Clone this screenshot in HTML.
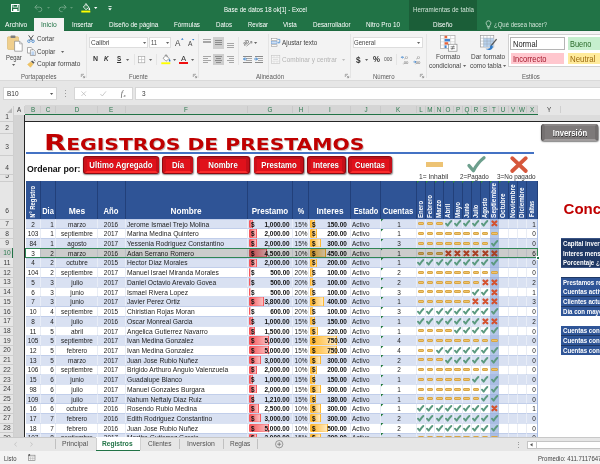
<!DOCTYPE html>
<html lang="es"><head><meta charset="utf-8"><title>Base de datos 18 ok[1] - Excel</title>
<style>
html,body{margin:0;padding:0;}
body{width:600px;height:464px;overflow:hidden;position:relative;background:#fff;font-family:"Liberation Sans",sans-serif;}
#app{position:absolute;left:0;top:0;width:600px;height:464px;overflow:hidden;will-change:transform;}
#app div{position:absolute;box-sizing:border-box;}
.t{white-space:nowrap;}
svg{position:absolute;overflow:visible;}
</style></head><body><div id="app">
<div style="left:0.00px;top:0.00px;width:600.00px;height:31.00px;background:#217346;"></div>
<div style="left:409.30px;top:0.00px;width:67.50px;height:31.00px;background:#1b5e38;"></div>
<div style="left:0.00px;top:30.00px;width:600.00px;height:1.00px;background:#1e6a40;"></div>
<div style="left:34.00px;top:18.00px;width:30.00px;height:13.00px;background:#f3f3f3;"></div>
<div class="t" style="top:5.94px;font-size:6.6px;line-height:7.92px;color:#ffffff;left:224.00px;transform-origin:0 50%;transform:scaleX(0.927);">Base de datos 18 ok[1] - Excel</div>
<div class="t" style="top:6.12px;font-size:6.3px;line-height:7.56px;color:#cfe3d6;left:412.80px;transform-origin:0 50%;transform:scaleX(0.984);">Herramientas de tabla</div>
<div class="t" style="top:21.02px;font-size:6.8px;line-height:8.16px;color:#ffffff;left:4.70px;transform-origin:0 50%;transform:scaleX(0.983);">Archivo</div>
<div class="t" style="top:21.02px;font-size:6.8px;line-height:8.16px;color:#217346;left:41.00px;transform-origin:0 50%;transform:scaleX(0.989);">Inicio</div>
<div class="t" style="top:21.02px;font-size:6.8px;line-height:8.16px;color:#ffffff;left:72.00px;transform-origin:0 50%;transform:scaleX(0.911);">Insertar</div>
<div class="t" style="top:21.02px;font-size:6.8px;line-height:8.16px;color:#ffffff;left:108.70px;transform-origin:0 50%;transform:scaleX(0.931);">Diseño de página</div>
<div class="t" style="top:21.02px;font-size:6.8px;line-height:8.16px;color:#ffffff;left:174.00px;transform-origin:0 50%;transform:scaleX(0.917);">Fórmulas</div>
<div class="t" style="top:21.02px;font-size:6.8px;line-height:8.16px;color:#ffffff;left:215.90px;transform-origin:0 50%;transform:scaleX(0.906);">Datos</div>
<div class="t" style="top:21.02px;font-size:6.8px;line-height:8.16px;color:#ffffff;left:248.00px;transform-origin:0 50%;transform:scaleX(0.868);">Revisar</div>
<div class="t" style="top:21.02px;font-size:6.8px;line-height:8.16px;color:#ffffff;left:283.20px;transform-origin:0 50%;transform:scaleX(0.920);">Vista</div>
<div class="t" style="top:21.02px;font-size:6.8px;line-height:8.16px;color:#ffffff;left:312.50px;transform-origin:0 50%;transform:scaleX(0.919);">Desarrollador</div>
<div class="t" style="top:21.02px;font-size:6.8px;line-height:8.16px;color:#ffffff;left:365.90px;transform-origin:0 50%;transform:scaleX(0.940);">Nitro Pro 10</div>
<div class="t" style="top:21.02px;font-size:6.8px;line-height:8.16px;color:#ffffff;left:433.30px;transform-origin:0 50%;transform:scaleX(0.921);">Diseño</div>
<div class="t" style="top:20.92px;font-size:6.8px;line-height:8.16px;color:#cfe3d6;left:494.00px;transform-origin:0 50%;transform:scaleX(0.882);">¿Qué desea hacer?</div>
<svg style="left:485px;top:19.5px" width="7" height="10" viewBox="0 0 7 10"><path d="M3.5 .8a2.4 2.4 0 0 0-1.3 4.4v1.3h2.6V5.2A2.4 2.4 0 0 0 3.5.8z" fill="none" stroke="#d5e8dc" stroke-width=".7"/><path d="M2.4 7.6h2.2M2.7 8.7h1.6" stroke="#d5e8dc" stroke-width=".6"/></svg>
<svg style="left:10.5px;top:4px" width="9" height="8" viewBox="0 0 9 8"><rect x=".5" y=".5" width="7.6" height="7" fill="none" stroke="#fff" stroke-width="1"/><rect x="2" y=".5" width="4.6" height="2.6" fill="none" stroke="#fff" stroke-width=".8"/><rect x="2.2" y="5" width="4.2" height="2.5" fill="#fff"/></svg>
<svg style="left:34px;top:4px" width="10" height="8" viewBox="0 0 10 8"><path d="M1 3.2h4.6a2.2 2.2 0 0 1 0 4.4H4.5" fill="none" stroke="#6fa586" stroke-width="1"/><path d="M3.2 .8L.8 3.2l2.4 2.4" fill="none" stroke="#6fa586" stroke-width="1"/></svg>
<svg style="left:46.5px;top:7px" width="3" height="2" viewBox="0 0 3 2"><path d="M0 0h3L1.5 1.8z" fill="#5e9a77"/></svg>
<svg style="left:57px;top:4px" width="10" height="8" viewBox="0 0 10 8"><path d="M9 3.2H4.4a2.2 2.2 0 0 0 0 4.4h1.1" fill="none" stroke="#6fa586" stroke-width="1"/><path d="M6.8 .8l2.4 2.4-2.4 2.4" fill="none" stroke="#6fa586" stroke-width="1"/></svg>
<svg style="left:70px;top:7px" width="3" height="2" viewBox="0 0 3 2"><path d="M0 0h3L1.5 1.8z" fill="#5e9a77"/></svg>
<svg style="left:80.5px;top:3px" width="10" height="10" viewBox="0 0 10 10"><path d="M2.200 3.900l3-2.600 2.800 3-3 2.400z" fill="#3a8558" stroke="#fff" stroke-width=".8"/><path d="M4 1.5c0-1.2 1.8-1.2 1.8 0v1.3" fill="none" stroke="#fff" stroke-width=".6"/><path d="M8.3 4.6c.6.9.9 1.4.9 1.8a.8.8 0 0 1-1.6 0c0-.4.3-.9.7-1.8z" fill="#fff"/><rect x=".3" y="7.6" width="9" height="1.9" fill="#ffff00"/></svg>
<svg style="left:94px;top:7px" width="3.4" height="2" viewBox="0 0 3.4 2"><path d="M0 0h3.4L1.7 1.9z" fill="#fff"/></svg>
<svg style="left:108px;top:5.5px" width="4" height="5" viewBox="0 0 4 5"><path d="M.4 .5h3.2" stroke="#fff" stroke-width=".8"/><path d="M.2 2.3h3.6L2 4.4z" fill="#fff"/></svg>
<div style="left:0.00px;top:31.00px;width:600.00px;height:50.00px;background:#f3f3f3;"></div>
<div style="left:0.00px;top:80.30px;width:600.00px;height:1.00px;background:#dadada;"></div>
<div style="left:0.00px;top:81.30px;width:600.00px;height:24.00px;background:#e6e6e6;"></div>
<div style="left:86.30px;top:34.00px;width:0.80px;height:44.00px;background:#e4e4e4;"></div>
<div style="left:198.30px;top:34.00px;width:0.80px;height:44.00px;background:#e4e4e4;"></div>
<div style="left:267.50px;top:34.00px;width:0.80px;height:44.00px;background:#e4e4e4;"></div>
<div style="left:350.00px;top:34.00px;width:0.80px;height:44.00px;background:#e4e4e4;"></div>
<div style="left:425.50px;top:34.00px;width:0.80px;height:44.00px;background:#e4e4e4;"></div>
<div style="left:133.70px;top:54.00px;width:0.70px;height:11.00px;background:#e4e4e4;"></div>
<div style="left:156.30px;top:54.00px;width:0.70px;height:11.00px;background:#e4e4e4;"></div>
<div style="left:238.30px;top:37.00px;width:0.70px;height:28.00px;background:#e4e4e4;"></div>
<div style="left:396.30px;top:54.00px;width:0.70px;height:11.00px;background:#e4e4e4;"></div>
<div class="t" style="top:72.70px;font-size:6.5px;line-height:7.80px;color:#5a5a5a;left:20.50px;transform-origin:0 50%;transform:scaleX(0.927);">Portapapeles</div>
<div class="t" style="top:72.70px;font-size:6.5px;line-height:7.80px;color:#5a5a5a;left:128.70px;transform-origin:0 50%;transform:scaleX(0.929);">Fuente</div>
<div class="t" style="top:72.70px;font-size:6.5px;line-height:7.80px;color:#5a5a5a;left:256.00px;transform-origin:0 50%;transform:scaleX(0.934);">Alineación</div>
<div class="t" style="top:72.70px;font-size:6.5px;line-height:7.80px;color:#5a5a5a;left:372.50px;transform-origin:0 50%;transform:scaleX(0.930);">Número</div>
<div class="t" style="top:72.70px;font-size:6.5px;line-height:7.80px;color:#5a5a5a;left:521.70px;transform-origin:0 50%;transform:scaleX(0.930);">Estilos</div>
<svg style="left:80.5px;top:74px" width="4" height="4" viewBox="0 0 4 4"><path d="M.3 3V.3H3" fill="none" stroke="#777" stroke-width=".6"/><path d="M1.4 1.4L3.7 3.7M3.7 1.9v1.8H1.9" fill="none" stroke="#777" stroke-width=".6"/></svg>
<svg style="left:192.5px;top:74px" width="4" height="4" viewBox="0 0 4 4"><path d="M.3 3V.3H3" fill="none" stroke="#777" stroke-width=".6"/><path d="M1.4 1.4L3.7 3.7M3.7 1.9v1.8H1.9" fill="none" stroke="#777" stroke-width=".6"/></svg>
<svg style="left:344.5px;top:74px" width="4" height="4" viewBox="0 0 4 4"><path d="M.3 3V.3H3" fill="none" stroke="#777" stroke-width=".6"/><path d="M1.4 1.4L3.7 3.7M3.7 1.9v1.8H1.9" fill="none" stroke="#777" stroke-width=".6"/></svg>
<svg style="left:420px;top:74px" width="4" height="4" viewBox="0 0 4 4"><path d="M.3 3V.3H3" fill="none" stroke="#777" stroke-width=".6"/><path d="M1.4 1.4L3.7 3.7M3.7 1.9v1.8H1.9" fill="none" stroke="#777" stroke-width=".6"/></svg>
<svg style="left:7px;top:35px" width="16" height="17" viewBox="0 0 16 17"><rect x=".5" y="1.8" width="11" height="12.6" rx=".8" fill="#f0cf8d" stroke="#d9b56a" stroke-width=".6"/><rect x="3.6" y=".5" width="4.8" height="2.6" rx=".6" fill="#7d7d7d"/><path d="M7.6 6.2h5l2.6 2.6v7.4H7.6z" fill="#fff" stroke="#8a8a8a" stroke-width=".7"/><path d="M12.6 6.2v2.6h2.6" fill="none" stroke="#8a8a8a" stroke-width=".6"/></svg>
<div class="t" style="top:53.90px;font-size:7px;line-height:8.40px;color:#444444;left:6.00px;transform-origin:0 50%;transform:scaleX(0.840);">Pegar</div>
<svg style="left:11.70px;top:64.40px" width="3.2" height="1.9" viewBox="0 0 3.2 1.9"><path d="M0 0h3.2L1.6 1.9z" fill="#666"/></svg>
<svg style="left:27px;top:34.5px" width="8" height="8" viewBox="0 0 8 8"><path d="M1.6 .3l3.700 5.100M6.300 .3l-3.700 5.100" stroke="#444" stroke-width=".9" fill="none"/><circle cx="1.9" cy="6.2" r="1.3" fill="none" stroke="#2b79c8" stroke-width=".7"/><circle cx="6" cy="6.2" r="1.3" fill="none" stroke="#2b79c8" stroke-width=".7"/></svg>
<div class="t" style="top:34.90px;font-size:7px;line-height:8.40px;color:#444444;left:36.70px;transform-origin:0 50%;transform:scaleX(0.890);">Cortar</div>
<svg style="left:26.5px;top:46.5px" width="9" height="9" viewBox="0 0 9 9"><path d="M.5 .5h3.6l1.4 1.4v4.2h-5z" fill="#fff" stroke="#777" stroke-width=".6"/><path d="M3.4 2.8h3.3l1.6 1.6v4.1h-4.9z" fill="#fff" stroke="#777" stroke-width=".6"/><path d="M4.4 5h2.8M4.4 6.2h2.8M4.4 7.4h2.8" stroke="#4a8ad4" stroke-width=".5"/></svg>
<div class="t" style="top:47.60px;font-size:7px;line-height:8.40px;color:#444444;left:36.70px;transform-origin:0 50%;transform:scaleX(0.887);">Copiar</div>
<svg style="left:60.70px;top:50.60px" width="3.2" height="1.9" viewBox="0 0 3.2 1.9"><path d="M0 0h3.2L1.6 1.9z" fill="#666"/></svg>
<svg style="left:26.5px;top:58.5px" width="9" height="9" viewBox="0 0 9 9"><path d="M5.2 1.4l2.4 2.2-1.2 1.2L4 2.6z" fill="#555"/><path d="M6.9 .6l1.4 1.3" stroke="#555" stroke-width=".9"/><path d="M.6 5.4L3.8 2.9l2.3 2.2-2.6 3.2z" fill="#f2c463" stroke="#dba935" stroke-width=".4"/></svg>
<div class="t" style="top:59.80px;font-size:7px;line-height:8.40px;color:#444444;left:36.70px;transform-origin:0 50%;transform:scaleX(0.935);">Copiar formato</div>
<div style="left:89.20px;top:37.00px;width:59.00px;height:11.30px;background:#fff;border:.7px solid #dddddd;"></div>
<div style="left:149.30px;top:37.00px;width:22.20px;height:11.30px;background:#fff;border:.7px solid #dddddd;"></div>
<div class="t" style="top:39.10px;font-size:7px;line-height:8.40px;color:#444444;left:91.00px;transform-origin:0 50%;transform:scaleX(0.933);">Calibri</div>
<div class="t" style="top:39.10px;font-size:7px;line-height:8.40px;color:#444444;left:151.20px;transform-origin:0 50%;transform:scaleX(0.826);">11</div>
<svg style="left:142.90px;top:41.80px" width="3.2" height="1.9" viewBox="0 0 3.2 1.9"><path d="M0 0h3.2L1.6 1.9z" fill="#666"/></svg>
<svg style="left:165.90px;top:41.80px" width="3.2" height="1.9" viewBox="0 0 3.2 1.9"><path d="M0 0h3.2L1.6 1.9z" fill="#666"/></svg>
<div class="t" style="top:38.44px;font-size:8.6px;line-height:10.32px;color:#444444;left:175.30px;transform-origin:0 50%;transform:scaleX(0.941);">A</div>
<svg style="left:180.6px;top:38.2px" width="2.6" height="1.8" viewBox="0 0 2.6 1.8"><path d="M0 1.8h2.6L1.3 0z" fill="#2b79c8"/></svg>
<div class="t" style="top:39.88px;font-size:7.2px;line-height:8.64px;color:#444444;left:187.60px;transform-origin:0 50%;transform:scaleX(0.916);">A</div>
<svg style="left:191.8px;top:38.6px" width="2.4" height="1.6" viewBox="0 0 2.4 1.6"><path d="M0 0h2.4L1.2 1.6z" fill="#2b79c8"/></svg>
<div class="t" style="top:55.46px;font-size:7.4px;line-height:8.88px;color:#333;font-weight:bold;left:92.60px;transform-origin:0 50%;transform:scaleX(0.936);">N</div>
<div class="t" style="top:55.46px;font-size:7.4px;line-height:8.88px;color:#333;font-weight:bold;left:104.00px;transform-origin:0 50%;transform:scaleX(0.861);font-style:italic;">K</div>
<div class="t" style="top:55.16px;font-size:7.4px;line-height:8.88px;color:#333;font-weight:bold;left:116.60px;transform-origin:0 50%;transform:scaleX(0.851);text-decoration:underline;">S</div>
<svg style="left:126.20px;top:58.70px" width="3.2" height="1.9" viewBox="0 0 3.2 1.9"><path d="M0 0h3.2L1.6 1.9z" fill="#666"/></svg>
<svg style="left:138px;top:55.5px" width="7.2" height="7.2" viewBox="0 0 7.2 7.2"><rect x=".4" y=".4" width="6.4" height="6.4" fill="#fff" stroke="#9a9a9a" stroke-width=".6"/><path d="M3.6 .4v6.4M.4 3.6h6.4" stroke="#b5b5b5" stroke-width=".6"/></svg>
<svg style="left:149.20px;top:58.70px" width="3.2" height="1.9" viewBox="0 0 3.2 1.9"><path d="M0 0h3.2L1.6 1.9z" fill="#666"/></svg>
<svg style="left:160.6px;top:54px" width="10" height="10.5" viewBox="0 0 10 10.5"><path d="M2 4.2l3.2-2.8 3 3.2L5 7.2z" fill="#fff" stroke="#666" stroke-width=".6"/><path d="M4 1.8c0-1.4 2-1.4 2 0v1.4" fill="none" stroke="#666" stroke-width=".6"/><path d="M8.6 4.8c.6.9.9 1.5.9 1.9a.8.8 0 0 1-1.7 0c0-.4.3-1 .8-1.9z" fill="#2b79c8"/><rect x=".3" y="8.3" width="9" height="1.9" fill="#ffff00"/></svg>
<svg style="left:172.60px;top:58.70px" width="3.2" height="1.9" viewBox="0 0 3.2 1.9"><path d="M0 0h3.2L1.6 1.9z" fill="#666"/></svg>
<div class="t" style="top:54.24px;font-size:7.6px;line-height:9.12px;color:#333;left:180.60px;transform-origin:0 50%;transform:scaleX(1.026);">A</div>
<div style="left:179.00px;top:62.00px;width:8.80px;height:1.90px;background:#f01010;"></div>
<svg style="left:190.60px;top:58.70px" width="3.2" height="1.9" viewBox="0 0 3.2 1.9"><path d="M0 0h3.2L1.6 1.9z" fill="#666"/></svg>
<div style="left:213.00px;top:37.00px;width:11.20px;height:11.50px;background:#cecece;"></div>
<div style="left:213.00px;top:53.60px;width:11.20px;height:11.80px;background:#cecece;"></div>
<div style="left:203.20px;top:38.60px;width:7.60px;height:0.80px;background:#a6a6a6;"></div>
<div style="left:203.20px;top:40.50px;width:7.60px;height:0.80px;background:#a6a6a6;"></div>
<div style="left:203.20px;top:42.40px;width:7.60px;height:0.80px;background:#a6a6a6;"></div>
<div style="left:214.80px;top:40.40px;width:7.60px;height:0.80px;background:#8c8c8c;"></div>
<div style="left:214.80px;top:42.30px;width:7.60px;height:0.80px;background:#8c8c8c;"></div>
<div style="left:214.80px;top:44.20px;width:7.60px;height:0.80px;background:#8c8c8c;"></div>
<div style="left:226.60px;top:43.00px;width:7.60px;height:0.80px;background:#a6a6a6;"></div>
<div style="left:226.60px;top:44.90px;width:7.60px;height:0.80px;background:#a6a6a6;"></div>
<div style="left:226.60px;top:46.80px;width:7.60px;height:0.80px;background:#a6a6a6;"></div>
<div style="left:203.20px;top:56.40px;width:7.60px;height:0.80px;background:#a6a6a6;"></div>
<div style="left:203.20px;top:58.20px;width:5.00px;height:0.80px;background:#a6a6a6;"></div>
<div style="left:203.20px;top:60.00px;width:7.60px;height:0.80px;background:#a6a6a6;"></div>
<div style="left:203.20px;top:61.80px;width:5.00px;height:0.80px;background:#a6a6a6;"></div>
<div style="left:214.80px;top:56.40px;width:7.60px;height:0.80px;background:#8c8c8c;"></div>
<div style="left:216.10px;top:58.20px;width:5.00px;height:0.80px;background:#8c8c8c;"></div>
<div style="left:214.80px;top:60.00px;width:7.60px;height:0.80px;background:#8c8c8c;"></div>
<div style="left:216.10px;top:61.80px;width:5.00px;height:0.80px;background:#8c8c8c;"></div>
<div style="left:226.60px;top:56.40px;width:7.60px;height:0.80px;background:#a6a6a6;"></div>
<div style="left:229.20px;top:58.20px;width:5.00px;height:0.80px;background:#a6a6a6;"></div>
<div style="left:226.60px;top:60.00px;width:7.60px;height:0.80px;background:#a6a6a6;"></div>
<div style="left:229.20px;top:61.80px;width:5.00px;height:0.80px;background:#a6a6a6;"></div>
<svg style="left:243px;top:37.5px" width="10" height="9" viewBox="0 0 10 9"><text x="0" y="6.4" font-size="6" font-family="Liberation Sans, sans-serif" fill="#555" transform="rotate(-38 3 5)">ab</text><path d="M3.5 8.2L9 3.6M9 3.6l-2 .2M9 3.6l-.3 2" stroke="#666" stroke-width=".6" fill="none"/></svg>
<svg style="left:253.90px;top:41.80px" width="3.2" height="1.9" viewBox="0 0 3.2 1.9"><path d="M0 0h3.2L1.6 1.9z" fill="#666"/></svg>
<div style="left:246.40px;top:55.60px;width:5.20px;height:0.70px;background:#a6a6a6;"></div>
<div style="left:246.40px;top:57.80px;width:5.20px;height:0.70px;background:#a6a6a6;"></div>
<div style="left:246.40px;top:60.00px;width:5.20px;height:0.70px;background:#a6a6a6;"></div>
<div style="left:246.40px;top:62.20px;width:5.20px;height:0.70px;background:#a6a6a6;"></div>
<div style="left:243.20px;top:55.60px;width:8.40px;height:0.70px;background:#8a8a8a;"></div>
<div style="left:243.20px;top:62.20px;width:8.40px;height:0.70px;background:#8a8a8a;"></div>
<svg style="left:243px;top:57.2px" width="4" height="4" viewBox="0 0 4 4"><path d="M3.8 2H.6M2 .5L.5 2 2 3.5" fill="none" stroke="#2b79c8" stroke-width=".9"/></svg>
<div style="left:257.70px;top:55.60px;width:5.20px;height:0.70px;background:#a6a6a6;"></div>
<div style="left:257.70px;top:57.80px;width:5.20px;height:0.70px;background:#a6a6a6;"></div>
<div style="left:257.70px;top:60.00px;width:5.20px;height:0.70px;background:#a6a6a6;"></div>
<div style="left:257.70px;top:62.20px;width:5.20px;height:0.70px;background:#a6a6a6;"></div>
<div style="left:254.50px;top:55.60px;width:8.40px;height:0.70px;background:#8a8a8a;"></div>
<div style="left:254.50px;top:62.20px;width:8.40px;height:0.70px;background:#8a8a8a;"></div>
<svg style="left:254.3px;top:57.2px" width="4" height="4" viewBox="0 0 4 4"><path d="M.2 2h3.2M2 .5L3.5 2 2 3.5" fill="none" stroke="#2b79c8" stroke-width=".9"/></svg>
<svg style="left:271px;top:38px" width="9.5" height="9" viewBox="0 0 9.5 9"><rect x=".4" y=".4" width="5.6" height="2" fill="#fff" stroke="#888" stroke-width=".5"/><rect x=".4" y="3.6" width="5.6" height="2.2" fill="#cfe0f4" stroke="#6b9bd6" stroke-width=".5"/><rect x=".4" y="6.8" width="5.6" height="1.8" fill="#fff" stroke="#888" stroke-width=".5"/><path d="M6.6 1.4h2.2v3.2H7.2M8 3.6l-1 1 1 1" fill="none" stroke="#2b79c8" stroke-width=".6"/></svg>
<div class="t" style="top:39.20px;font-size:7px;line-height:8.40px;color:#444444;left:281.70px;transform-origin:0 50%;transform:scaleX(0.907);">Ajustar texto</div>
<svg style="left:271px;top:55px" width="9.5" height="9" viewBox="0 0 9.5 9"><rect x=".4" y=".4" width="8.4" height="8" fill="#f6f6f6" stroke="#c4c4c4" stroke-width=".6"/><path d="M.4 2.6h8.4M.4 6.2h8.4M3 .4v2.2M6 .4v2.2M3 6.2v2.2M6 6.2v2.2" stroke="#d0d0d0" stroke-width=".5"/><path d="M2 4.4h5" stroke="#c8c8c8" stroke-width=".6"/></svg>
<div class="t" style="top:56.10px;font-size:7px;line-height:8.40px;color:#b4b4b4;left:281.70px;transform-origin:0 50%;transform:scaleX(0.924);">Combinar y centrar</div>
<svg style="left:341.80px;top:58.90px" width="3.2" height="1.9" viewBox="0 0 3.2 1.9"><path d="M0 0h3.2L1.6 1.9z" fill="#bdbdbd"/></svg>
<div style="left:352.50px;top:37.00px;width:70.20px;height:11.30px;background:#fff;border:.7px solid #dddddd;"></div>
<div class="t" style="top:39.20px;font-size:7px;line-height:8.40px;color:#444444;left:354.40px;transform-origin:0 50%;transform:scaleX(0.863);">General</div>
<svg style="left:416.90px;top:41.80px" width="3.2" height="1.9" viewBox="0 0 3.2 1.9"><path d="M0 0h3.2L1.6 1.9z" fill="#666"/></svg>
<div class="t" style="top:54.76px;font-size:8.4px;line-height:10.08px;color:#333;font-weight:bold;left:356.20px;transform-origin:0 50%;transform:scaleX(0.985);">$</div>
<svg style="left:365.40px;top:58.90px" width="3.2" height="1.9" viewBox="0 0 3.2 1.9"><path d="M0 0h3.2L1.6 1.9z" fill="#666"/></svg>
<div class="t" style="top:55.48px;font-size:8.2px;line-height:9.84px;color:#333;font-weight:bold;left:373.40px;transform-origin:0 50%;transform:scaleX(0.960);">%</div>
<div class="t" style="top:56.24px;font-size:5.6px;line-height:6.72px;color:#555;left:384.30px;transform-origin:0 50%;transform:scaleX(0.899);">000</div>
<svg style="left:401px;top:54.6px" width="9.5" height="9.5" viewBox="0 0 9.5 9.5"><text x="3" y="3.9" font-size="4.2" font-family="Liberation Sans, sans-serif" fill="#666">,0</text><text x="1.6" y="8.9" font-size="4.2" font-family="Liberation Sans, sans-serif" fill="#666">,00</text><path d="M3 2.3H.5M1.5 1.2L.4 2.3l1.1 1.1" fill="none" stroke="#2b79c8" stroke-width=".7"/></svg>
<svg style="left:413.3px;top:54.6px" width="9.5" height="9.5" viewBox="0 0 9.5 9.5"><text x="3" y="3.9" font-size="4.2" font-family="Liberation Sans, sans-serif" fill="#666">,0</text><text x="1.6" y="8.9" font-size="4.2" font-family="Liberation Sans, sans-serif" fill="#666">,00</text><path d="M.4 6.9h2.4M1.8 5.8l1.1 1.1-1.1 1.1" fill="none" stroke="#2b79c8" stroke-width=".7"/></svg>
<svg style="left:440px;top:34.6px" width="17.5" height="16.6" viewBox="0 0 17.5 16.6"><rect x=".4" y=".4" width="14.6" height="13" fill="#fff" stroke="#9a9a9a" stroke-width=".6"/><path d="M.4 3.6h14.6M.4 6.8h14.6M.4 10h14.6M4.2 .4v13M10.6 .4v13" stroke="#c2c2c2" stroke-width=".5"/><rect x="4.6" y=".8" width="2.6" height="2.4" fill="#e8643c"/><rect x="4.6" y="4" width="5.4" height="2.4" fill="#3f83d2"/><rect x="4.6" y="7.2" width="3.6" height="2.4" fill="#e8643c"/><rect x="4.6" y="10.4" width="2" height="2.6" fill="#3f83d2"/><rect x="8.4" y="9.2" width="8.6" height="7" fill="#fff" stroke="#777" stroke-width=".6"/><path d="M10.6 11.8h4.2M10.6 13.6h4.2M13.6 10.6l-1.8 4.2" stroke="#444" stroke-width=".6"/></svg>
<div class="t" style="top:53.40px;font-size:7px;line-height:8.40px;color:#444444;left:435.80px;transform-origin:0 50%;transform:scaleX(0.929);">Formato</div>
<div class="t" style="top:61.80px;font-size:7px;line-height:8.40px;color:#444444;left:429.20px;transform-origin:0 50%;transform:scaleX(0.914);">condicional</div>
<svg style="left:463.00px;top:64.90px" width="3.2" height="1.9" viewBox="0 0 3.2 1.9"><path d="M0 0h3.2L1.6 1.9z" fill="#666"/></svg>
<svg style="left:480px;top:34.6px" width="17.5" height="16.6" viewBox="0 0 17.5 16.6"><rect x=".4" y=".4" width="13.4" height="11.6" fill="#fff" stroke="#8d8d8d" stroke-width=".6"/><rect x="3.6" y="3.2" width="10.2" height="8.8" fill="#b8d2ee"/><path d="M.4 3.2h13.4M.4 6.1h13.4M.4 9h13.4M3.6 .4v11.6M7 .4v11.6M10.4 .4v11.6" stroke="#9aa7b5" stroke-width=".5"/><path d="M16.6 4.2l-5.6 6.6" stroke="#555" stroke-width="1.3"/><path d="M11.4 10.2c-1.2.2-1.6 1.4-1.4 2.6-.6 1-2.6 1.2-4.4 1 1 .9 2.6 1.3 4.2 1.1 2.2-.3 3.4-2 3-3.6z" fill="#2e79c7"/></svg>
<div class="t" style="top:53.40px;font-size:7px;line-height:8.40px;color:#444444;left:470.80px;transform-origin:0 50%;transform:scaleX(0.925);">Dar formato</div>
<div class="t" style="top:61.80px;font-size:7px;line-height:8.40px;color:#444444;left:469.70px;transform-origin:0 50%;transform:scaleX(0.920);">como tabla</div>
<svg style="left:502.80px;top:64.90px" width="3.2" height="1.9" viewBox="0 0 3.2 1.9"><path d="M0 0h3.2L1.6 1.9z" fill="#666"/></svg>
<div style="left:508.30px;top:34.20px;width:95.00px;height:33.30px;background:#fff;border:.7px solid #d0d0d0;"></div>
<div style="left:510.00px;top:36.80px;width:55.00px;height:13.00px;background:#fff;border:1.3px solid #b5b5b5;"></div>
<div class="t" style="top:38.76px;font-size:8.4px;line-height:10.08px;color:#222;left:513.00px;transform-origin:0 50%;transform:scaleX(0.898);">Normal</div>
<div style="left:567.60px;top:37.20px;width:40.00px;height:12.40px;background:#c6efce;"></div>
<div class="t" style="top:38.76px;font-size:8.4px;line-height:10.08px;color:#2a6a2a;left:570.00px;transform-origin:0 50%;transform:scaleX(0.885);">Bueno</div>
<div style="left:510.60px;top:52.60px;width:53.60px;height:11.40px;background:#ffc7ce;"></div>
<div class="t" style="top:53.86px;font-size:8.4px;line-height:10.08px;color:#a3152a;left:512.80px;transform-origin:0 50%;transform:scaleX(0.897);">Incorrecto</div>
<div style="left:567.60px;top:52.60px;width:40.00px;height:11.40px;background:#ffeb9c;"></div>
<div class="t" style="top:53.86px;font-size:8.4px;line-height:10.08px;color:#9c6a10;left:569.80px;transform-origin:0 50%;transform:scaleX(0.942);">Neutral</div>
<div style="left:2.70px;top:86.80px;width:54.60px;height:13.00px;background:#fff;border:.6px solid #d6d6d6;"></div>
<div class="t" style="top:89.88px;font-size:7.2px;line-height:8.64px;color:#333;left:6.70px;transform-origin:0 50%;transform:scaleX(0.898);">B10</div>
<svg style="left:50.40px;top:92.70px" width="3.2" height="1.9" viewBox="0 0 3.2 1.9"><path d="M0 0h3.2L1.6 1.9z" fill="#555"/></svg>
<div style="left:65.00px;top:90.40px;width:0.80px;height:0.90px;background:#9c9c9c;"></div>
<div style="left:65.00px;top:93.00px;width:0.80px;height:0.90px;background:#9c9c9c;"></div>
<div style="left:65.00px;top:95.60px;width:0.80px;height:0.90px;background:#9c9c9c;"></div>
<div style="left:74.00px;top:86.80px;width:58.60px;height:13.00px;background:#fff;border:.6px solid #d6d6d6;"></div>
<svg style="left:81.4px;top:91px" width="5.4" height="5.4" viewBox="0 0 5.4 5.4"><path d="M.4 .4l4.6 4.6M5 .4L.4 5" stroke="#b5b5b5" stroke-width=".7"/></svg>
<svg style="left:100.4px;top:91px" width="6.4" height="5.4" viewBox="0 0 6.4 5.4"><path d="M.4 3l1.9 2L6 .4" fill="none" stroke="#b5b5b5" stroke-width=".7"/></svg>
<div class="t" style="top:89.20px;font-size:8px;line-height:9.60px;color:#555;left:120.80px;transform-origin:0 50%;font-style:italic;font-family:'Liberation Serif',serif;">f</div>
<div class="t" style="top:92.60px;font-size:5px;line-height:6.00px;color:#555;left:123.40px;transform-origin:0 50%;font-style:italic;font-family:'Liberation Serif',serif;">x</div>
<div style="left:135.40px;top:86.80px;width:470.00px;height:13.00px;background:#fff;border:.6px solid #d6d6d6;"></div>
<div class="t" style="top:89.76px;font-size:7.4px;line-height:8.88px;color:#333;left:142.20px;transform-origin:0 50%;transform:scaleX(0.875);">3</div>
<div style="left:0.00px;top:104.80px;width:600.00px;height:9.90px;background:#e6e6e6;"></div>
<div style="left:25.00px;top:105.20px;width:512.50px;height:8.40px;background:#d5d5d5;"></div>
<div style="left:25.00px;top:113.50px;width:512.50px;height:1.15px;background:#217346;"></div>
<div style="left:24.20px;top:106.00px;width:0.70px;height:7.40px;background:#cfcfcf;"></div>
<div class="t" style="top:106.00px;font-size:7px;line-height:8.40px;color:#3b3b3b;left:-131.05px;width:300px;text-align:center;transform-origin:50% 50%;transform:scaleX(0.900);">A</div>
<div style="left:39.60px;top:106.00px;width:0.70px;height:7.40px;background:#c9c9c9;"></div>
<div class="t" style="top:106.00px;font-size:7px;line-height:8.40px;color:#2c7a4e;left:-117.50px;width:300px;text-align:center;transform-origin:50% 50%;transform:scaleX(0.900);">B</div>
<div style="left:55.30px;top:106.00px;width:0.70px;height:7.40px;background:#c9c9c9;"></div>
<div class="t" style="top:106.00px;font-size:7px;line-height:8.40px;color:#2c7a4e;left:-102.15px;width:300px;text-align:center;transform-origin:50% 50%;transform:scaleX(0.900);">C</div>
<div style="left:97.10px;top:106.00px;width:0.70px;height:7.40px;background:#c9c9c9;"></div>
<div class="t" style="top:106.00px;font-size:7px;line-height:8.40px;color:#2c7a4e;left:-73.40px;width:300px;text-align:center;transform-origin:50% 50%;transform:scaleX(0.900);">D</div>
<div style="left:125.00px;top:106.00px;width:0.70px;height:7.40px;background:#c9c9c9;"></div>
<div class="t" style="top:106.00px;font-size:7px;line-height:8.40px;color:#2c7a4e;left:-38.55px;width:300px;text-align:center;transform-origin:50% 50%;transform:scaleX(0.900);">E</div>
<div style="left:247.10px;top:106.00px;width:0.70px;height:7.40px;background:#c9c9c9;"></div>
<div class="t" style="top:106.00px;font-size:7px;line-height:8.40px;color:#2c7a4e;left:36.45px;width:300px;text-align:center;transform-origin:50% 50%;transform:scaleX(0.900);">F</div>
<div style="left:292.10px;top:106.00px;width:0.70px;height:7.40px;background:#c9c9c9;"></div>
<div class="t" style="top:106.00px;font-size:7px;line-height:8.40px;color:#2c7a4e;left:120.00px;width:300px;text-align:center;transform-origin:50% 50%;transform:scaleX(0.900);">G</div>
<div style="left:308.30px;top:106.00px;width:0.70px;height:7.40px;background:#c9c9c9;"></div>
<div class="t" style="top:106.00px;font-size:7px;line-height:8.40px;color:#2c7a4e;left:150.60px;width:300px;text-align:center;transform-origin:50% 50%;transform:scaleX(0.900);">H</div>
<div style="left:350.10px;top:106.00px;width:0.70px;height:7.40px;background:#c9c9c9;"></div>
<div class="t" style="top:106.00px;font-size:7px;line-height:8.40px;color:#2c7a4e;left:179.60px;width:300px;text-align:center;transform-origin:50% 50%;transform:scaleX(0.900);">I</div>
<div style="left:380.10px;top:106.00px;width:0.70px;height:7.40px;background:#c9c9c9;"></div>
<div class="t" style="top:106.00px;font-size:7px;line-height:8.40px;color:#2c7a4e;left:215.50px;width:300px;text-align:center;transform-origin:50% 50%;transform:scaleX(0.900);">J</div>
<div style="left:415.90px;top:106.00px;width:0.70px;height:7.40px;background:#c9c9c9;"></div>
<div class="t" style="top:106.00px;font-size:7px;line-height:8.40px;color:#2c7a4e;left:248.40px;width:300px;text-align:center;transform-origin:50% 50%;transform:scaleX(0.900);">K</div>
<div style="left:425.07px;top:106.00px;width:0.70px;height:7.40px;background:#c9c9c9;"></div>
<div class="t" style="top:106.00px;font-size:7px;line-height:8.40px;color:#2c7a4e;left:270.88px;width:300px;text-align:center;transform-origin:50% 50%;transform:scaleX(0.900);">L</div>
<div style="left:434.23px;top:106.00px;width:0.70px;height:7.40px;background:#c9c9c9;"></div>
<div class="t" style="top:106.00px;font-size:7px;line-height:8.40px;color:#2c7a4e;left:280.05px;width:300px;text-align:center;transform-origin:50% 50%;transform:scaleX(0.900);">M</div>
<div style="left:443.40px;top:106.00px;width:0.70px;height:7.40px;background:#c9c9c9;"></div>
<div class="t" style="top:106.00px;font-size:7px;line-height:8.40px;color:#2c7a4e;left:289.22px;width:300px;text-align:center;transform-origin:50% 50%;transform:scaleX(0.900);">N</div>
<div style="left:452.57px;top:106.00px;width:0.70px;height:7.40px;background:#c9c9c9;"></div>
<div class="t" style="top:106.00px;font-size:7px;line-height:8.40px;color:#2c7a4e;left:298.38px;width:300px;text-align:center;transform-origin:50% 50%;transform:scaleX(0.900);">O</div>
<div style="left:461.74px;top:106.00px;width:0.70px;height:7.40px;background:#c9c9c9;"></div>
<div class="t" style="top:106.00px;font-size:7px;line-height:8.40px;color:#2c7a4e;left:307.55px;width:300px;text-align:center;transform-origin:50% 50%;transform:scaleX(0.900);">P</div>
<div style="left:470.90px;top:106.00px;width:0.70px;height:7.40px;background:#c9c9c9;"></div>
<div class="t" style="top:106.00px;font-size:7px;line-height:8.40px;color:#2c7a4e;left:316.72px;width:300px;text-align:center;transform-origin:50% 50%;transform:scaleX(0.900);">Q</div>
<div style="left:480.07px;top:106.00px;width:0.70px;height:7.40px;background:#c9c9c9;"></div>
<div class="t" style="top:106.00px;font-size:7px;line-height:8.40px;color:#2c7a4e;left:325.89px;width:300px;text-align:center;transform-origin:50% 50%;transform:scaleX(0.900);">R</div>
<div style="left:489.24px;top:106.00px;width:0.70px;height:7.40px;background:#c9c9c9;"></div>
<div class="t" style="top:106.00px;font-size:7px;line-height:8.40px;color:#2c7a4e;left:335.05px;width:300px;text-align:center;transform-origin:50% 50%;transform:scaleX(0.900);">S</div>
<div style="left:498.40px;top:106.00px;width:0.70px;height:7.40px;background:#c9c9c9;"></div>
<div class="t" style="top:106.00px;font-size:7px;line-height:8.40px;color:#2c7a4e;left:344.22px;width:300px;text-align:center;transform-origin:50% 50%;transform:scaleX(0.900);">T</div>
<div style="left:507.57px;top:106.00px;width:0.70px;height:7.40px;background:#c9c9c9;"></div>
<div class="t" style="top:106.00px;font-size:7px;line-height:8.40px;color:#2c7a4e;left:353.39px;width:300px;text-align:center;transform-origin:50% 50%;transform:scaleX(0.900);">U</div>
<div style="left:516.74px;top:106.00px;width:0.70px;height:7.40px;background:#c9c9c9;"></div>
<div class="t" style="top:106.00px;font-size:7px;line-height:8.40px;color:#2c7a4e;left:362.55px;width:300px;text-align:center;transform-origin:50% 50%;transform:scaleX(0.900);">V</div>
<div style="left:525.90px;top:106.00px;width:0.70px;height:7.40px;background:#c9c9c9;"></div>
<div class="t" style="top:106.00px;font-size:7px;line-height:8.40px;color:#2c7a4e;left:371.72px;width:300px;text-align:center;transform-origin:50% 50%;transform:scaleX(0.900);">W</div>
<div style="left:537.10px;top:106.00px;width:0.70px;height:7.40px;background:#c9c9c9;"></div>
<div class="t" style="top:106.00px;font-size:7px;line-height:8.40px;color:#2c7a4e;left:381.90px;width:300px;text-align:center;transform-origin:50% 50%;transform:scaleX(0.900);">X</div>
<div style="left:560.30px;top:106.00px;width:0.70px;height:7.40px;background:#cfcfcf;"></div>
<div class="t" style="top:106.00px;font-size:7px;line-height:8.40px;color:#3b3b3b;left:399.10px;width:300px;text-align:center;transform-origin:50% 50%;transform:scaleX(0.900);">Y</div>
<div style="left:639.60px;top:106.00px;width:0.70px;height:7.40px;background:#cfcfcf;"></div>
<div style="left:13.00px;top:106.00px;width:0.70px;height:7.60px;background:#cfcfcf;"></div>
<svg style="left:7px;top:107.8px" width="5" height="5" viewBox="0 0 5.4 5.4"><path d="M5.4 0v5.4H0z" fill="#b9b9b9"/></svg>
<div style="left:0.00px;top:114.30px;width:13.30px;height:323.00px;background:#e6e6e6;"></div>
<div style="left:13.00px;top:114.30px;width:0.70px;height:323.00px;background:#cfcfcf;"></div>
<div style="left:0.00px;top:120.90px;width:13.30px;height:0.70px;background:#cdcdcd;"></div>
<div class="t" style="top:112.96px;font-size:7.4px;line-height:8.88px;color:#3c3c3c;left:-143.10px;width:300px;text-align:center;transform-origin:50% 50%;transform:scaleX(0.900);">1</div>
<div style="left:0.00px;top:132.60px;width:13.30px;height:0.70px;background:#cdcdcd;"></div>
<div class="t" style="top:124.16px;font-size:7.4px;line-height:8.88px;color:#3c3c3c;left:-143.10px;width:300px;text-align:center;transform-origin:50% 50%;transform:scaleX(0.900);">2</div>
<div style="left:0.00px;top:154.60px;width:13.30px;height:0.70px;background:#cdcdcd;"></div>
<div class="t" style="top:142.96px;font-size:7.4px;line-height:8.88px;color:#3c3c3c;left:-143.10px;width:300px;text-align:center;transform-origin:50% 50%;transform:scaleX(0.900);">3</div>
<div style="left:0.00px;top:174.10px;width:13.30px;height:0.70px;background:#cdcdcd;"></div>
<div class="t" style="top:164.16px;font-size:7.4px;line-height:8.88px;color:#3c3c3c;left:-143.10px;width:300px;text-align:center;transform-origin:50% 50%;transform:scaleX(0.900);">4</div>
<div style="left:0.00px;top:180.60px;width:13.30px;height:0.70px;background:#cdcdcd;"></div>
<div class="t" style="top:171.76px;font-size:7.4px;line-height:8.88px;color:#3c3c3c;left:-143.10px;width:300px;text-align:center;transform-origin:50% 50%;transform:scaleX(0.900);">5</div>
<div style="left:0.00px;top:218.60px;width:13.30px;height:0.70px;background:#cdcdcd;"></div>
<div class="t" style="top:207.36px;font-size:7.4px;line-height:8.88px;color:#3c3c3c;left:-143.10px;width:300px;text-align:center;transform-origin:50% 50%;transform:scaleX(0.900);">6</div>
<div style="left:0.00px;top:228.32px;width:13.30px;height:0.70px;background:#cdcdcd;"></div>
<div class="t" style="top:220.02px;font-size:7.4px;line-height:8.88px;color:#3c3c3c;left:-143.10px;width:300px;text-align:center;transform-origin:50% 50%;transform:scaleX(0.900);">7</div>
<div style="left:0.00px;top:238.04px;width:13.30px;height:0.70px;background:#cdcdcd;"></div>
<div class="t" style="top:229.74px;font-size:7.4px;line-height:8.88px;color:#3c3c3c;left:-143.10px;width:300px;text-align:center;transform-origin:50% 50%;transform:scaleX(0.900);">8</div>
<div style="left:0.00px;top:247.76px;width:13.30px;height:0.70px;background:#cdcdcd;"></div>
<div class="t" style="top:239.46px;font-size:7.4px;line-height:8.88px;color:#3c3c3c;left:-143.10px;width:300px;text-align:center;transform-origin:50% 50%;transform:scaleX(0.900);">9</div>
<div style="left:0.00px;top:257.48px;width:13.30px;height:0.70px;background:#cdcdcd;"></div>
<div style="left:0.00px;top:248.46px;width:13.00px;height:9.12px;background:#d5d5d5;"></div>
<div style="left:12.40px;top:248.16px;width:1.10px;height:9.72px;background:#217346;"></div>
<div class="t" style="top:249.18px;font-size:7.4px;line-height:8.88px;color:#2c7a4e;left:-143.10px;width:300px;text-align:center;transform-origin:50% 50%;transform:scaleX(0.900);">10</div>
<div style="left:0.00px;top:267.20px;width:13.30px;height:0.70px;background:#cdcdcd;"></div>
<div class="t" style="top:258.90px;font-size:7.4px;line-height:8.88px;color:#3c3c3c;left:-143.10px;width:300px;text-align:center;transform-origin:50% 50%;transform:scaleX(0.900);">11</div>
<div style="left:0.00px;top:276.92px;width:13.30px;height:0.70px;background:#cdcdcd;"></div>
<div class="t" style="top:268.62px;font-size:7.4px;line-height:8.88px;color:#3c3c3c;left:-143.10px;width:300px;text-align:center;transform-origin:50% 50%;transform:scaleX(0.900);">12</div>
<div style="left:0.00px;top:286.64px;width:13.30px;height:0.70px;background:#cdcdcd;"></div>
<div class="t" style="top:278.34px;font-size:7.4px;line-height:8.88px;color:#3c3c3c;left:-143.10px;width:300px;text-align:center;transform-origin:50% 50%;transform:scaleX(0.900);">13</div>
<div style="left:0.00px;top:296.36px;width:13.30px;height:0.70px;background:#cdcdcd;"></div>
<div class="t" style="top:288.06px;font-size:7.4px;line-height:8.88px;color:#3c3c3c;left:-143.10px;width:300px;text-align:center;transform-origin:50% 50%;transform:scaleX(0.900);">14</div>
<div style="left:0.00px;top:306.08px;width:13.30px;height:0.70px;background:#cdcdcd;"></div>
<div class="t" style="top:297.78px;font-size:7.4px;line-height:8.88px;color:#3c3c3c;left:-143.10px;width:300px;text-align:center;transform-origin:50% 50%;transform:scaleX(0.900);">15</div>
<div style="left:0.00px;top:315.80px;width:13.30px;height:0.70px;background:#cdcdcd;"></div>
<div class="t" style="top:307.50px;font-size:7.4px;line-height:8.88px;color:#3c3c3c;left:-143.10px;width:300px;text-align:center;transform-origin:50% 50%;transform:scaleX(0.900);">16</div>
<div style="left:0.00px;top:325.52px;width:13.30px;height:0.70px;background:#cdcdcd;"></div>
<div class="t" style="top:317.22px;font-size:7.4px;line-height:8.88px;color:#3c3c3c;left:-143.10px;width:300px;text-align:center;transform-origin:50% 50%;transform:scaleX(0.900);">17</div>
<div style="left:0.00px;top:335.24px;width:13.30px;height:0.70px;background:#cdcdcd;"></div>
<div class="t" style="top:326.94px;font-size:7.4px;line-height:8.88px;color:#3c3c3c;left:-143.10px;width:300px;text-align:center;transform-origin:50% 50%;transform:scaleX(0.900);">18</div>
<div style="left:0.00px;top:344.96px;width:13.30px;height:0.70px;background:#cdcdcd;"></div>
<div class="t" style="top:336.66px;font-size:7.4px;line-height:8.88px;color:#3c3c3c;left:-143.10px;width:300px;text-align:center;transform-origin:50% 50%;transform:scaleX(0.900);">19</div>
<div style="left:0.00px;top:354.68px;width:13.30px;height:0.70px;background:#cdcdcd;"></div>
<div class="t" style="top:346.38px;font-size:7.4px;line-height:8.88px;color:#3c3c3c;left:-143.10px;width:300px;text-align:center;transform-origin:50% 50%;transform:scaleX(0.900);">20</div>
<div style="left:0.00px;top:364.40px;width:13.30px;height:0.70px;background:#cdcdcd;"></div>
<div class="t" style="top:356.10px;font-size:7.4px;line-height:8.88px;color:#3c3c3c;left:-143.10px;width:300px;text-align:center;transform-origin:50% 50%;transform:scaleX(0.900);">21</div>
<div style="left:0.00px;top:374.12px;width:13.30px;height:0.70px;background:#cdcdcd;"></div>
<div class="t" style="top:365.82px;font-size:7.4px;line-height:8.88px;color:#3c3c3c;left:-143.10px;width:300px;text-align:center;transform-origin:50% 50%;transform:scaleX(0.900);">22</div>
<div style="left:0.00px;top:383.84px;width:13.30px;height:0.70px;background:#cdcdcd;"></div>
<div class="t" style="top:375.54px;font-size:7.4px;line-height:8.88px;color:#3c3c3c;left:-143.10px;width:300px;text-align:center;transform-origin:50% 50%;transform:scaleX(0.900);">23</div>
<div style="left:0.00px;top:393.56px;width:13.30px;height:0.70px;background:#cdcdcd;"></div>
<div class="t" style="top:385.26px;font-size:7.4px;line-height:8.88px;color:#3c3c3c;left:-143.10px;width:300px;text-align:center;transform-origin:50% 50%;transform:scaleX(0.900);">24</div>
<div style="left:0.00px;top:403.28px;width:13.30px;height:0.70px;background:#cdcdcd;"></div>
<div class="t" style="top:394.98px;font-size:7.4px;line-height:8.88px;color:#3c3c3c;left:-143.10px;width:300px;text-align:center;transform-origin:50% 50%;transform:scaleX(0.900);">25</div>
<div style="left:0.00px;top:413.00px;width:13.30px;height:0.70px;background:#cdcdcd;"></div>
<div class="t" style="top:404.70px;font-size:7.4px;line-height:8.88px;color:#3c3c3c;left:-143.10px;width:300px;text-align:center;transform-origin:50% 50%;transform:scaleX(0.900);">26</div>
<div style="left:0.00px;top:422.72px;width:13.30px;height:0.70px;background:#cdcdcd;"></div>
<div class="t" style="top:414.42px;font-size:7.4px;line-height:8.88px;color:#3c3c3c;left:-143.10px;width:300px;text-align:center;transform-origin:50% 50%;transform:scaleX(0.900);">27</div>
<div style="left:0.00px;top:432.44px;width:13.30px;height:0.70px;background:#cdcdcd;"></div>
<div class="t" style="top:424.14px;font-size:7.4px;line-height:8.88px;color:#3c3c3c;left:-143.10px;width:300px;text-align:center;transform-origin:50% 50%;transform:scaleX(0.900);">28</div>
<div style="left:0.00px;top:442.16px;width:13.30px;height:0.70px;background:#cdcdcd;"></div>
<div class="t" style="top:433.86px;font-size:7.4px;line-height:8.88px;color:#3c3c3c;left:-143.10px;width:300px;text-align:center;transform-origin:50% 50%;transform:scaleX(0.900);">29</div>
<div style="left:0.00px;top:172.60px;width:13.00px;height:1.70px;background:#e6e6e6;"></div>
<div style="left:0.00px;top:174.10px;width:13.30px;height:0.70px;background:#cdcdcd;"></div>
<div style="left:13.70px;top:114.70px;width:587.00px;height:6.60px;background:#dcdcdc;"></div>
<div style="left:13.70px;top:114.70px;width:10.60px;height:323.00px;background:#d3d3d3;"></div>
<div style="left:24.20px;top:121.10px;width:576.00px;height:1.30px;background:#262626;"></div>
<div style="left:24.20px;top:114.50px;width:1.30px;height:323.00px;background:#262626;"></div>
<div class="t" style="left:43.6px;top:128.6px;line-height:28px;font-family:'DejaVu Sans',sans-serif;font-weight:bold;color:#c00000;transform-origin:0 50%;transform:scaleX(1.337);text-shadow:.7px .7px .6px rgba(110,110,110,.45);"><span style="font-size:21.6px">R</span><span style="font-size:15.2px">EGISTROS</span><span style="font-size:15.2px"> </span><span style="font-size:15.2px">DE</span><span style="font-size:15.2px"> </span><span style="font-size:15.2px">PRESTAMOS</span></div>
<div style="left:25.60px;top:151.90px;width:508.40px;height:2.50px;background:#4472c4;"></div>
<div class="t" style="top:163.16px;font-size:9.4px;line-height:11.28px;color:#111;font-weight:bold;left:27.40px;transform-origin:0 50%;transform:scaleX(0.933);">Ordenar por:</div>
<div style="left:83.2px;top:156px;width:76.0px;height:17.8px;border-radius:3px;background:#8e0810;box-shadow:.4px 1px 1.4px rgba(0,0,0,.45);"><div style="left:.7px;top:.7px;right:.7px;bottom:.7px;border-radius:2.3px;background:#e0111b;border-style:solid;border-width:2.6px 3.8px 2.9px 3.8px;border-color:#b5131b #c40f19 #fb2b2b #cc111a;"></div></div>
<div class="t" style="top:160.68px;font-size:8.2px;line-height:9.84px;color:#fff;font-weight:bold;left:-28.80px;width:300px;text-align:center;transform-origin:50% 50%;transform:scaleX(0.964);text-shadow:.3px .4px .5px rgba(80,0,0,.6);">Ultimo Agregado</div>
<div style="left:162.4px;top:156px;width:30.8px;height:17.8px;border-radius:3px;background:#8e0810;box-shadow:.4px 1px 1.4px rgba(0,0,0,.45);"><div style="left:.7px;top:.7px;right:.7px;bottom:.7px;border-radius:2.3px;background:#e0111b;border-style:solid;border-width:2.6px 3.8px 2.9px 3.8px;border-color:#b5131b #c40f19 #fb2b2b #cc111a;"></div></div>
<div class="t" style="top:160.68px;font-size:8.2px;line-height:9.84px;color:#fff;font-weight:bold;left:27.80px;width:300px;text-align:center;transform-origin:50% 50%;transform:scaleX(0.956);text-shadow:.3px .4px .5px rgba(80,0,0,.6);">Día</div>
<div style="left:196.8px;top:156px;width:52.8px;height:17.8px;border-radius:3px;background:#8e0810;box-shadow:.4px 1px 1.4px rgba(0,0,0,.45);"><div style="left:.7px;top:.7px;right:.7px;bottom:.7px;border-radius:2.3px;background:#e0111b;border-style:solid;border-width:2.6px 3.8px 2.9px 3.8px;border-color:#b5131b #c40f19 #fb2b2b #cc111a;"></div></div>
<div class="t" style="top:160.68px;font-size:8.2px;line-height:9.84px;color:#fff;font-weight:bold;left:73.20px;width:300px;text-align:center;transform-origin:50% 50%;transform:scaleX(0.952);text-shadow:.3px .4px .5px rgba(80,0,0,.6);">Nombre</div>
<div style="left:253.6px;top:156px;width:50.2px;height:17.8px;border-radius:3px;background:#8e0810;box-shadow:.4px 1px 1.4px rgba(0,0,0,.45);"><div style="left:.7px;top:.7px;right:.7px;bottom:.7px;border-radius:2.3px;background:#e0111b;border-style:solid;border-width:2.6px 3.8px 2.9px 3.8px;border-color:#b5131b #c40f19 #fb2b2b #cc111a;"></div></div>
<div class="t" style="top:160.68px;font-size:8.2px;line-height:9.84px;color:#fff;font-weight:bold;left:128.70px;width:300px;text-align:center;transform-origin:50% 50%;transform:scaleX(0.950);text-shadow:.3px .4px .5px rgba(80,0,0,.6);">Prestamo</div>
<div style="left:307px;top:156px;width:38.8px;height:17.8px;border-radius:3px;background:#8e0810;box-shadow:.4px 1px 1.4px rgba(0,0,0,.45);"><div style="left:.7px;top:.7px;right:.7px;bottom:.7px;border-radius:2.3px;background:#e0111b;border-style:solid;border-width:2.6px 3.8px 2.9px 3.8px;border-color:#b5131b #c40f19 #fb2b2b #cc111a;"></div></div>
<div class="t" style="top:160.68px;font-size:8.2px;line-height:9.84px;color:#fff;font-weight:bold;left:176.40px;width:300px;text-align:center;transform-origin:50% 50%;transform:scaleX(0.967);text-shadow:.3px .4px .5px rgba(80,0,0,.6);">Interes</div>
<div style="left:348.4px;top:156px;width:43.8px;height:17.8px;border-radius:3px;background:#8e0810;box-shadow:.4px 1px 1.4px rgba(0,0,0,.45);"><div style="left:.7px;top:.7px;right:.7px;bottom:.7px;border-radius:2.3px;background:#e0111b;border-style:solid;border-width:2.6px 3.8px 2.9px 3.8px;border-color:#b5131b #c40f19 #fb2b2b #cc111a;"></div></div>
<div class="t" style="top:160.68px;font-size:8.2px;line-height:9.84px;color:#fff;font-weight:bold;left:220.30px;width:300px;text-align:center;transform-origin:50% 50%;transform:scaleX(0.921);text-shadow:.3px .4px .5px rgba(80,0,0,.6);">Cuentas</div>
<div style="left:425.80px;top:161.80px;width:17.20px;height:5.60px;background:#edc374;"></div>
<svg style="left:467px;top:155.6px" width="19" height="17" viewBox="0 0 19 17"><path d="M2 9.6l4.400 5.200C9 9.800 12.600 5.200 17 1.800" fill="none" stroke="#6d9f8d" stroke-width="3.300" stroke-linecap="round" stroke-linejoin="round"/></svg>
<svg style="left:510px;top:155.6px" width="18" height="17" viewBox="0 0 18 17"><path d="M2.200 2.200L15.800 15M15.800 2.200L2.200 15" fill="none" stroke="#d6573b" stroke-width="3.800" stroke-linecap="round"/></svg>
<div class="t" style="top:172.84px;font-size:6.6px;line-height:7.92px;color:#333;left:418.80px;transform-origin:0 50%;transform:scaleX(1.014);">1= Inhabil</div>
<div class="t" style="top:172.84px;font-size:6.6px;line-height:7.92px;color:#333;left:460.20px;transform-origin:0 50%;transform:scaleX(0.951);">2=Pagado</div>
<div class="t" style="top:172.84px;font-size:6.6px;line-height:7.92px;color:#333;left:497.20px;transform-origin:0 50%;transform:scaleX(0.969);">3=No pagado</div>
<div style="left:541.2px;top:123.6px;width:57.0px;height:17.6px;border-radius:3px;background:#4a4747;box-shadow:.4px 1px 1.4px rgba(0,0,0,.5);"><div style="left:.7px;top:.7px;right:.7px;bottom:.7px;border-radius:2.3px;background:#7d7979;border-style:solid;border-width:2.4px 3.2px 2.4px 3.2px;border-color:#8b8787 #716d6d #a19d9d #757171;"></div></div>
<div class="t" style="top:127.86px;font-size:8.4px;line-height:10.08px;color:#fff;font-weight:bold;left:419.80px;width:300px;text-align:center;transform-origin:50% 50%;transform:scaleX(0.926);text-shadow:.4px .5px .6px rgba(0,0,0,.6);">Inversión</div>
<div style="left:25.70px;top:181.00px;width:511.80px;height:38.00px;background:#2f5496;"></div>
<div style="left:489.64px;top:181.00px;width:9.17px;height:38.00px;background:#375ca3;"></div>
<div style="left:39.60px;top:181.00px;width:0.80px;height:38.00px;background:#22407a;"></div>
<div style="left:55.30px;top:181.00px;width:0.80px;height:38.00px;background:#22407a;"></div>
<div style="left:97.10px;top:181.00px;width:0.80px;height:38.00px;background:#22407a;"></div>
<div style="left:125.00px;top:181.00px;width:0.80px;height:38.00px;background:#22407a;"></div>
<div style="left:247.10px;top:181.00px;width:0.80px;height:38.00px;background:#22407a;"></div>
<div style="left:292.10px;top:181.00px;width:0.80px;height:38.00px;background:#22407a;"></div>
<div style="left:308.30px;top:181.00px;width:0.80px;height:38.00px;background:#22407a;"></div>
<div style="left:350.10px;top:181.00px;width:0.80px;height:38.00px;background:#22407a;"></div>
<div style="left:380.10px;top:181.00px;width:0.80px;height:38.00px;background:#22407a;"></div>
<div style="left:415.90px;top:181.00px;width:0.80px;height:38.00px;background:#22407a;"></div>
<div style="left:425.07px;top:181.00px;width:0.80px;height:38.00px;background:#22407a;"></div>
<div style="left:434.23px;top:181.00px;width:0.80px;height:38.00px;background:#22407a;"></div>
<div style="left:443.40px;top:181.00px;width:0.80px;height:38.00px;background:#22407a;"></div>
<div style="left:452.57px;top:181.00px;width:0.80px;height:38.00px;background:#22407a;"></div>
<div style="left:461.74px;top:181.00px;width:0.80px;height:38.00px;background:#22407a;"></div>
<div style="left:470.90px;top:181.00px;width:0.80px;height:38.00px;background:#22407a;"></div>
<div style="left:480.07px;top:181.00px;width:0.80px;height:38.00px;background:#22407a;"></div>
<div style="left:489.24px;top:181.00px;width:0.80px;height:38.00px;background:#22407a;"></div>
<div style="left:498.40px;top:181.00px;width:0.80px;height:38.00px;background:#22407a;"></div>
<div style="left:507.57px;top:181.00px;width:0.80px;height:38.00px;background:#22407a;"></div>
<div style="left:516.74px;top:181.00px;width:0.80px;height:38.00px;background:#22407a;"></div>
<div style="left:525.90px;top:181.00px;width:0.80px;height:38.00px;background:#22407a;"></div>
<div style="left:537.10px;top:181.00px;width:0.80px;height:38.00px;background:#22407a;"></div>
<div class="t" style="top:206.62px;font-size:8.3px;line-height:9.96px;color:#fff;font-weight:bold;left:-102.15px;width:300px;text-align:center;transform-origin:50% 50%;transform:scaleX(0.898);">Dia</div>
<div class="t" style="top:206.62px;font-size:8.3px;line-height:9.96px;color:#fff;font-weight:bold;left:-73.40px;width:300px;text-align:center;transform-origin:50% 50%;transform:scaleX(1.022);">Mes</div>
<div class="t" style="top:206.62px;font-size:8.3px;line-height:9.96px;color:#fff;font-weight:bold;left:-38.55px;width:300px;text-align:center;transform-origin:50% 50%;transform:scaleX(0.930);">Año</div>
<div class="t" style="top:206.62px;font-size:8.3px;line-height:9.96px;color:#fff;font-weight:bold;left:36.45px;width:300px;text-align:center;transform-origin:50% 50%;transform:scaleX(0.989);">Nombre</div>
<div class="t" style="top:206.62px;font-size:8.3px;line-height:9.96px;color:#fff;font-weight:bold;left:120.00px;width:300px;text-align:center;transform-origin:50% 50%;transform:scaleX(0.965);">Prestamo</div>
<div class="t" style="top:206.62px;font-size:8.3px;line-height:9.96px;color:#fff;font-weight:bold;left:150.60px;width:300px;text-align:center;transform-origin:50% 50%;transform:scaleX(0.881);">%</div>
<div class="t" style="top:206.62px;font-size:8.3px;line-height:9.96px;color:#fff;font-weight:bold;left:179.60px;width:300px;text-align:center;transform-origin:50% 50%;transform:scaleX(0.992);">Interes</div>
<div class="t" style="top:206.62px;font-size:8.3px;line-height:9.96px;color:#fff;font-weight:bold;left:215.50px;width:300px;text-align:center;transform-origin:50% 50%;transform:scaleX(0.893);">Estado</div>
<div class="t" style="top:206.62px;font-size:8.3px;line-height:9.96px;color:#fff;font-weight:bold;left:248.40px;width:300px;text-align:center;transform-origin:50% 50%;transform:scaleX(0.931);">Cuentas</div>
<div class="t" style="left:32.50px;top:213.76px;font-size:6.4px;line-height:7.68px;color:#fff;font-weight:bold;transform-origin:0 50%;transform:rotate(-90deg) scaleX(0.916);">N° Registro</div>
<div class="t" style="left:420.88px;top:213.90px;font-size:6.5px;line-height:7.80px;color:#fff;font-weight:bold;transform-origin:0 50%;transform:rotate(-90deg) scaleX(0.923);">Enero</div>
<div class="t" style="left:430.05px;top:213.90px;font-size:6.5px;line-height:7.80px;color:#fff;font-weight:bold;transform-origin:0 50%;transform:rotate(-90deg) scaleX(0.950);">Febrero</div>
<div class="t" style="left:439.22px;top:213.90px;font-size:6.5px;line-height:7.80px;color:#fff;font-weight:bold;transform-origin:0 50%;transform:rotate(-90deg) scaleX(0.958);">Marzo</div>
<div class="t" style="left:448.38px;top:213.90px;font-size:6.5px;line-height:7.80px;color:#fff;font-weight:bold;transform-origin:0 50%;transform:rotate(-90deg) scaleX(0.946);">Abril</div>
<div class="t" style="left:457.55px;top:213.90px;font-size:6.5px;line-height:7.80px;color:#fff;font-weight:bold;transform-origin:0 50%;transform:rotate(-90deg) scaleX(0.951);">Mayo</div>
<div class="t" style="left:466.72px;top:213.90px;font-size:6.5px;line-height:7.80px;color:#fff;font-weight:bold;transform-origin:0 50%;transform:rotate(-90deg) scaleX(0.842);">Junio</div>
<div class="t" style="left:475.89px;top:213.90px;font-size:6.5px;line-height:7.80px;color:#fff;font-weight:bold;transform-origin:0 50%;transform:rotate(-90deg) scaleX(0.857);">Julio</div>
<div class="t" style="left:485.05px;top:213.90px;font-size:6.5px;line-height:7.80px;color:#fff;font-weight:bold;transform-origin:0 50%;transform:rotate(-90deg) scaleX(0.893);">Agosto</div>
<div class="t" style="left:494.22px;top:213.90px;font-size:6.5px;line-height:7.80px;color:#fff;font-weight:bold;transform-origin:0 50%;transform:rotate(-90deg) scaleX(0.989);">Septiembre</div>
<div class="t" style="left:503.39px;top:213.90px;font-size:6.5px;line-height:7.80px;color:#fff;font-weight:bold;transform-origin:0 50%;transform:rotate(-90deg) scaleX(0.983);">Octubre</div>
<div class="t" style="left:512.55px;top:213.90px;font-size:6.5px;line-height:7.80px;color:#fff;font-weight:bold;transform-origin:0 50%;transform:rotate(-90deg) scaleX(0.997);">Noviembre</div>
<div class="t" style="left:521.72px;top:213.90px;font-size:6.5px;line-height:7.80px;color:#fff;font-weight:bold;transform-origin:0 50%;transform:rotate(-90deg) scaleX(0.970);">Diciembre</div>
<div class="t" style="left:531.90px;top:213.40px;font-size:6.5px;line-height:7.80px;color:#fff;font-weight:bold;transform-origin:0 50%;transform:rotate(-90deg) scaleX(0.852);">Faltas</div>
<svg style="left:416.60px;top:181.2px" width="2.2" height="2.2" viewBox="0 0 2 2"><path d="M0 0h2L0 2z" fill="#2e8b3d"/></svg>
<svg style="left:425.77px;top:181.2px" width="2.2" height="2.2" viewBox="0 0 2 2"><path d="M0 0h2L0 2z" fill="#2e8b3d"/></svg>
<svg style="left:434.93px;top:181.2px" width="2.2" height="2.2" viewBox="0 0 2 2"><path d="M0 0h2L0 2z" fill="#2e8b3d"/></svg>
<svg style="left:444.10px;top:181.2px" width="2.2" height="2.2" viewBox="0 0 2 2"><path d="M0 0h2L0 2z" fill="#2e8b3d"/></svg>
<svg style="left:453.27px;top:181.2px" width="2.2" height="2.2" viewBox="0 0 2 2"><path d="M0 0h2L0 2z" fill="#2e8b3d"/></svg>
<svg style="left:462.44px;top:181.2px" width="2.2" height="2.2" viewBox="0 0 2 2"><path d="M0 0h2L0 2z" fill="#2e8b3d"/></svg>
<svg style="left:471.60px;top:181.2px" width="2.2" height="2.2" viewBox="0 0 2 2"><path d="M0 0h2L0 2z" fill="#2e8b3d"/></svg>
<svg style="left:480.77px;top:181.2px" width="2.2" height="2.2" viewBox="0 0 2 2"><path d="M0 0h2L0 2z" fill="#2e8b3d"/></svg>
<svg style="left:489.94px;top:181.2px" width="2.2" height="2.2" viewBox="0 0 2 2"><path d="M0 0h2L0 2z" fill="#2e8b3d"/></svg>
<svg style="left:499.10px;top:181.2px" width="2.2" height="2.2" viewBox="0 0 2 2"><path d="M0 0h2L0 2z" fill="#2e8b3d"/></svg>
<svg style="left:508.27px;top:181.2px" width="2.2" height="2.2" viewBox="0 0 2 2"><path d="M0 0h2L0 2z" fill="#2e8b3d"/></svg>
<div style="left:0;top:0;width:600px;height:437px;overflow:hidden;">
<div style="left:25.70px;top:219.00px;width:511.80px;height:9.77px;background:#d9e1f2;"></div>
<div style="left:489.64px;top:219.00px;width:9.17px;height:9.77px;background:#a9bde3;"></div>
<div style="left:25.70px;top:218.70px;width:511.80px;height:0.60px;background:rgba(142,169,219,.32);"></div>
<div style="left:39.70px;top:219.00px;width:0.60px;height:9.72px;background:rgba(255,255,255,.4);"></div>
<div style="left:55.40px;top:219.00px;width:0.60px;height:9.72px;background:rgba(255,255,255,.4);"></div>
<div style="left:97.20px;top:219.00px;width:0.60px;height:9.72px;background:rgba(255,255,255,.4);"></div>
<div style="left:125.10px;top:219.00px;width:0.60px;height:9.72px;background:rgba(255,255,255,.4);"></div>
<div style="left:247.20px;top:219.00px;width:0.60px;height:9.72px;background:rgba(255,255,255,.4);"></div>
<div style="left:292.20px;top:219.00px;width:0.60px;height:9.72px;background:rgba(255,255,255,.4);"></div>
<div style="left:308.40px;top:219.00px;width:0.60px;height:9.72px;background:rgba(255,255,255,.4);"></div>
<div style="left:350.20px;top:219.00px;width:0.60px;height:9.72px;background:rgba(255,255,255,.4);"></div>
<div style="left:380.20px;top:219.00px;width:0.60px;height:9.72px;background:rgba(255,255,255,.4);"></div>
<div style="left:416.00px;top:219.00px;width:0.60px;height:9.72px;background:rgba(255,255,255,.4);"></div>
<div style="left:425.17px;top:219.00px;width:0.60px;height:9.72px;background:rgba(255,255,255,.4);"></div>
<div style="left:434.33px;top:219.00px;width:0.60px;height:9.72px;background:rgba(255,255,255,.4);"></div>
<div style="left:443.50px;top:219.00px;width:0.60px;height:9.72px;background:rgba(255,255,255,.4);"></div>
<div style="left:452.67px;top:219.00px;width:0.60px;height:9.72px;background:rgba(255,255,255,.4);"></div>
<div style="left:461.83px;top:219.00px;width:0.60px;height:9.72px;background:rgba(255,255,255,.4);"></div>
<div style="left:471.00px;top:219.00px;width:0.60px;height:9.72px;background:rgba(255,255,255,.4);"></div>
<div style="left:480.17px;top:219.00px;width:0.60px;height:9.72px;background:rgba(255,255,255,.4);"></div>
<div style="left:507.67px;top:219.00px;width:0.60px;height:9.72px;background:rgba(255,255,255,.4);"></div>
<div style="left:516.84px;top:219.00px;width:0.60px;height:9.72px;background:rgba(255,255,255,.4);"></div>
<div style="left:526.00px;top:219.00px;width:0.60px;height:9.72px;background:rgba(255,255,255,.4);"></div>
<div style="left:537.20px;top:219.00px;width:0.60px;height:9.72px;background:rgba(255,255,255,.4);"></div>
<div style="left:248.6px;top:219.70px;width:4.10px;height:8.32px;background:linear-gradient(90deg,#f7585c,#fbc0c2);border:.5px solid rgba(247,88,92,.35);border-left-color:#f7585c;"></div>
<div style="left:309.8px;top:219.70px;width:5.51px;height:8.32px;background:linear-gradient(90deg,#ffb62a,#ffebc4);border:.5px solid rgba(255,182,42,.3);border-left-color:#ffb62a;"></div>
<div class="t" style="top:220.58px;font-size:6.8px;line-height:8.16px;color:#1c1c1c;left:-117.30px;width:300px;text-align:center;transform-origin:50% 50%;transform:scaleX(0.945);">2</div>
<div class="t" style="top:220.58px;font-size:6.8px;line-height:8.16px;color:#1c1c1c;right:545.80px;transform-origin:100% 50%;transform:scaleX(0.945);">1</div>
<div class="t" style="top:220.58px;font-size:6.8px;line-height:8.16px;color:#1c1c1c;left:-73.10px;width:300px;text-align:center;transform-origin:50% 50%;transform:scaleX(0.945);">marzo</div>
<div class="t" style="top:220.58px;font-size:6.8px;line-height:8.16px;color:#1c1c1c;left:-38.55px;width:300px;text-align:center;transform-origin:50% 50%;transform:scaleX(0.945);">2016</div>
<div class="t" style="top:220.58px;font-size:6.8px;line-height:8.16px;color:#1c1c1c;left:126.80px;transform-origin:0 50%;transform:scaleX(0.985);">Jerome Ismael Trejo Molina</div>
<div class="t" style="top:220.58px;font-size:6.8px;line-height:8.16px;color:#111;font-weight:bold;left:250.60px;transform-origin:0 50%;transform:scaleX(0.945);">$</div>
<div class="t" style="top:220.58px;font-size:6.8px;line-height:8.16px;color:#111;font-weight:bold;right:310.40px;transform-origin:100% 50%;transform:scaleX(0.945);">1,000.00</div>
<div class="t" style="top:220.58px;font-size:6.8px;line-height:8.16px;color:#1c1c1c;left:150.60px;width:300px;text-align:center;transform-origin:50% 50%;transform:scaleX(0.945);">15%</div>
<div class="t" style="top:220.58px;font-size:6.8px;line-height:8.16px;color:#111;font-weight:bold;left:311.80px;transform-origin:0 50%;transform:scaleX(0.945);">$</div>
<div class="t" style="top:220.58px;font-size:6.8px;line-height:8.16px;color:#111;font-weight:bold;right:253.00px;transform-origin:100% 50%;transform:scaleX(0.945);">150.00</div>
<div class="t" style="top:220.58px;font-size:6.8px;line-height:8.16px;color:#1c1c1c;left:352.20px;transform-origin:0 50%;transform:scaleX(0.945);">Activo</div>
<div class="t" style="top:220.58px;font-size:6.8px;line-height:8.16px;color:#1c1c1c;left:248.60px;width:300px;text-align:center;transform-origin:50% 50%;transform:scaleX(0.945);">1</div>
<svg style="left:380.9px;top:219.20px" width="2.4" height="2.4" viewBox="0 0 2 2"><path d="M0 0h2L0 2z" fill="#1f7a3a"/></svg>
<div style="left:417.58px;top:222px;width:6.6px;height:3px;border-radius:1px;background:#efc46c;border:.6px solid #d8a646;"></div>
<div style="left:426.75px;top:222px;width:6.6px;height:3px;border-radius:1px;background:#efc46c;border:.6px solid #d8a646;"></div>
<div style="left:435.92px;top:222px;width:6.6px;height:3px;border-radius:1px;background:#efc46c;border:.6px solid #d8a646;"></div>
<svg style="left:444.78px;top:220.46px" width="7.2" height="6.8" viewBox="0 0 7.2 6.8"><path d="M1 3.700l1.700 1.900C3.700 3.700 5 2.100 6.300 1" fill="none" stroke="#5b9a7f" stroke-width="2" stroke-linecap="round" stroke-linejoin="round"/></svg>
<svg style="left:453.95px;top:220.46px" width="7.2" height="6.8" viewBox="0 0 7.2 6.8"><path d="M1 3.700l1.700 1.900C3.700 3.700 5 2.100 6.300 1" fill="none" stroke="#5b9a7f" stroke-width="2" stroke-linecap="round" stroke-linejoin="round"/></svg>
<svg style="left:463.12px;top:220.46px" width="7.2" height="6.8" viewBox="0 0 7.2 6.8"><path d="M1 3.700l1.700 1.900C3.700 3.700 5 2.100 6.300 1" fill="none" stroke="#5b9a7f" stroke-width="2" stroke-linecap="round" stroke-linejoin="round"/></svg>
<svg style="left:472.29px;top:220.46px" width="7.2" height="6.8" viewBox="0 0 7.2 6.8"><path d="M1 3.700l1.700 1.900C3.700 3.700 5 2.100 6.300 1" fill="none" stroke="#5b9a7f" stroke-width="2" stroke-linecap="round" stroke-linejoin="round"/></svg>
<svg style="left:481.45px;top:220.46px" width="7.2" height="6.8" viewBox="0 0 7.2 6.8"><path d="M1 3.700l1.700 1.900C3.700 3.700 5 2.100 6.300 1" fill="none" stroke="#5b9a7f" stroke-width="2" stroke-linecap="round" stroke-linejoin="round"/></svg>
<svg style="left:490.82px;top:220.46px" width="6.8" height="6.8" viewBox="0 0 6.8 6.8"><path d="M1.500 1.500l3.800 3.800M5.300 1.500L1.500 5.300" fill="none" stroke="#d4512f" stroke-width="2.300" stroke-linecap="round"/></svg>
<div class="t" style="top:220.58px;font-size:6.8px;line-height:8.16px;color:#1c1c1c;right:63.80px;transform-origin:100% 50%;transform:scaleX(0.945);">1</div>
<div style="left:489.64px;top:228.72px;width:9.17px;height:9.77px;background:#b6c8e8;"></div>
<div style="left:25.70px;top:228.42px;width:511.80px;height:0.60px;background:rgba(142,169,219,.32);"></div>
<div style="left:39.70px;top:228.72px;width:0.60px;height:9.72px;background:rgba(200,210,230,.4);"></div>
<div style="left:55.40px;top:228.72px;width:0.60px;height:9.72px;background:rgba(200,210,230,.4);"></div>
<div style="left:97.20px;top:228.72px;width:0.60px;height:9.72px;background:rgba(200,210,230,.4);"></div>
<div style="left:125.10px;top:228.72px;width:0.60px;height:9.72px;background:rgba(200,210,230,.4);"></div>
<div style="left:247.20px;top:228.72px;width:0.60px;height:9.72px;background:rgba(200,210,230,.4);"></div>
<div style="left:292.20px;top:228.72px;width:0.60px;height:9.72px;background:rgba(200,210,230,.4);"></div>
<div style="left:308.40px;top:228.72px;width:0.60px;height:9.72px;background:rgba(200,210,230,.4);"></div>
<div style="left:350.20px;top:228.72px;width:0.60px;height:9.72px;background:rgba(200,210,230,.4);"></div>
<div style="left:380.20px;top:228.72px;width:0.60px;height:9.72px;background:rgba(200,210,230,.4);"></div>
<div style="left:416.00px;top:228.72px;width:0.60px;height:9.72px;background:rgba(200,210,230,.4);"></div>
<div style="left:425.17px;top:228.72px;width:0.60px;height:9.72px;background:rgba(200,210,230,.4);"></div>
<div style="left:434.33px;top:228.72px;width:0.60px;height:9.72px;background:rgba(200,210,230,.4);"></div>
<div style="left:443.50px;top:228.72px;width:0.60px;height:9.72px;background:rgba(200,210,230,.4);"></div>
<div style="left:452.67px;top:228.72px;width:0.60px;height:9.72px;background:rgba(200,210,230,.4);"></div>
<div style="left:461.83px;top:228.72px;width:0.60px;height:9.72px;background:rgba(200,210,230,.4);"></div>
<div style="left:471.00px;top:228.72px;width:0.60px;height:9.72px;background:rgba(200,210,230,.4);"></div>
<div style="left:480.17px;top:228.72px;width:0.60px;height:9.72px;background:rgba(200,210,230,.4);"></div>
<div style="left:507.67px;top:228.72px;width:0.60px;height:9.72px;background:rgba(200,210,230,.4);"></div>
<div style="left:516.84px;top:228.72px;width:0.60px;height:9.72px;background:rgba(200,210,230,.4);"></div>
<div style="left:526.00px;top:228.72px;width:0.60px;height:9.72px;background:rgba(200,210,230,.4);"></div>
<div style="left:537.20px;top:228.72px;width:0.60px;height:9.72px;background:rgba(200,210,230,.4);"></div>
<div style="left:248.6px;top:229.42px;width:8.20px;height:8.32px;background:linear-gradient(90deg,#f7585c,#fbc0c2);border:.5px solid rgba(247,88,92,.35);border-left-color:#f7585c;"></div>
<div style="left:309.8px;top:229.42px;width:7.34px;height:8.32px;background:linear-gradient(90deg,#ffb62a,#ffebc4);border:.5px solid rgba(255,182,42,.3);border-left-color:#ffb62a;"></div>
<div class="t" style="top:230.30px;font-size:6.8px;line-height:8.16px;color:#1c1c1c;left:-117.30px;width:300px;text-align:center;transform-origin:50% 50%;transform:scaleX(0.945);">103</div>
<div class="t" style="top:230.30px;font-size:6.8px;line-height:8.16px;color:#1c1c1c;right:545.80px;transform-origin:100% 50%;transform:scaleX(0.945);">1</div>
<div class="t" style="top:230.30px;font-size:6.8px;line-height:8.16px;color:#1c1c1c;left:-73.10px;width:300px;text-align:center;transform-origin:50% 50%;transform:scaleX(0.945);">septiembre</div>
<div class="t" style="top:230.30px;font-size:6.8px;line-height:8.16px;color:#1c1c1c;left:-38.55px;width:300px;text-align:center;transform-origin:50% 50%;transform:scaleX(0.945);">2017</div>
<div class="t" style="top:230.30px;font-size:6.8px;line-height:8.16px;color:#1c1c1c;left:126.80px;transform-origin:0 50%;transform:scaleX(0.985);">Marina Medina Quintero</div>
<div class="t" style="top:230.30px;font-size:6.8px;line-height:8.16px;color:#111;font-weight:bold;left:250.60px;transform-origin:0 50%;transform:scaleX(0.945);">$</div>
<div class="t" style="top:230.30px;font-size:6.8px;line-height:8.16px;color:#111;font-weight:bold;right:310.40px;transform-origin:100% 50%;transform:scaleX(0.945);">2,000.00</div>
<div class="t" style="top:230.30px;font-size:6.8px;line-height:8.16px;color:#1c1c1c;left:150.60px;width:300px;text-align:center;transform-origin:50% 50%;transform:scaleX(0.945);">10%</div>
<div class="t" style="top:230.30px;font-size:6.8px;line-height:8.16px;color:#111;font-weight:bold;left:311.80px;transform-origin:0 50%;transform:scaleX(0.945);">$</div>
<div class="t" style="top:230.30px;font-size:6.8px;line-height:8.16px;color:#111;font-weight:bold;right:253.00px;transform-origin:100% 50%;transform:scaleX(0.945);">200.00</div>
<div class="t" style="top:230.30px;font-size:6.8px;line-height:8.16px;color:#1c1c1c;left:352.20px;transform-origin:0 50%;transform:scaleX(0.945);">Activo</div>
<div class="t" style="top:230.30px;font-size:6.8px;line-height:8.16px;color:#1c1c1c;left:248.60px;width:300px;text-align:center;transform-origin:50% 50%;transform:scaleX(0.945);">1</div>
<svg style="left:380.9px;top:228.92px" width="2.4" height="2.4" viewBox="0 0 2 2"><path d="M0 0h2L0 2z" fill="#1f7a3a"/></svg>
<div style="left:417.58px;top:232px;width:6.6px;height:3px;border-radius:1px;background:#efc46c;border:.6px solid #d8a646;"></div>
<div style="left:426.75px;top:232px;width:6.6px;height:3px;border-radius:1px;background:#efc46c;border:.6px solid #d8a646;"></div>
<div style="left:435.92px;top:232px;width:6.6px;height:3px;border-radius:1px;background:#efc46c;border:.6px solid #d8a646;"></div>
<div style="left:445.08px;top:232px;width:6.6px;height:3px;border-radius:1px;background:#efc46c;border:.6px solid #d8a646;"></div>
<div style="left:454.25px;top:232px;width:6.6px;height:3px;border-radius:1px;background:#efc46c;border:.6px solid #d8a646;"></div>
<div style="left:463.42px;top:232px;width:6.6px;height:3px;border-radius:1px;background:#efc46c;border:.6px solid #d8a646;"></div>
<div style="left:472.59px;top:232px;width:6.6px;height:3px;border-radius:1px;background:#efc46c;border:.6px solid #d8a646;"></div>
<div style="left:481.75px;top:232px;width:6.6px;height:3px;border-radius:1px;background:#efc46c;border:.6px solid #d8a646;"></div>
<div style="left:490.92px;top:232px;width:6.6px;height:3px;border-radius:1px;background:#efc46c;border:.6px solid #d8a646;"></div>
<div class="t" style="top:230.30px;font-size:6.8px;line-height:8.16px;color:#1c1c1c;right:63.80px;transform-origin:100% 50%;transform:scaleX(0.945);">0</div>
<div style="left:25.70px;top:238.44px;width:511.80px;height:9.77px;background:#d9e1f2;"></div>
<div style="left:489.64px;top:238.44px;width:9.17px;height:9.77px;background:#a9bde3;"></div>
<div style="left:25.70px;top:238.14px;width:511.80px;height:0.60px;background:rgba(142,169,219,.32);"></div>
<div style="left:39.70px;top:238.44px;width:0.60px;height:9.72px;background:rgba(255,255,255,.4);"></div>
<div style="left:55.40px;top:238.44px;width:0.60px;height:9.72px;background:rgba(255,255,255,.4);"></div>
<div style="left:97.20px;top:238.44px;width:0.60px;height:9.72px;background:rgba(255,255,255,.4);"></div>
<div style="left:125.10px;top:238.44px;width:0.60px;height:9.72px;background:rgba(255,255,255,.4);"></div>
<div style="left:247.20px;top:238.44px;width:0.60px;height:9.72px;background:rgba(255,255,255,.4);"></div>
<div style="left:292.20px;top:238.44px;width:0.60px;height:9.72px;background:rgba(255,255,255,.4);"></div>
<div style="left:308.40px;top:238.44px;width:0.60px;height:9.72px;background:rgba(255,255,255,.4);"></div>
<div style="left:350.20px;top:238.44px;width:0.60px;height:9.72px;background:rgba(255,255,255,.4);"></div>
<div style="left:380.20px;top:238.44px;width:0.60px;height:9.72px;background:rgba(255,255,255,.4);"></div>
<div style="left:416.00px;top:238.44px;width:0.60px;height:9.72px;background:rgba(255,255,255,.4);"></div>
<div style="left:425.17px;top:238.44px;width:0.60px;height:9.72px;background:rgba(255,255,255,.4);"></div>
<div style="left:434.33px;top:238.44px;width:0.60px;height:9.72px;background:rgba(255,255,255,.4);"></div>
<div style="left:443.50px;top:238.44px;width:0.60px;height:9.72px;background:rgba(255,255,255,.4);"></div>
<div style="left:452.67px;top:238.44px;width:0.60px;height:9.72px;background:rgba(255,255,255,.4);"></div>
<div style="left:461.83px;top:238.44px;width:0.60px;height:9.72px;background:rgba(255,255,255,.4);"></div>
<div style="left:471.00px;top:238.44px;width:0.60px;height:9.72px;background:rgba(255,255,255,.4);"></div>
<div style="left:480.17px;top:238.44px;width:0.60px;height:9.72px;background:rgba(255,255,255,.4);"></div>
<div style="left:507.67px;top:238.44px;width:0.60px;height:9.72px;background:rgba(255,255,255,.4);"></div>
<div style="left:516.84px;top:238.44px;width:0.60px;height:9.72px;background:rgba(255,255,255,.4);"></div>
<div style="left:526.00px;top:238.44px;width:0.60px;height:9.72px;background:rgba(255,255,255,.4);"></div>
<div style="left:537.20px;top:238.44px;width:0.60px;height:9.72px;background:rgba(255,255,255,.4);"></div>
<div style="left:248.6px;top:239.14px;width:8.20px;height:8.32px;background:linear-gradient(90deg,#f7585c,#fbc0c2);border:.5px solid rgba(247,88,92,.35);border-left-color:#f7585c;"></div>
<div style="left:309.8px;top:239.14px;width:11.01px;height:8.32px;background:linear-gradient(90deg,#ffb62a,#ffebc4);border:.5px solid rgba(255,182,42,.3);border-left-color:#ffb62a;"></div>
<div class="t" style="top:240.02px;font-size:6.8px;line-height:8.16px;color:#1c1c1c;left:-117.30px;width:300px;text-align:center;transform-origin:50% 50%;transform:scaleX(0.945);">84</div>
<div class="t" style="top:240.02px;font-size:6.8px;line-height:8.16px;color:#1c1c1c;right:545.80px;transform-origin:100% 50%;transform:scaleX(0.945);">1</div>
<div class="t" style="top:240.02px;font-size:6.8px;line-height:8.16px;color:#1c1c1c;left:-73.10px;width:300px;text-align:center;transform-origin:50% 50%;transform:scaleX(0.945);">agosto</div>
<div class="t" style="top:240.02px;font-size:6.8px;line-height:8.16px;color:#1c1c1c;left:-38.55px;width:300px;text-align:center;transform-origin:50% 50%;transform:scaleX(0.945);">2017</div>
<div class="t" style="top:240.02px;font-size:6.8px;line-height:8.16px;color:#1c1c1c;left:126.80px;transform-origin:0 50%;transform:scaleX(0.985);">Yessenia Rodriguez Constantino</div>
<div class="t" style="top:240.02px;font-size:6.8px;line-height:8.16px;color:#111;font-weight:bold;left:250.60px;transform-origin:0 50%;transform:scaleX(0.945);">$</div>
<div class="t" style="top:240.02px;font-size:6.8px;line-height:8.16px;color:#111;font-weight:bold;right:310.40px;transform-origin:100% 50%;transform:scaleX(0.945);">2,000.00</div>
<div class="t" style="top:240.02px;font-size:6.8px;line-height:8.16px;color:#1c1c1c;left:150.60px;width:300px;text-align:center;transform-origin:50% 50%;transform:scaleX(0.945);">15%</div>
<div class="t" style="top:240.02px;font-size:6.8px;line-height:8.16px;color:#111;font-weight:bold;left:311.80px;transform-origin:0 50%;transform:scaleX(0.945);">$</div>
<div class="t" style="top:240.02px;font-size:6.8px;line-height:8.16px;color:#111;font-weight:bold;right:253.00px;transform-origin:100% 50%;transform:scaleX(0.945);">300.00</div>
<div class="t" style="top:240.02px;font-size:6.8px;line-height:8.16px;color:#1c1c1c;left:352.20px;transform-origin:0 50%;transform:scaleX(0.945);">Activo</div>
<div class="t" style="top:240.02px;font-size:6.8px;line-height:8.16px;color:#1c1c1c;left:248.60px;width:300px;text-align:center;transform-origin:50% 50%;transform:scaleX(0.945);">3</div>
<svg style="left:380.9px;top:238.64px" width="2.4" height="2.4" viewBox="0 0 2 2"><path d="M0 0h2L0 2z" fill="#1f7a3a"/></svg>
<div style="left:417.58px;top:242px;width:6.6px;height:3px;border-radius:1px;background:#efc46c;border:.6px solid #d8a646;"></div>
<div style="left:426.75px;top:242px;width:6.6px;height:3px;border-radius:1px;background:#efc46c;border:.6px solid #d8a646;"></div>
<div style="left:435.92px;top:242px;width:6.6px;height:3px;border-radius:1px;background:#efc46c;border:.6px solid #d8a646;"></div>
<div style="left:445.08px;top:242px;width:6.6px;height:3px;border-radius:1px;background:#efc46c;border:.6px solid #d8a646;"></div>
<div style="left:454.25px;top:242px;width:6.6px;height:3px;border-radius:1px;background:#efc46c;border:.6px solid #d8a646;"></div>
<div style="left:463.42px;top:242px;width:6.6px;height:3px;border-radius:1px;background:#efc46c;border:.6px solid #d8a646;"></div>
<div style="left:472.59px;top:242px;width:6.6px;height:3px;border-radius:1px;background:#efc46c;border:.6px solid #d8a646;"></div>
<div style="left:481.75px;top:242px;width:6.6px;height:3px;border-radius:1px;background:#efc46c;border:.6px solid #d8a646;"></div>
<svg style="left:490.62px;top:239.90px" width="7.2" height="6.8" viewBox="0 0 7.2 6.8"><path d="M1 3.700l1.700 1.900C3.700 3.700 5 2.100 6.300 1" fill="none" stroke="#5b9a7f" stroke-width="2" stroke-linecap="round" stroke-linejoin="round"/></svg>
<div class="t" style="top:240.02px;font-size:6.8px;line-height:8.16px;color:#1c1c1c;right:63.80px;transform-origin:100% 50%;transform:scaleX(0.945);">0</div>
<div style="left:489.64px;top:248.16px;width:9.17px;height:9.77px;background:#b6c8e8;"></div>
<div style="left:25.70px;top:247.86px;width:511.80px;height:0.60px;background:rgba(142,169,219,.32);"></div>
<div style="left:39.70px;top:248.16px;width:0.60px;height:9.72px;background:rgba(200,210,230,.4);"></div>
<div style="left:55.40px;top:248.16px;width:0.60px;height:9.72px;background:rgba(200,210,230,.4);"></div>
<div style="left:97.20px;top:248.16px;width:0.60px;height:9.72px;background:rgba(200,210,230,.4);"></div>
<div style="left:125.10px;top:248.16px;width:0.60px;height:9.72px;background:rgba(200,210,230,.4);"></div>
<div style="left:247.20px;top:248.16px;width:0.60px;height:9.72px;background:rgba(200,210,230,.4);"></div>
<div style="left:292.20px;top:248.16px;width:0.60px;height:9.72px;background:rgba(200,210,230,.4);"></div>
<div style="left:308.40px;top:248.16px;width:0.60px;height:9.72px;background:rgba(200,210,230,.4);"></div>
<div style="left:350.20px;top:248.16px;width:0.60px;height:9.72px;background:rgba(200,210,230,.4);"></div>
<div style="left:380.20px;top:248.16px;width:0.60px;height:9.72px;background:rgba(200,210,230,.4);"></div>
<div style="left:416.00px;top:248.16px;width:0.60px;height:9.72px;background:rgba(200,210,230,.4);"></div>
<div style="left:425.17px;top:248.16px;width:0.60px;height:9.72px;background:rgba(200,210,230,.4);"></div>
<div style="left:434.33px;top:248.16px;width:0.60px;height:9.72px;background:rgba(200,210,230,.4);"></div>
<div style="left:443.50px;top:248.16px;width:0.60px;height:9.72px;background:rgba(200,210,230,.4);"></div>
<div style="left:452.67px;top:248.16px;width:0.60px;height:9.72px;background:rgba(200,210,230,.4);"></div>
<div style="left:461.83px;top:248.16px;width:0.60px;height:9.72px;background:rgba(200,210,230,.4);"></div>
<div style="left:471.00px;top:248.16px;width:0.60px;height:9.72px;background:rgba(200,210,230,.4);"></div>
<div style="left:480.17px;top:248.16px;width:0.60px;height:9.72px;background:rgba(200,210,230,.4);"></div>
<div style="left:507.67px;top:248.16px;width:0.60px;height:9.72px;background:rgba(200,210,230,.4);"></div>
<div style="left:516.84px;top:248.16px;width:0.60px;height:9.72px;background:rgba(200,210,230,.4);"></div>
<div style="left:526.00px;top:248.16px;width:0.60px;height:9.72px;background:rgba(200,210,230,.4);"></div>
<div style="left:537.20px;top:248.16px;width:0.60px;height:9.72px;background:rgba(200,210,230,.4);"></div>
<div style="left:248.6px;top:248.86px;width:18.45px;height:8.32px;background:linear-gradient(90deg,#f7585c,#fbc0c2);border:.5px solid rgba(247,88,92,.35);border-left-color:#f7585c;"></div>
<div style="left:309.8px;top:248.86px;width:16.52px;height:8.32px;background:linear-gradient(90deg,#ffb62a,#ffebc4);border:.5px solid rgba(255,182,42,.3);border-left-color:#ffb62a;"></div>
<div class="t" style="top:249.74px;font-size:6.8px;line-height:8.16px;color:#1c1c1c;left:-117.30px;width:300px;text-align:center;transform-origin:50% 50%;transform:scaleX(0.945);">3</div>
<div class="t" style="top:249.74px;font-size:6.8px;line-height:8.16px;color:#1c1c1c;right:545.80px;transform-origin:100% 50%;transform:scaleX(0.945);">2</div>
<div class="t" style="top:249.74px;font-size:6.8px;line-height:8.16px;color:#1c1c1c;left:-73.10px;width:300px;text-align:center;transform-origin:50% 50%;transform:scaleX(0.945);">marzo</div>
<div class="t" style="top:249.74px;font-size:6.8px;line-height:8.16px;color:#1c1c1c;left:-38.55px;width:300px;text-align:center;transform-origin:50% 50%;transform:scaleX(0.945);">2016</div>
<div class="t" style="top:249.74px;font-size:6.8px;line-height:8.16px;color:#1c1c1c;left:126.80px;transform-origin:0 50%;transform:scaleX(0.985);">Adan Serrano Romero</div>
<div class="t" style="top:249.74px;font-size:6.8px;line-height:8.16px;color:#111;font-weight:bold;left:250.60px;transform-origin:0 50%;transform:scaleX(0.945);">$</div>
<div class="t" style="top:249.74px;font-size:6.8px;line-height:8.16px;color:#111;font-weight:bold;right:310.40px;transform-origin:100% 50%;transform:scaleX(0.945);">4,500.00</div>
<div class="t" style="top:249.74px;font-size:6.8px;line-height:8.16px;color:#1c1c1c;left:150.60px;width:300px;text-align:center;transform-origin:50% 50%;transform:scaleX(0.945);">10%</div>
<div class="t" style="top:249.74px;font-size:6.8px;line-height:8.16px;color:#111;font-weight:bold;left:311.80px;transform-origin:0 50%;transform:scaleX(0.945);">$</div>
<div class="t" style="top:249.74px;font-size:6.8px;line-height:8.16px;color:#111;font-weight:bold;right:253.00px;transform-origin:100% 50%;transform:scaleX(0.945);">450.00</div>
<div class="t" style="top:249.74px;font-size:6.8px;line-height:8.16px;color:#1c1c1c;left:352.20px;transform-origin:0 50%;transform:scaleX(0.945);">Activo</div>
<div class="t" style="top:249.74px;font-size:6.8px;line-height:8.16px;color:#1c1c1c;left:248.60px;width:300px;text-align:center;transform-origin:50% 50%;transform:scaleX(0.945);">1</div>
<svg style="left:380.9px;top:248.36px" width="2.4" height="2.4" viewBox="0 0 2 2"><path d="M0 0h2L0 2z" fill="#1f7a3a"/></svg>
<div style="left:417.58px;top:252px;width:6.6px;height:3px;border-radius:1px;background:#efc46c;border:.6px solid #d8a646;"></div>
<div style="left:426.75px;top:252px;width:6.6px;height:3px;border-radius:1px;background:#efc46c;border:.6px solid #d8a646;"></div>
<div style="left:435.92px;top:252px;width:6.6px;height:3px;border-radius:1px;background:#efc46c;border:.6px solid #d8a646;"></div>
<svg style="left:444.98px;top:249.62px" width="6.8" height="6.8" viewBox="0 0 6.8 6.8"><path d="M1.500 1.500l3.800 3.800M5.300 1.500L1.500 5.300" fill="none" stroke="#d4512f" stroke-width="2.300" stroke-linecap="round"/></svg>
<svg style="left:454.15px;top:249.62px" width="6.8" height="6.8" viewBox="0 0 6.8 6.8"><path d="M1.500 1.500l3.800 3.800M5.300 1.500L1.500 5.300" fill="none" stroke="#d4512f" stroke-width="2.300" stroke-linecap="round"/></svg>
<svg style="left:463.32px;top:249.62px" width="6.8" height="6.8" viewBox="0 0 6.8 6.8"><path d="M1.500 1.500l3.800 3.800M5.300 1.500L1.500 5.300" fill="none" stroke="#d4512f" stroke-width="2.300" stroke-linecap="round"/></svg>
<svg style="left:472.49px;top:249.62px" width="6.8" height="6.8" viewBox="0 0 6.8 6.8"><path d="M1.500 1.500l3.800 3.800M5.300 1.500L1.500 5.300" fill="none" stroke="#d4512f" stroke-width="2.300" stroke-linecap="round"/></svg>
<svg style="left:481.65px;top:249.62px" width="6.8" height="6.8" viewBox="0 0 6.8 6.8"><path d="M1.500 1.500l3.800 3.800M5.300 1.500L1.500 5.300" fill="none" stroke="#d4512f" stroke-width="2.300" stroke-linecap="round"/></svg>
<svg style="left:490.82px;top:249.62px" width="6.8" height="6.8" viewBox="0 0 6.8 6.8"><path d="M1.500 1.500l3.800 3.800M5.300 1.500L1.500 5.300" fill="none" stroke="#d4512f" stroke-width="2.300" stroke-linecap="round"/></svg>
<div class="t" style="top:249.74px;font-size:6.8px;line-height:8.16px;color:#1c1c1c;right:63.80px;transform-origin:100% 50%;transform:scaleX(0.945);">6</div>
<div style="left:25.70px;top:257.88px;width:511.80px;height:9.77px;background:#d9e1f2;"></div>
<div style="left:489.64px;top:257.88px;width:9.17px;height:9.77px;background:#a9bde3;"></div>
<div style="left:25.70px;top:257.58px;width:511.80px;height:0.60px;background:rgba(142,169,219,.32);"></div>
<div style="left:39.70px;top:257.88px;width:0.60px;height:9.72px;background:rgba(255,255,255,.4);"></div>
<div style="left:55.40px;top:257.88px;width:0.60px;height:9.72px;background:rgba(255,255,255,.4);"></div>
<div style="left:97.20px;top:257.88px;width:0.60px;height:9.72px;background:rgba(255,255,255,.4);"></div>
<div style="left:125.10px;top:257.88px;width:0.60px;height:9.72px;background:rgba(255,255,255,.4);"></div>
<div style="left:247.20px;top:257.88px;width:0.60px;height:9.72px;background:rgba(255,255,255,.4);"></div>
<div style="left:292.20px;top:257.88px;width:0.60px;height:9.72px;background:rgba(255,255,255,.4);"></div>
<div style="left:308.40px;top:257.88px;width:0.60px;height:9.72px;background:rgba(255,255,255,.4);"></div>
<div style="left:350.20px;top:257.88px;width:0.60px;height:9.72px;background:rgba(255,255,255,.4);"></div>
<div style="left:380.20px;top:257.88px;width:0.60px;height:9.72px;background:rgba(255,255,255,.4);"></div>
<div style="left:416.00px;top:257.88px;width:0.60px;height:9.72px;background:rgba(255,255,255,.4);"></div>
<div style="left:425.17px;top:257.88px;width:0.60px;height:9.72px;background:rgba(255,255,255,.4);"></div>
<div style="left:434.33px;top:257.88px;width:0.60px;height:9.72px;background:rgba(255,255,255,.4);"></div>
<div style="left:443.50px;top:257.88px;width:0.60px;height:9.72px;background:rgba(255,255,255,.4);"></div>
<div style="left:452.67px;top:257.88px;width:0.60px;height:9.72px;background:rgba(255,255,255,.4);"></div>
<div style="left:461.83px;top:257.88px;width:0.60px;height:9.72px;background:rgba(255,255,255,.4);"></div>
<div style="left:471.00px;top:257.88px;width:0.60px;height:9.72px;background:rgba(255,255,255,.4);"></div>
<div style="left:480.17px;top:257.88px;width:0.60px;height:9.72px;background:rgba(255,255,255,.4);"></div>
<div style="left:507.67px;top:257.88px;width:0.60px;height:9.72px;background:rgba(255,255,255,.4);"></div>
<div style="left:516.84px;top:257.88px;width:0.60px;height:9.72px;background:rgba(255,255,255,.4);"></div>
<div style="left:526.00px;top:257.88px;width:0.60px;height:9.72px;background:rgba(255,255,255,.4);"></div>
<div style="left:537.20px;top:257.88px;width:0.60px;height:9.72px;background:rgba(255,255,255,.4);"></div>
<div style="left:248.6px;top:258.58px;width:8.20px;height:8.32px;background:linear-gradient(90deg,#f7585c,#fbc0c2);border:.5px solid rgba(247,88,92,.35);border-left-color:#f7585c;"></div>
<div style="left:309.8px;top:258.58px;width:7.34px;height:8.32px;background:linear-gradient(90deg,#ffb62a,#ffebc4);border:.5px solid rgba(255,182,42,.3);border-left-color:#ffb62a;"></div>
<div class="t" style="top:259.46px;font-size:6.8px;line-height:8.16px;color:#1c1c1c;left:-117.30px;width:300px;text-align:center;transform-origin:50% 50%;transform:scaleX(0.945);">4</div>
<div class="t" style="top:259.46px;font-size:6.8px;line-height:8.16px;color:#1c1c1c;right:545.80px;transform-origin:100% 50%;transform:scaleX(0.945);">2</div>
<div class="t" style="top:259.46px;font-size:6.8px;line-height:8.16px;color:#1c1c1c;left:-73.10px;width:300px;text-align:center;transform-origin:50% 50%;transform:scaleX(0.945);">octubre</div>
<div class="t" style="top:259.46px;font-size:6.8px;line-height:8.16px;color:#1c1c1c;left:-38.55px;width:300px;text-align:center;transform-origin:50% 50%;transform:scaleX(0.945);">2015</div>
<div class="t" style="top:259.46px;font-size:6.8px;line-height:8.16px;color:#1c1c1c;left:126.80px;transform-origin:0 50%;transform:scaleX(0.985);">Hector Diaz Morales</div>
<div class="t" style="top:259.46px;font-size:6.8px;line-height:8.16px;color:#111;font-weight:bold;left:250.60px;transform-origin:0 50%;transform:scaleX(0.945);">$</div>
<div class="t" style="top:259.46px;font-size:6.8px;line-height:8.16px;color:#111;font-weight:bold;right:310.40px;transform-origin:100% 50%;transform:scaleX(0.945);">2,000.00</div>
<div class="t" style="top:259.46px;font-size:6.8px;line-height:8.16px;color:#1c1c1c;left:150.60px;width:300px;text-align:center;transform-origin:50% 50%;transform:scaleX(0.945);">10%</div>
<div class="t" style="top:259.46px;font-size:6.8px;line-height:8.16px;color:#111;font-weight:bold;left:311.80px;transform-origin:0 50%;transform:scaleX(0.945);">$</div>
<div class="t" style="top:259.46px;font-size:6.8px;line-height:8.16px;color:#111;font-weight:bold;right:253.00px;transform-origin:100% 50%;transform:scaleX(0.945);">200.00</div>
<div class="t" style="top:259.46px;font-size:6.8px;line-height:8.16px;color:#1c1c1c;left:352.20px;transform-origin:0 50%;transform:scaleX(0.945);">Activo</div>
<div class="t" style="top:259.46px;font-size:6.8px;line-height:8.16px;color:#1c1c1c;left:248.60px;width:300px;text-align:center;transform-origin:50% 50%;transform:scaleX(0.945);">1</div>
<svg style="left:380.9px;top:258.08px" width="2.4" height="2.4" viewBox="0 0 2 2"><path d="M0 0h2L0 2z" fill="#1f7a3a"/></svg>
<svg style="left:417.28px;top:259.34px" width="7.2" height="6.8" viewBox="0 0 7.2 6.8"><path d="M1 3.700l1.700 1.900C3.700 3.700 5 2.100 6.300 1" fill="none" stroke="#5b9a7f" stroke-width="2" stroke-linecap="round" stroke-linejoin="round"/></svg>
<svg style="left:426.45px;top:259.34px" width="7.2" height="6.8" viewBox="0 0 7.2 6.8"><path d="M1 3.700l1.700 1.900C3.700 3.700 5 2.100 6.300 1" fill="none" stroke="#5b9a7f" stroke-width="2" stroke-linecap="round" stroke-linejoin="round"/></svg>
<svg style="left:435.62px;top:259.34px" width="7.2" height="6.8" viewBox="0 0 7.2 6.8"><path d="M1 3.700l1.700 1.900C3.700 3.700 5 2.100 6.300 1" fill="none" stroke="#5b9a7f" stroke-width="2" stroke-linecap="round" stroke-linejoin="round"/></svg>
<svg style="left:444.78px;top:259.34px" width="7.2" height="6.8" viewBox="0 0 7.2 6.8"><path d="M1 3.700l1.700 1.900C3.700 3.700 5 2.100 6.300 1" fill="none" stroke="#5b9a7f" stroke-width="2" stroke-linecap="round" stroke-linejoin="round"/></svg>
<svg style="left:453.95px;top:259.34px" width="7.2" height="6.8" viewBox="0 0 7.2 6.8"><path d="M1 3.700l1.700 1.900C3.700 3.700 5 2.100 6.300 1" fill="none" stroke="#5b9a7f" stroke-width="2" stroke-linecap="round" stroke-linejoin="round"/></svg>
<svg style="left:463.12px;top:259.34px" width="7.2" height="6.8" viewBox="0 0 7.2 6.8"><path d="M1 3.700l1.700 1.900C3.700 3.700 5 2.100 6.300 1" fill="none" stroke="#5b9a7f" stroke-width="2" stroke-linecap="round" stroke-linejoin="round"/></svg>
<svg style="left:472.29px;top:259.34px" width="7.2" height="6.8" viewBox="0 0 7.2 6.8"><path d="M1 3.700l1.700 1.900C3.700 3.700 5 2.100 6.300 1" fill="none" stroke="#5b9a7f" stroke-width="2" stroke-linecap="round" stroke-linejoin="round"/></svg>
<svg style="left:481.45px;top:259.34px" width="7.2" height="6.8" viewBox="0 0 7.2 6.8"><path d="M1 3.700l1.700 1.900C3.700 3.700 5 2.100 6.300 1" fill="none" stroke="#5b9a7f" stroke-width="2" stroke-linecap="round" stroke-linejoin="round"/></svg>
<svg style="left:490.62px;top:259.34px" width="7.2" height="6.8" viewBox="0 0 7.2 6.8"><path d="M1 3.700l1.700 1.900C3.700 3.700 5 2.100 6.300 1" fill="none" stroke="#5b9a7f" stroke-width="2" stroke-linecap="round" stroke-linejoin="round"/></svg>
<div class="t" style="top:259.46px;font-size:6.8px;line-height:8.16px;color:#1c1c1c;right:63.80px;transform-origin:100% 50%;transform:scaleX(0.945);">0</div>
<div style="left:489.64px;top:267.60px;width:9.17px;height:9.77px;background:#b6c8e8;"></div>
<div style="left:25.70px;top:267.30px;width:511.80px;height:0.60px;background:rgba(142,169,219,.32);"></div>
<div style="left:39.70px;top:267.60px;width:0.60px;height:9.72px;background:rgba(200,210,230,.4);"></div>
<div style="left:55.40px;top:267.60px;width:0.60px;height:9.72px;background:rgba(200,210,230,.4);"></div>
<div style="left:97.20px;top:267.60px;width:0.60px;height:9.72px;background:rgba(200,210,230,.4);"></div>
<div style="left:125.10px;top:267.60px;width:0.60px;height:9.72px;background:rgba(200,210,230,.4);"></div>
<div style="left:247.20px;top:267.60px;width:0.60px;height:9.72px;background:rgba(200,210,230,.4);"></div>
<div style="left:292.20px;top:267.60px;width:0.60px;height:9.72px;background:rgba(200,210,230,.4);"></div>
<div style="left:308.40px;top:267.60px;width:0.60px;height:9.72px;background:rgba(200,210,230,.4);"></div>
<div style="left:350.20px;top:267.60px;width:0.60px;height:9.72px;background:rgba(200,210,230,.4);"></div>
<div style="left:380.20px;top:267.60px;width:0.60px;height:9.72px;background:rgba(200,210,230,.4);"></div>
<div style="left:416.00px;top:267.60px;width:0.60px;height:9.72px;background:rgba(200,210,230,.4);"></div>
<div style="left:425.17px;top:267.60px;width:0.60px;height:9.72px;background:rgba(200,210,230,.4);"></div>
<div style="left:434.33px;top:267.60px;width:0.60px;height:9.72px;background:rgba(200,210,230,.4);"></div>
<div style="left:443.50px;top:267.60px;width:0.60px;height:9.72px;background:rgba(200,210,230,.4);"></div>
<div style="left:452.67px;top:267.60px;width:0.60px;height:9.72px;background:rgba(200,210,230,.4);"></div>
<div style="left:461.83px;top:267.60px;width:0.60px;height:9.72px;background:rgba(200,210,230,.4);"></div>
<div style="left:471.00px;top:267.60px;width:0.60px;height:9.72px;background:rgba(200,210,230,.4);"></div>
<div style="left:480.17px;top:267.60px;width:0.60px;height:9.72px;background:rgba(200,210,230,.4);"></div>
<div style="left:507.67px;top:267.60px;width:0.60px;height:9.72px;background:rgba(200,210,230,.4);"></div>
<div style="left:516.84px;top:267.60px;width:0.60px;height:9.72px;background:rgba(200,210,230,.4);"></div>
<div style="left:526.00px;top:267.60px;width:0.60px;height:9.72px;background:rgba(200,210,230,.4);"></div>
<div style="left:537.20px;top:267.60px;width:0.60px;height:9.72px;background:rgba(200,210,230,.4);"></div>
<div style="left:248.6px;top:268.30px;width:2.05px;height:8.32px;background:linear-gradient(90deg,#f7585c,#fbc0c2);border:.5px solid rgba(247,88,92,.35);border-left-color:#f7585c;"></div>
<div style="left:309.8px;top:268.30px;width:3.67px;height:8.32px;background:linear-gradient(90deg,#ffb62a,#ffebc4);border:.5px solid rgba(255,182,42,.3);border-left-color:#ffb62a;"></div>
<div class="t" style="top:269.18px;font-size:6.8px;line-height:8.16px;color:#1c1c1c;left:-117.30px;width:300px;text-align:center;transform-origin:50% 50%;transform:scaleX(0.945);">104</div>
<div class="t" style="top:269.18px;font-size:6.8px;line-height:8.16px;color:#1c1c1c;right:545.80px;transform-origin:100% 50%;transform:scaleX(0.945);">2</div>
<div class="t" style="top:269.18px;font-size:6.8px;line-height:8.16px;color:#1c1c1c;left:-73.10px;width:300px;text-align:center;transform-origin:50% 50%;transform:scaleX(0.945);">septiembre</div>
<div class="t" style="top:269.18px;font-size:6.8px;line-height:8.16px;color:#1c1c1c;left:-38.55px;width:300px;text-align:center;transform-origin:50% 50%;transform:scaleX(0.945);">2017</div>
<div class="t" style="top:269.18px;font-size:6.8px;line-height:8.16px;color:#1c1c1c;left:126.80px;transform-origin:0 50%;transform:scaleX(0.985);">Manuel Israel Miranda Morales</div>
<div class="t" style="top:269.18px;font-size:6.8px;line-height:8.16px;color:#111;font-weight:bold;left:250.60px;transform-origin:0 50%;transform:scaleX(0.945);">$</div>
<div class="t" style="top:269.18px;font-size:6.8px;line-height:8.16px;color:#111;font-weight:bold;right:310.40px;transform-origin:100% 50%;transform:scaleX(0.945);">500.00</div>
<div class="t" style="top:269.18px;font-size:6.8px;line-height:8.16px;color:#1c1c1c;left:150.60px;width:300px;text-align:center;transform-origin:50% 50%;transform:scaleX(0.945);">20%</div>
<div class="t" style="top:269.18px;font-size:6.8px;line-height:8.16px;color:#111;font-weight:bold;left:311.80px;transform-origin:0 50%;transform:scaleX(0.945);">$</div>
<div class="t" style="top:269.18px;font-size:6.8px;line-height:8.16px;color:#111;font-weight:bold;right:253.00px;transform-origin:100% 50%;transform:scaleX(0.945);">100.00</div>
<div class="t" style="top:269.18px;font-size:6.8px;line-height:8.16px;color:#1c1c1c;left:352.20px;transform-origin:0 50%;transform:scaleX(0.945);">Activo</div>
<div class="t" style="top:269.18px;font-size:6.8px;line-height:8.16px;color:#1c1c1c;left:248.60px;width:300px;text-align:center;transform-origin:50% 50%;transform:scaleX(0.945);">2</div>
<svg style="left:380.9px;top:267.80px" width="2.4" height="2.4" viewBox="0 0 2 2"><path d="M0 0h2L0 2z" fill="#1f7a3a"/></svg>
<div style="left:417.58px;top:271px;width:6.6px;height:3px;border-radius:1px;background:#efc46c;border:.6px solid #d8a646;"></div>
<div style="left:426.75px;top:271px;width:6.6px;height:3px;border-radius:1px;background:#efc46c;border:.6px solid #d8a646;"></div>
<div style="left:435.92px;top:271px;width:6.6px;height:3px;border-radius:1px;background:#efc46c;border:.6px solid #d8a646;"></div>
<div style="left:445.08px;top:271px;width:6.6px;height:3px;border-radius:1px;background:#efc46c;border:.6px solid #d8a646;"></div>
<div style="left:454.25px;top:271px;width:6.6px;height:3px;border-radius:1px;background:#efc46c;border:.6px solid #d8a646;"></div>
<div style="left:463.42px;top:271px;width:6.6px;height:3px;border-radius:1px;background:#efc46c;border:.6px solid #d8a646;"></div>
<div style="left:472.59px;top:271px;width:6.6px;height:3px;border-radius:1px;background:#efc46c;border:.6px solid #d8a646;"></div>
<div style="left:481.75px;top:271px;width:6.6px;height:3px;border-radius:1px;background:#efc46c;border:.6px solid #d8a646;"></div>
<div style="left:490.92px;top:271px;width:6.6px;height:3px;border-radius:1px;background:#efc46c;border:.6px solid #d8a646;"></div>
<div class="t" style="top:269.18px;font-size:6.8px;line-height:8.16px;color:#1c1c1c;right:63.80px;transform-origin:100% 50%;transform:scaleX(0.945);">0</div>
<div style="left:25.70px;top:277.32px;width:511.80px;height:9.77px;background:#d9e1f2;"></div>
<div style="left:489.64px;top:277.32px;width:9.17px;height:9.77px;background:#a9bde3;"></div>
<div style="left:25.70px;top:277.02px;width:511.80px;height:0.60px;background:rgba(142,169,219,.32);"></div>
<div style="left:39.70px;top:277.32px;width:0.60px;height:9.72px;background:rgba(255,255,255,.4);"></div>
<div style="left:55.40px;top:277.32px;width:0.60px;height:9.72px;background:rgba(255,255,255,.4);"></div>
<div style="left:97.20px;top:277.32px;width:0.60px;height:9.72px;background:rgba(255,255,255,.4);"></div>
<div style="left:125.10px;top:277.32px;width:0.60px;height:9.72px;background:rgba(255,255,255,.4);"></div>
<div style="left:247.20px;top:277.32px;width:0.60px;height:9.72px;background:rgba(255,255,255,.4);"></div>
<div style="left:292.20px;top:277.32px;width:0.60px;height:9.72px;background:rgba(255,255,255,.4);"></div>
<div style="left:308.40px;top:277.32px;width:0.60px;height:9.72px;background:rgba(255,255,255,.4);"></div>
<div style="left:350.20px;top:277.32px;width:0.60px;height:9.72px;background:rgba(255,255,255,.4);"></div>
<div style="left:380.20px;top:277.32px;width:0.60px;height:9.72px;background:rgba(255,255,255,.4);"></div>
<div style="left:416.00px;top:277.32px;width:0.60px;height:9.72px;background:rgba(255,255,255,.4);"></div>
<div style="left:425.17px;top:277.32px;width:0.60px;height:9.72px;background:rgba(255,255,255,.4);"></div>
<div style="left:434.33px;top:277.32px;width:0.60px;height:9.72px;background:rgba(255,255,255,.4);"></div>
<div style="left:443.50px;top:277.32px;width:0.60px;height:9.72px;background:rgba(255,255,255,.4);"></div>
<div style="left:452.67px;top:277.32px;width:0.60px;height:9.72px;background:rgba(255,255,255,.4);"></div>
<div style="left:461.83px;top:277.32px;width:0.60px;height:9.72px;background:rgba(255,255,255,.4);"></div>
<div style="left:471.00px;top:277.32px;width:0.60px;height:9.72px;background:rgba(255,255,255,.4);"></div>
<div style="left:480.17px;top:277.32px;width:0.60px;height:9.72px;background:rgba(255,255,255,.4);"></div>
<div style="left:507.67px;top:277.32px;width:0.60px;height:9.72px;background:rgba(255,255,255,.4);"></div>
<div style="left:516.84px;top:277.32px;width:0.60px;height:9.72px;background:rgba(255,255,255,.4);"></div>
<div style="left:526.00px;top:277.32px;width:0.60px;height:9.72px;background:rgba(255,255,255,.4);"></div>
<div style="left:537.20px;top:277.32px;width:0.60px;height:9.72px;background:rgba(255,255,255,.4);"></div>
<div style="left:248.6px;top:278.02px;width:2.05px;height:8.32px;background:linear-gradient(90deg,#f7585c,#fbc0c2);border:.5px solid rgba(247,88,92,.35);border-left-color:#f7585c;"></div>
<div style="left:309.8px;top:278.02px;width:3.67px;height:8.32px;background:linear-gradient(90deg,#ffb62a,#ffebc4);border:.5px solid rgba(255,182,42,.3);border-left-color:#ffb62a;"></div>
<div class="t" style="top:278.90px;font-size:6.8px;line-height:8.16px;color:#1c1c1c;left:-117.30px;width:300px;text-align:center;transform-origin:50% 50%;transform:scaleX(0.945);">5</div>
<div class="t" style="top:278.90px;font-size:6.8px;line-height:8.16px;color:#1c1c1c;right:545.80px;transform-origin:100% 50%;transform:scaleX(0.945);">3</div>
<div class="t" style="top:278.90px;font-size:6.8px;line-height:8.16px;color:#1c1c1c;left:-73.10px;width:300px;text-align:center;transform-origin:50% 50%;transform:scaleX(0.945);">julio</div>
<div class="t" style="top:278.90px;font-size:6.8px;line-height:8.16px;color:#1c1c1c;left:-38.55px;width:300px;text-align:center;transform-origin:50% 50%;transform:scaleX(0.945);">2017</div>
<div class="t" style="top:278.90px;font-size:6.8px;line-height:8.16px;color:#1c1c1c;left:126.80px;transform-origin:0 50%;transform:scaleX(0.985);">Daniel Octavio Arevalo Govea</div>
<div class="t" style="top:278.90px;font-size:6.8px;line-height:8.16px;color:#111;font-weight:bold;left:250.60px;transform-origin:0 50%;transform:scaleX(0.945);">$</div>
<div class="t" style="top:278.90px;font-size:6.8px;line-height:8.16px;color:#111;font-weight:bold;right:310.40px;transform-origin:100% 50%;transform:scaleX(0.945);">500.00</div>
<div class="t" style="top:278.90px;font-size:6.8px;line-height:8.16px;color:#1c1c1c;left:150.60px;width:300px;text-align:center;transform-origin:50% 50%;transform:scaleX(0.945);">20%</div>
<div class="t" style="top:278.90px;font-size:6.8px;line-height:8.16px;color:#111;font-weight:bold;left:311.80px;transform-origin:0 50%;transform:scaleX(0.945);">$</div>
<div class="t" style="top:278.90px;font-size:6.8px;line-height:8.16px;color:#111;font-weight:bold;right:253.00px;transform-origin:100% 50%;transform:scaleX(0.945);">100.00</div>
<div class="t" style="top:278.90px;font-size:6.8px;line-height:8.16px;color:#1c1c1c;left:352.20px;transform-origin:0 50%;transform:scaleX(0.945);">Activo</div>
<div class="t" style="top:278.90px;font-size:6.8px;line-height:8.16px;color:#1c1c1c;left:248.60px;width:300px;text-align:center;transform-origin:50% 50%;transform:scaleX(0.945);">2</div>
<svg style="left:380.9px;top:277.52px" width="2.4" height="2.4" viewBox="0 0 2 2"><path d="M0 0h2L0 2z" fill="#1f7a3a"/></svg>
<div style="left:417.58px;top:281px;width:6.6px;height:3px;border-radius:1px;background:#efc46c;border:.6px solid #d8a646;"></div>
<div style="left:426.75px;top:281px;width:6.6px;height:3px;border-radius:1px;background:#efc46c;border:.6px solid #d8a646;"></div>
<div style="left:435.92px;top:281px;width:6.6px;height:3px;border-radius:1px;background:#efc46c;border:.6px solid #d8a646;"></div>
<div style="left:445.08px;top:281px;width:6.6px;height:3px;border-radius:1px;background:#efc46c;border:.6px solid #d8a646;"></div>
<div style="left:454.25px;top:281px;width:6.6px;height:3px;border-radius:1px;background:#efc46c;border:.6px solid #d8a646;"></div>
<div style="left:463.42px;top:281px;width:6.6px;height:3px;border-radius:1px;background:#efc46c;border:.6px solid #d8a646;"></div>
<div style="left:472.59px;top:281px;width:6.6px;height:3px;border-radius:1px;background:#efc46c;border:.6px solid #d8a646;"></div>
<svg style="left:481.65px;top:278.78px" width="6.8" height="6.8" viewBox="0 0 6.8 6.8"><path d="M1.500 1.500l3.800 3.800M5.300 1.500L1.500 5.300" fill="none" stroke="#d4512f" stroke-width="2.300" stroke-linecap="round"/></svg>
<svg style="left:490.82px;top:278.78px" width="6.8" height="6.8" viewBox="0 0 6.8 6.8"><path d="M1.500 1.500l3.800 3.800M5.300 1.500L1.500 5.300" fill="none" stroke="#d4512f" stroke-width="2.300" stroke-linecap="round"/></svg>
<div class="t" style="top:278.90px;font-size:6.8px;line-height:8.16px;color:#1c1c1c;right:63.80px;transform-origin:100% 50%;transform:scaleX(0.945);">2</div>
<div style="left:489.64px;top:287.04px;width:9.17px;height:9.77px;background:#b6c8e8;"></div>
<div style="left:25.70px;top:286.74px;width:511.80px;height:0.60px;background:rgba(142,169,219,.32);"></div>
<div style="left:39.70px;top:287.04px;width:0.60px;height:9.72px;background:rgba(200,210,230,.4);"></div>
<div style="left:55.40px;top:287.04px;width:0.60px;height:9.72px;background:rgba(200,210,230,.4);"></div>
<div style="left:97.20px;top:287.04px;width:0.60px;height:9.72px;background:rgba(200,210,230,.4);"></div>
<div style="left:125.10px;top:287.04px;width:0.60px;height:9.72px;background:rgba(200,210,230,.4);"></div>
<div style="left:247.20px;top:287.04px;width:0.60px;height:9.72px;background:rgba(200,210,230,.4);"></div>
<div style="left:292.20px;top:287.04px;width:0.60px;height:9.72px;background:rgba(200,210,230,.4);"></div>
<div style="left:308.40px;top:287.04px;width:0.60px;height:9.72px;background:rgba(200,210,230,.4);"></div>
<div style="left:350.20px;top:287.04px;width:0.60px;height:9.72px;background:rgba(200,210,230,.4);"></div>
<div style="left:380.20px;top:287.04px;width:0.60px;height:9.72px;background:rgba(200,210,230,.4);"></div>
<div style="left:416.00px;top:287.04px;width:0.60px;height:9.72px;background:rgba(200,210,230,.4);"></div>
<div style="left:425.17px;top:287.04px;width:0.60px;height:9.72px;background:rgba(200,210,230,.4);"></div>
<div style="left:434.33px;top:287.04px;width:0.60px;height:9.72px;background:rgba(200,210,230,.4);"></div>
<div style="left:443.50px;top:287.04px;width:0.60px;height:9.72px;background:rgba(200,210,230,.4);"></div>
<div style="left:452.67px;top:287.04px;width:0.60px;height:9.72px;background:rgba(200,210,230,.4);"></div>
<div style="left:461.83px;top:287.04px;width:0.60px;height:9.72px;background:rgba(200,210,230,.4);"></div>
<div style="left:471.00px;top:287.04px;width:0.60px;height:9.72px;background:rgba(200,210,230,.4);"></div>
<div style="left:480.17px;top:287.04px;width:0.60px;height:9.72px;background:rgba(200,210,230,.4);"></div>
<div style="left:507.67px;top:287.04px;width:0.60px;height:9.72px;background:rgba(200,210,230,.4);"></div>
<div style="left:516.84px;top:287.04px;width:0.60px;height:9.72px;background:rgba(200,210,230,.4);"></div>
<div style="left:526.00px;top:287.04px;width:0.60px;height:9.72px;background:rgba(200,210,230,.4);"></div>
<div style="left:537.20px;top:287.04px;width:0.60px;height:9.72px;background:rgba(200,210,230,.4);"></div>
<div style="left:248.6px;top:287.74px;width:2.05px;height:8.32px;background:linear-gradient(90deg,#f7585c,#fbc0c2);border:.5px solid rgba(247,88,92,.35);border-left-color:#f7585c;"></div>
<div style="left:309.8px;top:287.74px;width:3.67px;height:8.32px;background:linear-gradient(90deg,#ffb62a,#ffebc4);border:.5px solid rgba(255,182,42,.3);border-left-color:#ffb62a;"></div>
<div class="t" style="top:288.62px;font-size:6.8px;line-height:8.16px;color:#1c1c1c;left:-117.30px;width:300px;text-align:center;transform-origin:50% 50%;transform:scaleX(0.945);">6</div>
<div class="t" style="top:288.62px;font-size:6.8px;line-height:8.16px;color:#1c1c1c;right:545.80px;transform-origin:100% 50%;transform:scaleX(0.945);">3</div>
<div class="t" style="top:288.62px;font-size:6.8px;line-height:8.16px;color:#1c1c1c;left:-73.10px;width:300px;text-align:center;transform-origin:50% 50%;transform:scaleX(0.945);">junio</div>
<div class="t" style="top:288.62px;font-size:6.8px;line-height:8.16px;color:#1c1c1c;left:-38.55px;width:300px;text-align:center;transform-origin:50% 50%;transform:scaleX(0.945);">2017</div>
<div class="t" style="top:288.62px;font-size:6.8px;line-height:8.16px;color:#1c1c1c;left:126.80px;transform-origin:0 50%;transform:scaleX(0.985);">Ismael Rivera Lopez</div>
<div class="t" style="top:288.62px;font-size:6.8px;line-height:8.16px;color:#111;font-weight:bold;left:250.60px;transform-origin:0 50%;transform:scaleX(0.945);">$</div>
<div class="t" style="top:288.62px;font-size:6.8px;line-height:8.16px;color:#111;font-weight:bold;right:310.40px;transform-origin:100% 50%;transform:scaleX(0.945);">500.00</div>
<div class="t" style="top:288.62px;font-size:6.8px;line-height:8.16px;color:#1c1c1c;left:150.60px;width:300px;text-align:center;transform-origin:50% 50%;transform:scaleX(0.945);">20%</div>
<div class="t" style="top:288.62px;font-size:6.8px;line-height:8.16px;color:#111;font-weight:bold;left:311.80px;transform-origin:0 50%;transform:scaleX(0.945);">$</div>
<div class="t" style="top:288.62px;font-size:6.8px;line-height:8.16px;color:#111;font-weight:bold;right:253.00px;transform-origin:100% 50%;transform:scaleX(0.945);">100.00</div>
<div class="t" style="top:288.62px;font-size:6.8px;line-height:8.16px;color:#1c1c1c;left:352.20px;transform-origin:0 50%;transform:scaleX(0.945);">Activo</div>
<div class="t" style="top:288.62px;font-size:6.8px;line-height:8.16px;color:#1c1c1c;left:248.60px;width:300px;text-align:center;transform-origin:50% 50%;transform:scaleX(0.945);">3</div>
<svg style="left:380.9px;top:287.24px" width="2.4" height="2.4" viewBox="0 0 2 2"><path d="M0 0h2L0 2z" fill="#1f7a3a"/></svg>
<div style="left:417.58px;top:290px;width:6.6px;height:3px;border-radius:1px;background:#efc46c;border:.6px solid #d8a646;"></div>
<div style="left:426.75px;top:290px;width:6.6px;height:3px;border-radius:1px;background:#efc46c;border:.6px solid #d8a646;"></div>
<div style="left:435.92px;top:290px;width:6.6px;height:3px;border-radius:1px;background:#efc46c;border:.6px solid #d8a646;"></div>
<div style="left:445.08px;top:290px;width:6.6px;height:3px;border-radius:1px;background:#efc46c;border:.6px solid #d8a646;"></div>
<div style="left:454.25px;top:290px;width:6.6px;height:3px;border-radius:1px;background:#efc46c;border:.6px solid #d8a646;"></div>
<div style="left:463.42px;top:290px;width:6.6px;height:3px;border-radius:1px;background:#efc46c;border:.6px solid #d8a646;"></div>
<svg style="left:472.29px;top:288.50px" width="7.2" height="6.8" viewBox="0 0 7.2 6.8"><path d="M1 3.700l1.700 1.900C3.700 3.700 5 2.100 6.300 1" fill="none" stroke="#5b9a7f" stroke-width="2" stroke-linecap="round" stroke-linejoin="round"/></svg>
<svg style="left:481.45px;top:288.50px" width="7.2" height="6.8" viewBox="0 0 7.2 6.8"><path d="M1 3.700l1.700 1.900C3.700 3.700 5 2.100 6.300 1" fill="none" stroke="#5b9a7f" stroke-width="2" stroke-linecap="round" stroke-linejoin="round"/></svg>
<svg style="left:490.82px;top:288.50px" width="6.8" height="6.8" viewBox="0 0 6.8 6.8"><path d="M1.500 1.500l3.800 3.800M5.300 1.500L1.500 5.300" fill="none" stroke="#d4512f" stroke-width="2.300" stroke-linecap="round"/></svg>
<div class="t" style="top:288.62px;font-size:6.8px;line-height:8.16px;color:#1c1c1c;right:63.80px;transform-origin:100% 50%;transform:scaleX(0.945);">1</div>
<div style="left:25.70px;top:296.76px;width:511.80px;height:9.77px;background:#d9e1f2;"></div>
<div style="left:489.64px;top:296.76px;width:9.17px;height:9.77px;background:#a9bde3;"></div>
<div style="left:25.70px;top:296.46px;width:511.80px;height:0.60px;background:rgba(142,169,219,.32);"></div>
<div style="left:39.70px;top:296.76px;width:0.60px;height:9.72px;background:rgba(255,255,255,.4);"></div>
<div style="left:55.40px;top:296.76px;width:0.60px;height:9.72px;background:rgba(255,255,255,.4);"></div>
<div style="left:97.20px;top:296.76px;width:0.60px;height:9.72px;background:rgba(255,255,255,.4);"></div>
<div style="left:125.10px;top:296.76px;width:0.60px;height:9.72px;background:rgba(255,255,255,.4);"></div>
<div style="left:247.20px;top:296.76px;width:0.60px;height:9.72px;background:rgba(255,255,255,.4);"></div>
<div style="left:292.20px;top:296.76px;width:0.60px;height:9.72px;background:rgba(255,255,255,.4);"></div>
<div style="left:308.40px;top:296.76px;width:0.60px;height:9.72px;background:rgba(255,255,255,.4);"></div>
<div style="left:350.20px;top:296.76px;width:0.60px;height:9.72px;background:rgba(255,255,255,.4);"></div>
<div style="left:380.20px;top:296.76px;width:0.60px;height:9.72px;background:rgba(255,255,255,.4);"></div>
<div style="left:416.00px;top:296.76px;width:0.60px;height:9.72px;background:rgba(255,255,255,.4);"></div>
<div style="left:425.17px;top:296.76px;width:0.60px;height:9.72px;background:rgba(255,255,255,.4);"></div>
<div style="left:434.33px;top:296.76px;width:0.60px;height:9.72px;background:rgba(255,255,255,.4);"></div>
<div style="left:443.50px;top:296.76px;width:0.60px;height:9.72px;background:rgba(255,255,255,.4);"></div>
<div style="left:452.67px;top:296.76px;width:0.60px;height:9.72px;background:rgba(255,255,255,.4);"></div>
<div style="left:461.83px;top:296.76px;width:0.60px;height:9.72px;background:rgba(255,255,255,.4);"></div>
<div style="left:471.00px;top:296.76px;width:0.60px;height:9.72px;background:rgba(255,255,255,.4);"></div>
<div style="left:480.17px;top:296.76px;width:0.60px;height:9.72px;background:rgba(255,255,255,.4);"></div>
<div style="left:507.67px;top:296.76px;width:0.60px;height:9.72px;background:rgba(255,255,255,.4);"></div>
<div style="left:516.84px;top:296.76px;width:0.60px;height:9.72px;background:rgba(255,255,255,.4);"></div>
<div style="left:526.00px;top:296.76px;width:0.60px;height:9.72px;background:rgba(255,255,255,.4);"></div>
<div style="left:537.20px;top:296.76px;width:0.60px;height:9.72px;background:rgba(255,255,255,.4);"></div>
<div style="left:248.6px;top:297.46px;width:15.58px;height:8.32px;background:linear-gradient(90deg,#f7585c,#fbc0c2);border:.5px solid rgba(247,88,92,.35);border-left-color:#f7585c;"></div>
<div style="left:309.8px;top:297.46px;width:14.68px;height:8.32px;background:linear-gradient(90deg,#ffb62a,#ffebc4);border:.5px solid rgba(255,182,42,.3);border-left-color:#ffb62a;"></div>
<div class="t" style="top:298.34px;font-size:6.8px;line-height:8.16px;color:#1c1c1c;left:-117.30px;width:300px;text-align:center;transform-origin:50% 50%;transform:scaleX(0.945);">7</div>
<div class="t" style="top:298.34px;font-size:6.8px;line-height:8.16px;color:#1c1c1c;right:545.80px;transform-origin:100% 50%;transform:scaleX(0.945);">3</div>
<div class="t" style="top:298.34px;font-size:6.8px;line-height:8.16px;color:#1c1c1c;left:-73.10px;width:300px;text-align:center;transform-origin:50% 50%;transform:scaleX(0.945);">junio</div>
<div class="t" style="top:298.34px;font-size:6.8px;line-height:8.16px;color:#1c1c1c;left:-38.55px;width:300px;text-align:center;transform-origin:50% 50%;transform:scaleX(0.945);">2017</div>
<div class="t" style="top:298.34px;font-size:6.8px;line-height:8.16px;color:#1c1c1c;left:126.80px;transform-origin:0 50%;transform:scaleX(0.985);">Javier Perez Ortiz</div>
<div class="t" style="top:298.34px;font-size:6.8px;line-height:8.16px;color:#111;font-weight:bold;left:250.60px;transform-origin:0 50%;transform:scaleX(0.945);">$</div>
<div class="t" style="top:298.34px;font-size:6.8px;line-height:8.16px;color:#111;font-weight:bold;right:310.40px;transform-origin:100% 50%;transform:scaleX(0.945);">3,800.00</div>
<div class="t" style="top:298.34px;font-size:6.8px;line-height:8.16px;color:#1c1c1c;left:150.60px;width:300px;text-align:center;transform-origin:50% 50%;transform:scaleX(0.945);">10%</div>
<div class="t" style="top:298.34px;font-size:6.8px;line-height:8.16px;color:#111;font-weight:bold;left:311.80px;transform-origin:0 50%;transform:scaleX(0.945);">$</div>
<div class="t" style="top:298.34px;font-size:6.8px;line-height:8.16px;color:#111;font-weight:bold;right:253.00px;transform-origin:100% 50%;transform:scaleX(0.945);">400.00</div>
<div class="t" style="top:298.34px;font-size:6.8px;line-height:8.16px;color:#1c1c1c;left:352.20px;transform-origin:0 50%;transform:scaleX(0.945);">Activo</div>
<div class="t" style="top:298.34px;font-size:6.8px;line-height:8.16px;color:#1c1c1c;left:248.60px;width:300px;text-align:center;transform-origin:50% 50%;transform:scaleX(0.945);">1</div>
<svg style="left:380.9px;top:296.96px" width="2.4" height="2.4" viewBox="0 0 2 2"><path d="M0 0h2L0 2z" fill="#1f7a3a"/></svg>
<div style="left:417.58px;top:300px;width:6.6px;height:3px;border-radius:1px;background:#efc46c;border:.6px solid #d8a646;"></div>
<div style="left:426.75px;top:300px;width:6.6px;height:3px;border-radius:1px;background:#efc46c;border:.6px solid #d8a646;"></div>
<div style="left:435.92px;top:300px;width:6.6px;height:3px;border-radius:1px;background:#efc46c;border:.6px solid #d8a646;"></div>
<div style="left:445.08px;top:300px;width:6.6px;height:3px;border-radius:1px;background:#efc46c;border:.6px solid #d8a646;"></div>
<div style="left:454.25px;top:300px;width:6.6px;height:3px;border-radius:1px;background:#efc46c;border:.6px solid #d8a646;"></div>
<div style="left:463.42px;top:300px;width:6.6px;height:3px;border-radius:1px;background:#efc46c;border:.6px solid #d8a646;"></div>
<svg style="left:472.49px;top:298.22px" width="6.8" height="6.8" viewBox="0 0 6.8 6.8"><path d="M1.500 1.500l3.800 3.800M5.300 1.500L1.500 5.300" fill="none" stroke="#d4512f" stroke-width="2.300" stroke-linecap="round"/></svg>
<svg style="left:481.65px;top:298.22px" width="6.8" height="6.8" viewBox="0 0 6.8 6.8"><path d="M1.500 1.500l3.800 3.800M5.300 1.500L1.500 5.300" fill="none" stroke="#d4512f" stroke-width="2.300" stroke-linecap="round"/></svg>
<svg style="left:490.82px;top:298.22px" width="6.8" height="6.8" viewBox="0 0 6.8 6.8"><path d="M1.500 1.500l3.800 3.800M5.300 1.500L1.500 5.300" fill="none" stroke="#d4512f" stroke-width="2.300" stroke-linecap="round"/></svg>
<div class="t" style="top:298.34px;font-size:6.8px;line-height:8.16px;color:#1c1c1c;right:63.80px;transform-origin:100% 50%;transform:scaleX(0.945);">3</div>
<div style="left:489.64px;top:306.48px;width:9.17px;height:9.77px;background:#b6c8e8;"></div>
<div style="left:25.70px;top:306.18px;width:511.80px;height:0.60px;background:rgba(142,169,219,.32);"></div>
<div style="left:39.70px;top:306.48px;width:0.60px;height:9.72px;background:rgba(200,210,230,.4);"></div>
<div style="left:55.40px;top:306.48px;width:0.60px;height:9.72px;background:rgba(200,210,230,.4);"></div>
<div style="left:97.20px;top:306.48px;width:0.60px;height:9.72px;background:rgba(200,210,230,.4);"></div>
<div style="left:125.10px;top:306.48px;width:0.60px;height:9.72px;background:rgba(200,210,230,.4);"></div>
<div style="left:247.20px;top:306.48px;width:0.60px;height:9.72px;background:rgba(200,210,230,.4);"></div>
<div style="left:292.20px;top:306.48px;width:0.60px;height:9.72px;background:rgba(200,210,230,.4);"></div>
<div style="left:308.40px;top:306.48px;width:0.60px;height:9.72px;background:rgba(200,210,230,.4);"></div>
<div style="left:350.20px;top:306.48px;width:0.60px;height:9.72px;background:rgba(200,210,230,.4);"></div>
<div style="left:380.20px;top:306.48px;width:0.60px;height:9.72px;background:rgba(200,210,230,.4);"></div>
<div style="left:416.00px;top:306.48px;width:0.60px;height:9.72px;background:rgba(200,210,230,.4);"></div>
<div style="left:425.17px;top:306.48px;width:0.60px;height:9.72px;background:rgba(200,210,230,.4);"></div>
<div style="left:434.33px;top:306.48px;width:0.60px;height:9.72px;background:rgba(200,210,230,.4);"></div>
<div style="left:443.50px;top:306.48px;width:0.60px;height:9.72px;background:rgba(200,210,230,.4);"></div>
<div style="left:452.67px;top:306.48px;width:0.60px;height:9.72px;background:rgba(200,210,230,.4);"></div>
<div style="left:461.83px;top:306.48px;width:0.60px;height:9.72px;background:rgba(200,210,230,.4);"></div>
<div style="left:471.00px;top:306.48px;width:0.60px;height:9.72px;background:rgba(200,210,230,.4);"></div>
<div style="left:480.17px;top:306.48px;width:0.60px;height:9.72px;background:rgba(200,210,230,.4);"></div>
<div style="left:507.67px;top:306.48px;width:0.60px;height:9.72px;background:rgba(200,210,230,.4);"></div>
<div style="left:516.84px;top:306.48px;width:0.60px;height:9.72px;background:rgba(200,210,230,.4);"></div>
<div style="left:526.00px;top:306.48px;width:0.60px;height:9.72px;background:rgba(200,210,230,.4);"></div>
<div style="left:537.20px;top:306.48px;width:0.60px;height:9.72px;background:rgba(200,210,230,.4);"></div>
<div style="left:248.6px;top:307.18px;width:2.46px;height:8.32px;background:linear-gradient(90deg,#f7585c,#fbc0c2);border:.5px solid rgba(247,88,92,.35);border-left-color:#f7585c;"></div>
<div style="left:309.8px;top:307.18px;width:3.67px;height:8.32px;background:linear-gradient(90deg,#ffb62a,#ffebc4);border:.5px solid rgba(255,182,42,.3);border-left-color:#ffb62a;"></div>
<div class="t" style="top:308.06px;font-size:6.8px;line-height:8.16px;color:#1c1c1c;left:-117.30px;width:300px;text-align:center;transform-origin:50% 50%;transform:scaleX(0.945);">10</div>
<div class="t" style="top:308.06px;font-size:6.8px;line-height:8.16px;color:#1c1c1c;right:545.80px;transform-origin:100% 50%;transform:scaleX(0.945);">4</div>
<div class="t" style="top:308.06px;font-size:6.8px;line-height:8.16px;color:#1c1c1c;left:-73.10px;width:300px;text-align:center;transform-origin:50% 50%;transform:scaleX(0.945);">septiembre</div>
<div class="t" style="top:308.06px;font-size:6.8px;line-height:8.16px;color:#1c1c1c;left:-38.55px;width:300px;text-align:center;transform-origin:50% 50%;transform:scaleX(0.945);">2015</div>
<div class="t" style="top:308.06px;font-size:6.8px;line-height:8.16px;color:#1c1c1c;left:126.80px;transform-origin:0 50%;transform:scaleX(0.985);">Chiristian Rojas Moran</div>
<div class="t" style="top:308.06px;font-size:6.8px;line-height:8.16px;color:#111;font-weight:bold;left:250.60px;transform-origin:0 50%;transform:scaleX(0.945);">$</div>
<div class="t" style="top:308.06px;font-size:6.8px;line-height:8.16px;color:#111;font-weight:bold;right:310.40px;transform-origin:100% 50%;transform:scaleX(0.945);">600.00</div>
<div class="t" style="top:308.06px;font-size:6.8px;line-height:8.16px;color:#1c1c1c;left:150.60px;width:300px;text-align:center;transform-origin:50% 50%;transform:scaleX(0.945);">20%</div>
<div class="t" style="top:308.06px;font-size:6.8px;line-height:8.16px;color:#111;font-weight:bold;left:311.80px;transform-origin:0 50%;transform:scaleX(0.945);">$</div>
<div class="t" style="top:308.06px;font-size:6.8px;line-height:8.16px;color:#111;font-weight:bold;right:253.00px;transform-origin:100% 50%;transform:scaleX(0.945);">100.00</div>
<div class="t" style="top:308.06px;font-size:6.8px;line-height:8.16px;color:#1c1c1c;left:352.20px;transform-origin:0 50%;transform:scaleX(0.945);">Activo</div>
<div class="t" style="top:308.06px;font-size:6.8px;line-height:8.16px;color:#1c1c1c;left:248.60px;width:300px;text-align:center;transform-origin:50% 50%;transform:scaleX(0.945);">3</div>
<svg style="left:380.9px;top:306.68px" width="2.4" height="2.4" viewBox="0 0 2 2"><path d="M0 0h2L0 2z" fill="#1f7a3a"/></svg>
<svg style="left:417.28px;top:307.94px" width="7.2" height="6.8" viewBox="0 0 7.2 6.8"><path d="M1 3.700l1.700 1.900C3.700 3.700 5 2.100 6.300 1" fill="none" stroke="#5b9a7f" stroke-width="2" stroke-linecap="round" stroke-linejoin="round"/></svg>
<svg style="left:426.45px;top:307.94px" width="7.2" height="6.8" viewBox="0 0 7.2 6.8"><path d="M1 3.700l1.700 1.900C3.700 3.700 5 2.100 6.300 1" fill="none" stroke="#5b9a7f" stroke-width="2" stroke-linecap="round" stroke-linejoin="round"/></svg>
<svg style="left:435.62px;top:307.94px" width="7.2" height="6.8" viewBox="0 0 7.2 6.8"><path d="M1 3.700l1.700 1.900C3.700 3.700 5 2.100 6.300 1" fill="none" stroke="#5b9a7f" stroke-width="2" stroke-linecap="round" stroke-linejoin="round"/></svg>
<svg style="left:444.78px;top:307.94px" width="7.2" height="6.8" viewBox="0 0 7.2 6.8"><path d="M1 3.700l1.700 1.900C3.700 3.700 5 2.100 6.300 1" fill="none" stroke="#5b9a7f" stroke-width="2" stroke-linecap="round" stroke-linejoin="round"/></svg>
<svg style="left:453.95px;top:307.94px" width="7.2" height="6.8" viewBox="0 0 7.2 6.8"><path d="M1 3.700l1.700 1.900C3.700 3.700 5 2.100 6.300 1" fill="none" stroke="#5b9a7f" stroke-width="2" stroke-linecap="round" stroke-linejoin="round"/></svg>
<svg style="left:463.12px;top:307.94px" width="7.2" height="6.8" viewBox="0 0 7.2 6.8"><path d="M1 3.700l1.700 1.900C3.700 3.700 5 2.100 6.300 1" fill="none" stroke="#5b9a7f" stroke-width="2" stroke-linecap="round" stroke-linejoin="round"/></svg>
<svg style="left:472.29px;top:307.94px" width="7.2" height="6.8" viewBox="0 0 7.2 6.8"><path d="M1 3.700l1.700 1.900C3.700 3.700 5 2.100 6.300 1" fill="none" stroke="#5b9a7f" stroke-width="2" stroke-linecap="round" stroke-linejoin="round"/></svg>
<svg style="left:481.45px;top:307.94px" width="7.2" height="6.8" viewBox="0 0 7.2 6.8"><path d="M1 3.700l1.700 1.900C3.700 3.700 5 2.100 6.300 1" fill="none" stroke="#5b9a7f" stroke-width="2" stroke-linecap="round" stroke-linejoin="round"/></svg>
<svg style="left:490.62px;top:307.94px" width="7.2" height="6.8" viewBox="0 0 7.2 6.8"><path d="M1 3.700l1.700 1.900C3.700 3.700 5 2.100 6.300 1" fill="none" stroke="#5b9a7f" stroke-width="2" stroke-linecap="round" stroke-linejoin="round"/></svg>
<div class="t" style="top:308.06px;font-size:6.8px;line-height:8.16px;color:#1c1c1c;right:63.80px;transform-origin:100% 50%;transform:scaleX(0.945);">0</div>
<div style="left:25.70px;top:316.20px;width:511.80px;height:9.77px;background:#d9e1f2;"></div>
<div style="left:489.64px;top:316.20px;width:9.17px;height:9.77px;background:#a9bde3;"></div>
<div style="left:25.70px;top:315.90px;width:511.80px;height:0.60px;background:rgba(142,169,219,.32);"></div>
<div style="left:39.70px;top:316.20px;width:0.60px;height:9.72px;background:rgba(255,255,255,.4);"></div>
<div style="left:55.40px;top:316.20px;width:0.60px;height:9.72px;background:rgba(255,255,255,.4);"></div>
<div style="left:97.20px;top:316.20px;width:0.60px;height:9.72px;background:rgba(255,255,255,.4);"></div>
<div style="left:125.10px;top:316.20px;width:0.60px;height:9.72px;background:rgba(255,255,255,.4);"></div>
<div style="left:247.20px;top:316.20px;width:0.60px;height:9.72px;background:rgba(255,255,255,.4);"></div>
<div style="left:292.20px;top:316.20px;width:0.60px;height:9.72px;background:rgba(255,255,255,.4);"></div>
<div style="left:308.40px;top:316.20px;width:0.60px;height:9.72px;background:rgba(255,255,255,.4);"></div>
<div style="left:350.20px;top:316.20px;width:0.60px;height:9.72px;background:rgba(255,255,255,.4);"></div>
<div style="left:380.20px;top:316.20px;width:0.60px;height:9.72px;background:rgba(255,255,255,.4);"></div>
<div style="left:416.00px;top:316.20px;width:0.60px;height:9.72px;background:rgba(255,255,255,.4);"></div>
<div style="left:425.17px;top:316.20px;width:0.60px;height:9.72px;background:rgba(255,255,255,.4);"></div>
<div style="left:434.33px;top:316.20px;width:0.60px;height:9.72px;background:rgba(255,255,255,.4);"></div>
<div style="left:443.50px;top:316.20px;width:0.60px;height:9.72px;background:rgba(255,255,255,.4);"></div>
<div style="left:452.67px;top:316.20px;width:0.60px;height:9.72px;background:rgba(255,255,255,.4);"></div>
<div style="left:461.83px;top:316.20px;width:0.60px;height:9.72px;background:rgba(255,255,255,.4);"></div>
<div style="left:471.00px;top:316.20px;width:0.60px;height:9.72px;background:rgba(255,255,255,.4);"></div>
<div style="left:480.17px;top:316.20px;width:0.60px;height:9.72px;background:rgba(255,255,255,.4);"></div>
<div style="left:507.67px;top:316.20px;width:0.60px;height:9.72px;background:rgba(255,255,255,.4);"></div>
<div style="left:516.84px;top:316.20px;width:0.60px;height:9.72px;background:rgba(255,255,255,.4);"></div>
<div style="left:526.00px;top:316.20px;width:0.60px;height:9.72px;background:rgba(255,255,255,.4);"></div>
<div style="left:537.20px;top:316.20px;width:0.60px;height:9.72px;background:rgba(255,255,255,.4);"></div>
<div style="left:248.6px;top:316.90px;width:4.10px;height:8.32px;background:linear-gradient(90deg,#f7585c,#fbc0c2);border:.5px solid rgba(247,88,92,.35);border-left-color:#f7585c;"></div>
<div style="left:309.8px;top:316.90px;width:5.51px;height:8.32px;background:linear-gradient(90deg,#ffb62a,#ffebc4);border:.5px solid rgba(255,182,42,.3);border-left-color:#ffb62a;"></div>
<div class="t" style="top:317.78px;font-size:6.8px;line-height:8.16px;color:#1c1c1c;left:-117.30px;width:300px;text-align:center;transform-origin:50% 50%;transform:scaleX(0.945);">8</div>
<div class="t" style="top:317.78px;font-size:6.8px;line-height:8.16px;color:#1c1c1c;right:545.80px;transform-origin:100% 50%;transform:scaleX(0.945);">4</div>
<div class="t" style="top:317.78px;font-size:6.8px;line-height:8.16px;color:#1c1c1c;left:-73.10px;width:300px;text-align:center;transform-origin:50% 50%;transform:scaleX(0.945);">julio</div>
<div class="t" style="top:317.78px;font-size:6.8px;line-height:8.16px;color:#1c1c1c;left:-38.55px;width:300px;text-align:center;transform-origin:50% 50%;transform:scaleX(0.945);">2016</div>
<div class="t" style="top:317.78px;font-size:6.8px;line-height:8.16px;color:#1c1c1c;left:126.80px;transform-origin:0 50%;transform:scaleX(0.985);">Oscar Monreal Garcia</div>
<div class="t" style="top:317.78px;font-size:6.8px;line-height:8.16px;color:#111;font-weight:bold;left:250.60px;transform-origin:0 50%;transform:scaleX(0.945);">$</div>
<div class="t" style="top:317.78px;font-size:6.8px;line-height:8.16px;color:#111;font-weight:bold;right:310.40px;transform-origin:100% 50%;transform:scaleX(0.945);">1,000.00</div>
<div class="t" style="top:317.78px;font-size:6.8px;line-height:8.16px;color:#1c1c1c;left:150.60px;width:300px;text-align:center;transform-origin:50% 50%;transform:scaleX(0.945);">15%</div>
<div class="t" style="top:317.78px;font-size:6.8px;line-height:8.16px;color:#111;font-weight:bold;left:311.80px;transform-origin:0 50%;transform:scaleX(0.945);">$</div>
<div class="t" style="top:317.78px;font-size:6.8px;line-height:8.16px;color:#111;font-weight:bold;right:253.00px;transform-origin:100% 50%;transform:scaleX(0.945);">150.00</div>
<div class="t" style="top:317.78px;font-size:6.8px;line-height:8.16px;color:#1c1c1c;left:352.20px;transform-origin:0 50%;transform:scaleX(0.945);">Activo</div>
<div class="t" style="top:317.78px;font-size:6.8px;line-height:8.16px;color:#1c1c1c;left:248.60px;width:300px;text-align:center;transform-origin:50% 50%;transform:scaleX(0.945);">1</div>
<svg style="left:380.9px;top:316.40px" width="2.4" height="2.4" viewBox="0 0 2 2"><path d="M0 0h2L0 2z" fill="#1f7a3a"/></svg>
<svg style="left:417.28px;top:317.66px" width="7.2" height="6.8" viewBox="0 0 7.2 6.8"><path d="M1 3.700l1.700 1.900C3.700 3.700 5 2.100 6.300 1" fill="none" stroke="#5b9a7f" stroke-width="2" stroke-linecap="round" stroke-linejoin="round"/></svg>
<svg style="left:426.45px;top:317.66px" width="7.2" height="6.8" viewBox="0 0 7.2 6.8"><path d="M1 3.700l1.700 1.900C3.700 3.700 5 2.100 6.300 1" fill="none" stroke="#5b9a7f" stroke-width="2" stroke-linecap="round" stroke-linejoin="round"/></svg>
<svg style="left:435.62px;top:317.66px" width="7.2" height="6.8" viewBox="0 0 7.2 6.8"><path d="M1 3.700l1.700 1.900C3.700 3.700 5 2.100 6.300 1" fill="none" stroke="#5b9a7f" stroke-width="2" stroke-linecap="round" stroke-linejoin="round"/></svg>
<svg style="left:444.78px;top:317.66px" width="7.2" height="6.8" viewBox="0 0 7.2 6.8"><path d="M1 3.700l1.700 1.900C3.700 3.700 5 2.100 6.300 1" fill="none" stroke="#5b9a7f" stroke-width="2" stroke-linecap="round" stroke-linejoin="round"/></svg>
<svg style="left:453.95px;top:317.66px" width="7.2" height="6.8" viewBox="0 0 7.2 6.8"><path d="M1 3.700l1.700 1.900C3.700 3.700 5 2.100 6.300 1" fill="none" stroke="#5b9a7f" stroke-width="2" stroke-linecap="round" stroke-linejoin="round"/></svg>
<svg style="left:463.12px;top:317.66px" width="7.2" height="6.8" viewBox="0 0 7.2 6.8"><path d="M1 3.700l1.700 1.900C3.700 3.700 5 2.100 6.300 1" fill="none" stroke="#5b9a7f" stroke-width="2" stroke-linecap="round" stroke-linejoin="round"/></svg>
<svg style="left:472.29px;top:317.66px" width="7.2" height="6.8" viewBox="0 0 7.2 6.8"><path d="M1 3.700l1.700 1.900C3.700 3.700 5 2.100 6.300 1" fill="none" stroke="#5b9a7f" stroke-width="2" stroke-linecap="round" stroke-linejoin="round"/></svg>
<svg style="left:481.65px;top:317.66px" width="6.8" height="6.8" viewBox="0 0 6.8 6.8"><path d="M1.500 1.500l3.800 3.800M5.300 1.500L1.500 5.300" fill="none" stroke="#d4512f" stroke-width="2.300" stroke-linecap="round"/></svg>
<svg style="left:490.82px;top:317.66px" width="6.8" height="6.8" viewBox="0 0 6.8 6.8"><path d="M1.500 1.500l3.800 3.800M5.300 1.500L1.500 5.300" fill="none" stroke="#d4512f" stroke-width="2.300" stroke-linecap="round"/></svg>
<div class="t" style="top:317.78px;font-size:6.8px;line-height:8.16px;color:#1c1c1c;right:63.80px;transform-origin:100% 50%;transform:scaleX(0.945);">2</div>
<div style="left:489.64px;top:325.92px;width:9.17px;height:9.77px;background:#b6c8e8;"></div>
<div style="left:25.70px;top:325.62px;width:511.80px;height:0.60px;background:rgba(142,169,219,.32);"></div>
<div style="left:39.70px;top:325.92px;width:0.60px;height:9.72px;background:rgba(200,210,230,.4);"></div>
<div style="left:55.40px;top:325.92px;width:0.60px;height:9.72px;background:rgba(200,210,230,.4);"></div>
<div style="left:97.20px;top:325.92px;width:0.60px;height:9.72px;background:rgba(200,210,230,.4);"></div>
<div style="left:125.10px;top:325.92px;width:0.60px;height:9.72px;background:rgba(200,210,230,.4);"></div>
<div style="left:247.20px;top:325.92px;width:0.60px;height:9.72px;background:rgba(200,210,230,.4);"></div>
<div style="left:292.20px;top:325.92px;width:0.60px;height:9.72px;background:rgba(200,210,230,.4);"></div>
<div style="left:308.40px;top:325.92px;width:0.60px;height:9.72px;background:rgba(200,210,230,.4);"></div>
<div style="left:350.20px;top:325.92px;width:0.60px;height:9.72px;background:rgba(200,210,230,.4);"></div>
<div style="left:380.20px;top:325.92px;width:0.60px;height:9.72px;background:rgba(200,210,230,.4);"></div>
<div style="left:416.00px;top:325.92px;width:0.60px;height:9.72px;background:rgba(200,210,230,.4);"></div>
<div style="left:425.17px;top:325.92px;width:0.60px;height:9.72px;background:rgba(200,210,230,.4);"></div>
<div style="left:434.33px;top:325.92px;width:0.60px;height:9.72px;background:rgba(200,210,230,.4);"></div>
<div style="left:443.50px;top:325.92px;width:0.60px;height:9.72px;background:rgba(200,210,230,.4);"></div>
<div style="left:452.67px;top:325.92px;width:0.60px;height:9.72px;background:rgba(200,210,230,.4);"></div>
<div style="left:461.83px;top:325.92px;width:0.60px;height:9.72px;background:rgba(200,210,230,.4);"></div>
<div style="left:471.00px;top:325.92px;width:0.60px;height:9.72px;background:rgba(200,210,230,.4);"></div>
<div style="left:480.17px;top:325.92px;width:0.60px;height:9.72px;background:rgba(200,210,230,.4);"></div>
<div style="left:507.67px;top:325.92px;width:0.60px;height:9.72px;background:rgba(200,210,230,.4);"></div>
<div style="left:516.84px;top:325.92px;width:0.60px;height:9.72px;background:rgba(200,210,230,.4);"></div>
<div style="left:526.00px;top:325.92px;width:0.60px;height:9.72px;background:rgba(200,210,230,.4);"></div>
<div style="left:537.20px;top:325.92px;width:0.60px;height:9.72px;background:rgba(200,210,230,.4);"></div>
<div style="left:248.6px;top:326.62px;width:6.15px;height:8.32px;background:linear-gradient(90deg,#f7585c,#fbc0c2);border:.5px solid rgba(247,88,92,.35);border-left-color:#f7585c;"></div>
<div style="left:309.8px;top:326.62px;width:8.07px;height:8.32px;background:linear-gradient(90deg,#ffb62a,#ffebc4);border:.5px solid rgba(255,182,42,.3);border-left-color:#ffb62a;"></div>
<div class="t" style="top:327.50px;font-size:6.8px;line-height:8.16px;color:#1c1c1c;left:-117.30px;width:300px;text-align:center;transform-origin:50% 50%;transform:scaleX(0.945);">11</div>
<div class="t" style="top:327.50px;font-size:6.8px;line-height:8.16px;color:#1c1c1c;right:545.80px;transform-origin:100% 50%;transform:scaleX(0.945);">5</div>
<div class="t" style="top:327.50px;font-size:6.8px;line-height:8.16px;color:#1c1c1c;left:-73.10px;width:300px;text-align:center;transform-origin:50% 50%;transform:scaleX(0.945);">abril</div>
<div class="t" style="top:327.50px;font-size:6.8px;line-height:8.16px;color:#1c1c1c;left:-38.55px;width:300px;text-align:center;transform-origin:50% 50%;transform:scaleX(0.945);">2017</div>
<div class="t" style="top:327.50px;font-size:6.8px;line-height:8.16px;color:#1c1c1c;left:126.80px;transform-origin:0 50%;transform:scaleX(0.985);">Angelica Gutierrez Navarro</div>
<div class="t" style="top:327.50px;font-size:6.8px;line-height:8.16px;color:#111;font-weight:bold;left:250.60px;transform-origin:0 50%;transform:scaleX(0.945);">$</div>
<div class="t" style="top:327.50px;font-size:6.8px;line-height:8.16px;color:#111;font-weight:bold;right:310.40px;transform-origin:100% 50%;transform:scaleX(0.945);">1,500.00</div>
<div class="t" style="top:327.50px;font-size:6.8px;line-height:8.16px;color:#1c1c1c;left:150.60px;width:300px;text-align:center;transform-origin:50% 50%;transform:scaleX(0.945);">15%</div>
<div class="t" style="top:327.50px;font-size:6.8px;line-height:8.16px;color:#111;font-weight:bold;left:311.80px;transform-origin:0 50%;transform:scaleX(0.945);">$</div>
<div class="t" style="top:327.50px;font-size:6.8px;line-height:8.16px;color:#111;font-weight:bold;right:253.00px;transform-origin:100% 50%;transform:scaleX(0.945);">220.00</div>
<div class="t" style="top:327.50px;font-size:6.8px;line-height:8.16px;color:#1c1c1c;left:352.20px;transform-origin:0 50%;transform:scaleX(0.945);">Activo</div>
<div class="t" style="top:327.50px;font-size:6.8px;line-height:8.16px;color:#1c1c1c;left:248.60px;width:300px;text-align:center;transform-origin:50% 50%;transform:scaleX(0.945);">1</div>
<svg style="left:380.9px;top:326.12px" width="2.4" height="2.4" viewBox="0 0 2 2"><path d="M0 0h2L0 2z" fill="#1f7a3a"/></svg>
<div style="left:417.58px;top:329px;width:6.6px;height:3px;border-radius:1px;background:#efc46c;border:.6px solid #d8a646;"></div>
<div style="left:426.75px;top:329px;width:6.6px;height:3px;border-radius:1px;background:#efc46c;border:.6px solid #d8a646;"></div>
<div style="left:435.92px;top:329px;width:6.6px;height:3px;border-radius:1px;background:#efc46c;border:.6px solid #d8a646;"></div>
<div style="left:445.08px;top:329px;width:6.6px;height:3px;border-radius:1px;background:#efc46c;border:.6px solid #d8a646;"></div>
<svg style="left:453.95px;top:327.38px" width="7.2" height="6.8" viewBox="0 0 7.2 6.8"><path d="M1 3.700l1.700 1.900C3.700 3.700 5 2.100 6.300 1" fill="none" stroke="#5b9a7f" stroke-width="2" stroke-linecap="round" stroke-linejoin="round"/></svg>
<svg style="left:463.12px;top:327.38px" width="7.2" height="6.8" viewBox="0 0 7.2 6.8"><path d="M1 3.700l1.700 1.900C3.700 3.700 5 2.100 6.300 1" fill="none" stroke="#5b9a7f" stroke-width="2" stroke-linecap="round" stroke-linejoin="round"/></svg>
<svg style="left:472.29px;top:327.38px" width="7.2" height="6.8" viewBox="0 0 7.2 6.8"><path d="M1 3.700l1.700 1.900C3.700 3.700 5 2.100 6.300 1" fill="none" stroke="#5b9a7f" stroke-width="2" stroke-linecap="round" stroke-linejoin="round"/></svg>
<svg style="left:481.45px;top:327.38px" width="7.2" height="6.8" viewBox="0 0 7.2 6.8"><path d="M1 3.700l1.700 1.900C3.700 3.700 5 2.100 6.300 1" fill="none" stroke="#5b9a7f" stroke-width="2" stroke-linecap="round" stroke-linejoin="round"/></svg>
<svg style="left:490.62px;top:327.38px" width="7.2" height="6.8" viewBox="0 0 7.2 6.8"><path d="M1 3.700l1.700 1.900C3.700 3.700 5 2.100 6.300 1" fill="none" stroke="#5b9a7f" stroke-width="2" stroke-linecap="round" stroke-linejoin="round"/></svg>
<div class="t" style="top:327.50px;font-size:6.8px;line-height:8.16px;color:#1c1c1c;right:63.80px;transform-origin:100% 50%;transform:scaleX(0.945);">0</div>
<div style="left:25.70px;top:335.64px;width:511.80px;height:9.77px;background:#d9e1f2;"></div>
<div style="left:489.64px;top:335.64px;width:9.17px;height:9.77px;background:#a9bde3;"></div>
<div style="left:25.70px;top:335.34px;width:511.80px;height:0.60px;background:rgba(142,169,219,.32);"></div>
<div style="left:39.70px;top:335.64px;width:0.60px;height:9.72px;background:rgba(255,255,255,.4);"></div>
<div style="left:55.40px;top:335.64px;width:0.60px;height:9.72px;background:rgba(255,255,255,.4);"></div>
<div style="left:97.20px;top:335.64px;width:0.60px;height:9.72px;background:rgba(255,255,255,.4);"></div>
<div style="left:125.10px;top:335.64px;width:0.60px;height:9.72px;background:rgba(255,255,255,.4);"></div>
<div style="left:247.20px;top:335.64px;width:0.60px;height:9.72px;background:rgba(255,255,255,.4);"></div>
<div style="left:292.20px;top:335.64px;width:0.60px;height:9.72px;background:rgba(255,255,255,.4);"></div>
<div style="left:308.40px;top:335.64px;width:0.60px;height:9.72px;background:rgba(255,255,255,.4);"></div>
<div style="left:350.20px;top:335.64px;width:0.60px;height:9.72px;background:rgba(255,255,255,.4);"></div>
<div style="left:380.20px;top:335.64px;width:0.60px;height:9.72px;background:rgba(255,255,255,.4);"></div>
<div style="left:416.00px;top:335.64px;width:0.60px;height:9.72px;background:rgba(255,255,255,.4);"></div>
<div style="left:425.17px;top:335.64px;width:0.60px;height:9.72px;background:rgba(255,255,255,.4);"></div>
<div style="left:434.33px;top:335.64px;width:0.60px;height:9.72px;background:rgba(255,255,255,.4);"></div>
<div style="left:443.50px;top:335.64px;width:0.60px;height:9.72px;background:rgba(255,255,255,.4);"></div>
<div style="left:452.67px;top:335.64px;width:0.60px;height:9.72px;background:rgba(255,255,255,.4);"></div>
<div style="left:461.83px;top:335.64px;width:0.60px;height:9.72px;background:rgba(255,255,255,.4);"></div>
<div style="left:471.00px;top:335.64px;width:0.60px;height:9.72px;background:rgba(255,255,255,.4);"></div>
<div style="left:480.17px;top:335.64px;width:0.60px;height:9.72px;background:rgba(255,255,255,.4);"></div>
<div style="left:507.67px;top:335.64px;width:0.60px;height:9.72px;background:rgba(255,255,255,.4);"></div>
<div style="left:516.84px;top:335.64px;width:0.60px;height:9.72px;background:rgba(255,255,255,.4);"></div>
<div style="left:526.00px;top:335.64px;width:0.60px;height:9.72px;background:rgba(255,255,255,.4);"></div>
<div style="left:537.20px;top:335.64px;width:0.60px;height:9.72px;background:rgba(255,255,255,.4);"></div>
<div style="left:248.6px;top:336.34px;width:20.50px;height:8.32px;background:linear-gradient(90deg,#f7585c,#fbc0c2);border:.5px solid rgba(247,88,92,.35);border-left-color:#f7585c;"></div>
<div style="left:309.8px;top:336.34px;width:27.53px;height:8.32px;background:linear-gradient(90deg,#ffb62a,#ffebc4);border:.5px solid rgba(255,182,42,.3);border-left-color:#ffb62a;"></div>
<div class="t" style="top:337.22px;font-size:6.8px;line-height:8.16px;color:#1c1c1c;left:-117.30px;width:300px;text-align:center;transform-origin:50% 50%;transform:scaleX(0.945);">105</div>
<div class="t" style="top:337.22px;font-size:6.8px;line-height:8.16px;color:#1c1c1c;right:545.80px;transform-origin:100% 50%;transform:scaleX(0.945);">5</div>
<div class="t" style="top:337.22px;font-size:6.8px;line-height:8.16px;color:#1c1c1c;left:-73.10px;width:300px;text-align:center;transform-origin:50% 50%;transform:scaleX(0.945);">septiembre</div>
<div class="t" style="top:337.22px;font-size:6.8px;line-height:8.16px;color:#1c1c1c;left:-38.55px;width:300px;text-align:center;transform-origin:50% 50%;transform:scaleX(0.945);">2017</div>
<div class="t" style="top:337.22px;font-size:6.8px;line-height:8.16px;color:#1c1c1c;left:126.80px;transform-origin:0 50%;transform:scaleX(0.985);">Ivan Medina Gonzalez</div>
<div class="t" style="top:337.22px;font-size:6.8px;line-height:8.16px;color:#111;font-weight:bold;left:250.60px;transform-origin:0 50%;transform:scaleX(0.945);">$</div>
<div class="t" style="top:337.22px;font-size:6.8px;line-height:8.16px;color:#111;font-weight:bold;right:310.40px;transform-origin:100% 50%;transform:scaleX(0.945);">5,000.00</div>
<div class="t" style="top:337.22px;font-size:6.8px;line-height:8.16px;color:#1c1c1c;left:150.60px;width:300px;text-align:center;transform-origin:50% 50%;transform:scaleX(0.945);">15%</div>
<div class="t" style="top:337.22px;font-size:6.8px;line-height:8.16px;color:#111;font-weight:bold;left:311.80px;transform-origin:0 50%;transform:scaleX(0.945);">$</div>
<div class="t" style="top:337.22px;font-size:6.8px;line-height:8.16px;color:#111;font-weight:bold;right:253.00px;transform-origin:100% 50%;transform:scaleX(0.945);">750.00</div>
<div class="t" style="top:337.22px;font-size:6.8px;line-height:8.16px;color:#1c1c1c;left:352.20px;transform-origin:0 50%;transform:scaleX(0.945);">Activo</div>
<div class="t" style="top:337.22px;font-size:6.8px;line-height:8.16px;color:#1c1c1c;left:248.60px;width:300px;text-align:center;transform-origin:50% 50%;transform:scaleX(0.945);">4</div>
<svg style="left:380.9px;top:335.84px" width="2.4" height="2.4" viewBox="0 0 2 2"><path d="M0 0h2L0 2z" fill="#1f7a3a"/></svg>
<div style="left:417.58px;top:339px;width:6.6px;height:3px;border-radius:1px;background:#efc46c;border:.6px solid #d8a646;"></div>
<div style="left:426.75px;top:339px;width:6.6px;height:3px;border-radius:1px;background:#efc46c;border:.6px solid #d8a646;"></div>
<div style="left:435.92px;top:339px;width:6.6px;height:3px;border-radius:1px;background:#efc46c;border:.6px solid #d8a646;"></div>
<div style="left:445.08px;top:339px;width:6.6px;height:3px;border-radius:1px;background:#efc46c;border:.6px solid #d8a646;"></div>
<div style="left:454.25px;top:339px;width:6.6px;height:3px;border-radius:1px;background:#efc46c;border:.6px solid #d8a646;"></div>
<div style="left:463.42px;top:339px;width:6.6px;height:3px;border-radius:1px;background:#efc46c;border:.6px solid #d8a646;"></div>
<div style="left:472.59px;top:339px;width:6.6px;height:3px;border-radius:1px;background:#efc46c;border:.6px solid #d8a646;"></div>
<div style="left:481.75px;top:339px;width:6.6px;height:3px;border-radius:1px;background:#efc46c;border:.6px solid #d8a646;"></div>
<div style="left:490.92px;top:339px;width:6.6px;height:3px;border-radius:1px;background:#efc46c;border:.6px solid #d8a646;"></div>
<div class="t" style="top:337.22px;font-size:6.8px;line-height:8.16px;color:#1c1c1c;right:63.80px;transform-origin:100% 50%;transform:scaleX(0.945);">0</div>
<div style="left:489.64px;top:345.36px;width:9.17px;height:9.77px;background:#b6c8e8;"></div>
<div style="left:25.70px;top:345.06px;width:511.80px;height:0.60px;background:rgba(142,169,219,.32);"></div>
<div style="left:39.70px;top:345.36px;width:0.60px;height:9.72px;background:rgba(200,210,230,.4);"></div>
<div style="left:55.40px;top:345.36px;width:0.60px;height:9.72px;background:rgba(200,210,230,.4);"></div>
<div style="left:97.20px;top:345.36px;width:0.60px;height:9.72px;background:rgba(200,210,230,.4);"></div>
<div style="left:125.10px;top:345.36px;width:0.60px;height:9.72px;background:rgba(200,210,230,.4);"></div>
<div style="left:247.20px;top:345.36px;width:0.60px;height:9.72px;background:rgba(200,210,230,.4);"></div>
<div style="left:292.20px;top:345.36px;width:0.60px;height:9.72px;background:rgba(200,210,230,.4);"></div>
<div style="left:308.40px;top:345.36px;width:0.60px;height:9.72px;background:rgba(200,210,230,.4);"></div>
<div style="left:350.20px;top:345.36px;width:0.60px;height:9.72px;background:rgba(200,210,230,.4);"></div>
<div style="left:380.20px;top:345.36px;width:0.60px;height:9.72px;background:rgba(200,210,230,.4);"></div>
<div style="left:416.00px;top:345.36px;width:0.60px;height:9.72px;background:rgba(200,210,230,.4);"></div>
<div style="left:425.17px;top:345.36px;width:0.60px;height:9.72px;background:rgba(200,210,230,.4);"></div>
<div style="left:434.33px;top:345.36px;width:0.60px;height:9.72px;background:rgba(200,210,230,.4);"></div>
<div style="left:443.50px;top:345.36px;width:0.60px;height:9.72px;background:rgba(200,210,230,.4);"></div>
<div style="left:452.67px;top:345.36px;width:0.60px;height:9.72px;background:rgba(200,210,230,.4);"></div>
<div style="left:461.83px;top:345.36px;width:0.60px;height:9.72px;background:rgba(200,210,230,.4);"></div>
<div style="left:471.00px;top:345.36px;width:0.60px;height:9.72px;background:rgba(200,210,230,.4);"></div>
<div style="left:480.17px;top:345.36px;width:0.60px;height:9.72px;background:rgba(200,210,230,.4);"></div>
<div style="left:507.67px;top:345.36px;width:0.60px;height:9.72px;background:rgba(200,210,230,.4);"></div>
<div style="left:516.84px;top:345.36px;width:0.60px;height:9.72px;background:rgba(200,210,230,.4);"></div>
<div style="left:526.00px;top:345.36px;width:0.60px;height:9.72px;background:rgba(200,210,230,.4);"></div>
<div style="left:537.20px;top:345.36px;width:0.60px;height:9.72px;background:rgba(200,210,230,.4);"></div>
<div style="left:248.6px;top:346.06px;width:20.50px;height:8.32px;background:linear-gradient(90deg,#f7585c,#fbc0c2);border:.5px solid rgba(247,88,92,.35);border-left-color:#f7585c;"></div>
<div style="left:309.8px;top:346.06px;width:27.53px;height:8.32px;background:linear-gradient(90deg,#ffb62a,#ffebc4);border:.5px solid rgba(255,182,42,.3);border-left-color:#ffb62a;"></div>
<div class="t" style="top:346.94px;font-size:6.8px;line-height:8.16px;color:#1c1c1c;left:-117.30px;width:300px;text-align:center;transform-origin:50% 50%;transform:scaleX(0.945);">12</div>
<div class="t" style="top:346.94px;font-size:6.8px;line-height:8.16px;color:#1c1c1c;right:545.80px;transform-origin:100% 50%;transform:scaleX(0.945);">5</div>
<div class="t" style="top:346.94px;font-size:6.8px;line-height:8.16px;color:#1c1c1c;left:-73.10px;width:300px;text-align:center;transform-origin:50% 50%;transform:scaleX(0.945);">febrero</div>
<div class="t" style="top:346.94px;font-size:6.8px;line-height:8.16px;color:#1c1c1c;left:-38.55px;width:300px;text-align:center;transform-origin:50% 50%;transform:scaleX(0.945);">2017</div>
<div class="t" style="top:346.94px;font-size:6.8px;line-height:8.16px;color:#1c1c1c;left:126.80px;transform-origin:0 50%;transform:scaleX(0.985);">Ivan Medina Gonzalez</div>
<div class="t" style="top:346.94px;font-size:6.8px;line-height:8.16px;color:#111;font-weight:bold;left:250.60px;transform-origin:0 50%;transform:scaleX(0.945);">$</div>
<div class="t" style="top:346.94px;font-size:6.8px;line-height:8.16px;color:#111;font-weight:bold;right:310.40px;transform-origin:100% 50%;transform:scaleX(0.945);">5,000.00</div>
<div class="t" style="top:346.94px;font-size:6.8px;line-height:8.16px;color:#1c1c1c;left:150.60px;width:300px;text-align:center;transform-origin:50% 50%;transform:scaleX(0.945);">15%</div>
<div class="t" style="top:346.94px;font-size:6.8px;line-height:8.16px;color:#111;font-weight:bold;left:311.80px;transform-origin:0 50%;transform:scaleX(0.945);">$</div>
<div class="t" style="top:346.94px;font-size:6.8px;line-height:8.16px;color:#111;font-weight:bold;right:253.00px;transform-origin:100% 50%;transform:scaleX(0.945);">750.00</div>
<div class="t" style="top:346.94px;font-size:6.8px;line-height:8.16px;color:#1c1c1c;left:352.20px;transform-origin:0 50%;transform:scaleX(0.945);">Activo</div>
<div class="t" style="top:346.94px;font-size:6.8px;line-height:8.16px;color:#1c1c1c;left:248.60px;width:300px;text-align:center;transform-origin:50% 50%;transform:scaleX(0.945);">4</div>
<svg style="left:380.9px;top:345.56px" width="2.4" height="2.4" viewBox="0 0 2 2"><path d="M0 0h2L0 2z" fill="#1f7a3a"/></svg>
<div style="left:417.58px;top:349px;width:6.6px;height:3px;border-radius:1px;background:#efc46c;border:.6px solid #d8a646;"></div>
<div style="left:426.75px;top:349px;width:6.6px;height:3px;border-radius:1px;background:#efc46c;border:.6px solid #d8a646;"></div>
<svg style="left:435.62px;top:346.82px" width="7.2" height="6.8" viewBox="0 0 7.2 6.8"><path d="M1 3.700l1.700 1.900C3.700 3.700 5 2.100 6.300 1" fill="none" stroke="#5b9a7f" stroke-width="2" stroke-linecap="round" stroke-linejoin="round"/></svg>
<svg style="left:444.78px;top:346.82px" width="7.2" height="6.8" viewBox="0 0 7.2 6.8"><path d="M1 3.700l1.700 1.900C3.700 3.700 5 2.100 6.300 1" fill="none" stroke="#5b9a7f" stroke-width="2" stroke-linecap="round" stroke-linejoin="round"/></svg>
<svg style="left:453.95px;top:346.82px" width="7.2" height="6.8" viewBox="0 0 7.2 6.8"><path d="M1 3.700l1.700 1.900C3.700 3.700 5 2.100 6.300 1" fill="none" stroke="#5b9a7f" stroke-width="2" stroke-linecap="round" stroke-linejoin="round"/></svg>
<svg style="left:463.12px;top:346.82px" width="7.2" height="6.8" viewBox="0 0 7.2 6.8"><path d="M1 3.700l1.700 1.900C3.700 3.700 5 2.100 6.300 1" fill="none" stroke="#5b9a7f" stroke-width="2" stroke-linecap="round" stroke-linejoin="round"/></svg>
<svg style="left:472.29px;top:346.82px" width="7.2" height="6.8" viewBox="0 0 7.2 6.8"><path d="M1 3.700l1.700 1.900C3.700 3.700 5 2.100 6.300 1" fill="none" stroke="#5b9a7f" stroke-width="2" stroke-linecap="round" stroke-linejoin="round"/></svg>
<svg style="left:481.45px;top:346.82px" width="7.2" height="6.8" viewBox="0 0 7.2 6.8"><path d="M1 3.700l1.700 1.900C3.700 3.700 5 2.100 6.300 1" fill="none" stroke="#5b9a7f" stroke-width="2" stroke-linecap="round" stroke-linejoin="round"/></svg>
<svg style="left:490.62px;top:346.82px" width="7.2" height="6.8" viewBox="0 0 7.2 6.8"><path d="M1 3.700l1.700 1.900C3.700 3.700 5 2.100 6.300 1" fill="none" stroke="#5b9a7f" stroke-width="2" stroke-linecap="round" stroke-linejoin="round"/></svg>
<div class="t" style="top:346.94px;font-size:6.8px;line-height:8.16px;color:#1c1c1c;right:63.80px;transform-origin:100% 50%;transform:scaleX(0.945);">0</div>
<div style="left:25.70px;top:355.08px;width:511.80px;height:9.77px;background:#d9e1f2;"></div>
<div style="left:489.64px;top:355.08px;width:9.17px;height:9.77px;background:#a9bde3;"></div>
<div style="left:25.70px;top:354.78px;width:511.80px;height:0.60px;background:rgba(142,169,219,.32);"></div>
<div style="left:39.70px;top:355.08px;width:0.60px;height:9.72px;background:rgba(255,255,255,.4);"></div>
<div style="left:55.40px;top:355.08px;width:0.60px;height:9.72px;background:rgba(255,255,255,.4);"></div>
<div style="left:97.20px;top:355.08px;width:0.60px;height:9.72px;background:rgba(255,255,255,.4);"></div>
<div style="left:125.10px;top:355.08px;width:0.60px;height:9.72px;background:rgba(255,255,255,.4);"></div>
<div style="left:247.20px;top:355.08px;width:0.60px;height:9.72px;background:rgba(255,255,255,.4);"></div>
<div style="left:292.20px;top:355.08px;width:0.60px;height:9.72px;background:rgba(255,255,255,.4);"></div>
<div style="left:308.40px;top:355.08px;width:0.60px;height:9.72px;background:rgba(255,255,255,.4);"></div>
<div style="left:350.20px;top:355.08px;width:0.60px;height:9.72px;background:rgba(255,255,255,.4);"></div>
<div style="left:380.20px;top:355.08px;width:0.60px;height:9.72px;background:rgba(255,255,255,.4);"></div>
<div style="left:416.00px;top:355.08px;width:0.60px;height:9.72px;background:rgba(255,255,255,.4);"></div>
<div style="left:425.17px;top:355.08px;width:0.60px;height:9.72px;background:rgba(255,255,255,.4);"></div>
<div style="left:434.33px;top:355.08px;width:0.60px;height:9.72px;background:rgba(255,255,255,.4);"></div>
<div style="left:443.50px;top:355.08px;width:0.60px;height:9.72px;background:rgba(255,255,255,.4);"></div>
<div style="left:452.67px;top:355.08px;width:0.60px;height:9.72px;background:rgba(255,255,255,.4);"></div>
<div style="left:461.83px;top:355.08px;width:0.60px;height:9.72px;background:rgba(255,255,255,.4);"></div>
<div style="left:471.00px;top:355.08px;width:0.60px;height:9.72px;background:rgba(255,255,255,.4);"></div>
<div style="left:480.17px;top:355.08px;width:0.60px;height:9.72px;background:rgba(255,255,255,.4);"></div>
<div style="left:507.67px;top:355.08px;width:0.60px;height:9.72px;background:rgba(255,255,255,.4);"></div>
<div style="left:516.84px;top:355.08px;width:0.60px;height:9.72px;background:rgba(255,255,255,.4);"></div>
<div style="left:526.00px;top:355.08px;width:0.60px;height:9.72px;background:rgba(255,255,255,.4);"></div>
<div style="left:537.20px;top:355.08px;width:0.60px;height:9.72px;background:rgba(255,255,255,.4);"></div>
<div style="left:248.6px;top:355.78px;width:12.30px;height:8.32px;background:linear-gradient(90deg,#f7585c,#fbc0c2);border:.5px solid rgba(247,88,92,.35);border-left-color:#f7585c;"></div>
<div style="left:309.8px;top:355.78px;width:11.01px;height:8.32px;background:linear-gradient(90deg,#ffb62a,#ffebc4);border:.5px solid rgba(255,182,42,.3);border-left-color:#ffb62a;"></div>
<div class="t" style="top:356.66px;font-size:6.8px;line-height:8.16px;color:#1c1c1c;left:-117.30px;width:300px;text-align:center;transform-origin:50% 50%;transform:scaleX(0.945);">13</div>
<div class="t" style="top:356.66px;font-size:6.8px;line-height:8.16px;color:#1c1c1c;right:545.80px;transform-origin:100% 50%;transform:scaleX(0.945);">5</div>
<div class="t" style="top:356.66px;font-size:6.8px;line-height:8.16px;color:#1c1c1c;left:-73.10px;width:300px;text-align:center;transform-origin:50% 50%;transform:scaleX(0.945);">marzo</div>
<div class="t" style="top:356.66px;font-size:6.8px;line-height:8.16px;color:#1c1c1c;left:-38.55px;width:300px;text-align:center;transform-origin:50% 50%;transform:scaleX(0.945);">2017</div>
<div class="t" style="top:356.66px;font-size:6.8px;line-height:8.16px;color:#1c1c1c;left:126.80px;transform-origin:0 50%;transform:scaleX(0.985);">Juan Jose Rubio Nuñez</div>
<div class="t" style="top:356.66px;font-size:6.8px;line-height:8.16px;color:#111;font-weight:bold;left:250.60px;transform-origin:0 50%;transform:scaleX(0.945);">$</div>
<div class="t" style="top:356.66px;font-size:6.8px;line-height:8.16px;color:#111;font-weight:bold;right:310.40px;transform-origin:100% 50%;transform:scaleX(0.945);">3,000.00</div>
<div class="t" style="top:356.66px;font-size:6.8px;line-height:8.16px;color:#1c1c1c;left:150.60px;width:300px;text-align:center;transform-origin:50% 50%;transform:scaleX(0.945);">10%</div>
<div class="t" style="top:356.66px;font-size:6.8px;line-height:8.16px;color:#111;font-weight:bold;left:311.80px;transform-origin:0 50%;transform:scaleX(0.945);">$</div>
<div class="t" style="top:356.66px;font-size:6.8px;line-height:8.16px;color:#111;font-weight:bold;right:253.00px;transform-origin:100% 50%;transform:scaleX(0.945);">300.00</div>
<div class="t" style="top:356.66px;font-size:6.8px;line-height:8.16px;color:#1c1c1c;left:352.20px;transform-origin:0 50%;transform:scaleX(0.945);">Activo</div>
<div class="t" style="top:356.66px;font-size:6.8px;line-height:8.16px;color:#1c1c1c;left:248.60px;width:300px;text-align:center;transform-origin:50% 50%;transform:scaleX(0.945);">2</div>
<svg style="left:380.9px;top:355.28px" width="2.4" height="2.4" viewBox="0 0 2 2"><path d="M0 0h2L0 2z" fill="#1f7a3a"/></svg>
<div style="left:417.58px;top:358px;width:6.6px;height:3px;border-radius:1px;background:#efc46c;border:.6px solid #d8a646;"></div>
<div style="left:426.75px;top:358px;width:6.6px;height:3px;border-radius:1px;background:#efc46c;border:.6px solid #d8a646;"></div>
<div style="left:435.92px;top:358px;width:6.6px;height:3px;border-radius:1px;background:#efc46c;border:.6px solid #d8a646;"></div>
<svg style="left:444.78px;top:356.54px" width="7.2" height="6.8" viewBox="0 0 7.2 6.8"><path d="M1 3.700l1.700 1.900C3.700 3.700 5 2.100 6.300 1" fill="none" stroke="#5b9a7f" stroke-width="2" stroke-linecap="round" stroke-linejoin="round"/></svg>
<svg style="left:453.95px;top:356.54px" width="7.2" height="6.8" viewBox="0 0 7.2 6.8"><path d="M1 3.700l1.700 1.900C3.700 3.700 5 2.100 6.300 1" fill="none" stroke="#5b9a7f" stroke-width="2" stroke-linecap="round" stroke-linejoin="round"/></svg>
<svg style="left:463.12px;top:356.54px" width="7.2" height="6.8" viewBox="0 0 7.2 6.8"><path d="M1 3.700l1.700 1.900C3.700 3.700 5 2.100 6.300 1" fill="none" stroke="#5b9a7f" stroke-width="2" stroke-linecap="round" stroke-linejoin="round"/></svg>
<svg style="left:472.29px;top:356.54px" width="7.2" height="6.8" viewBox="0 0 7.2 6.8"><path d="M1 3.700l1.700 1.900C3.700 3.700 5 2.100 6.300 1" fill="none" stroke="#5b9a7f" stroke-width="2" stroke-linecap="round" stroke-linejoin="round"/></svg>
<svg style="left:481.45px;top:356.54px" width="7.2" height="6.8" viewBox="0 0 7.2 6.8"><path d="M1 3.700l1.700 1.900C3.700 3.700 5 2.100 6.300 1" fill="none" stroke="#5b9a7f" stroke-width="2" stroke-linecap="round" stroke-linejoin="round"/></svg>
<svg style="left:490.62px;top:356.54px" width="7.2" height="6.8" viewBox="0 0 7.2 6.8"><path d="M1 3.700l1.700 1.900C3.700 3.700 5 2.100 6.300 1" fill="none" stroke="#5b9a7f" stroke-width="2" stroke-linecap="round" stroke-linejoin="round"/></svg>
<div class="t" style="top:356.66px;font-size:6.8px;line-height:8.16px;color:#1c1c1c;right:63.80px;transform-origin:100% 50%;transform:scaleX(0.945);">0</div>
<div style="left:489.64px;top:364.80px;width:9.17px;height:9.77px;background:#b6c8e8;"></div>
<div style="left:25.70px;top:364.50px;width:511.80px;height:0.60px;background:rgba(142,169,219,.32);"></div>
<div style="left:39.70px;top:364.80px;width:0.60px;height:9.72px;background:rgba(200,210,230,.4);"></div>
<div style="left:55.40px;top:364.80px;width:0.60px;height:9.72px;background:rgba(200,210,230,.4);"></div>
<div style="left:97.20px;top:364.80px;width:0.60px;height:9.72px;background:rgba(200,210,230,.4);"></div>
<div style="left:125.10px;top:364.80px;width:0.60px;height:9.72px;background:rgba(200,210,230,.4);"></div>
<div style="left:247.20px;top:364.80px;width:0.60px;height:9.72px;background:rgba(200,210,230,.4);"></div>
<div style="left:292.20px;top:364.80px;width:0.60px;height:9.72px;background:rgba(200,210,230,.4);"></div>
<div style="left:308.40px;top:364.80px;width:0.60px;height:9.72px;background:rgba(200,210,230,.4);"></div>
<div style="left:350.20px;top:364.80px;width:0.60px;height:9.72px;background:rgba(200,210,230,.4);"></div>
<div style="left:380.20px;top:364.80px;width:0.60px;height:9.72px;background:rgba(200,210,230,.4);"></div>
<div style="left:416.00px;top:364.80px;width:0.60px;height:9.72px;background:rgba(200,210,230,.4);"></div>
<div style="left:425.17px;top:364.80px;width:0.60px;height:9.72px;background:rgba(200,210,230,.4);"></div>
<div style="left:434.33px;top:364.80px;width:0.60px;height:9.72px;background:rgba(200,210,230,.4);"></div>
<div style="left:443.50px;top:364.80px;width:0.60px;height:9.72px;background:rgba(200,210,230,.4);"></div>
<div style="left:452.67px;top:364.80px;width:0.60px;height:9.72px;background:rgba(200,210,230,.4);"></div>
<div style="left:461.83px;top:364.80px;width:0.60px;height:9.72px;background:rgba(200,210,230,.4);"></div>
<div style="left:471.00px;top:364.80px;width:0.60px;height:9.72px;background:rgba(200,210,230,.4);"></div>
<div style="left:480.17px;top:364.80px;width:0.60px;height:9.72px;background:rgba(200,210,230,.4);"></div>
<div style="left:507.67px;top:364.80px;width:0.60px;height:9.72px;background:rgba(200,210,230,.4);"></div>
<div style="left:516.84px;top:364.80px;width:0.60px;height:9.72px;background:rgba(200,210,230,.4);"></div>
<div style="left:526.00px;top:364.80px;width:0.60px;height:9.72px;background:rgba(200,210,230,.4);"></div>
<div style="left:537.20px;top:364.80px;width:0.60px;height:9.72px;background:rgba(200,210,230,.4);"></div>
<div style="left:248.6px;top:365.50px;width:8.20px;height:8.32px;background:linear-gradient(90deg,#f7585c,#fbc0c2);border:.5px solid rgba(247,88,92,.35);border-left-color:#f7585c;"></div>
<div style="left:309.8px;top:365.50px;width:7.34px;height:8.32px;background:linear-gradient(90deg,#ffb62a,#ffebc4);border:.5px solid rgba(255,182,42,.3);border-left-color:#ffb62a;"></div>
<div class="t" style="top:366.38px;font-size:6.8px;line-height:8.16px;color:#1c1c1c;left:-117.30px;width:300px;text-align:center;transform-origin:50% 50%;transform:scaleX(0.945);">106</div>
<div class="t" style="top:366.38px;font-size:6.8px;line-height:8.16px;color:#1c1c1c;right:545.80px;transform-origin:100% 50%;transform:scaleX(0.945);">6</div>
<div class="t" style="top:366.38px;font-size:6.8px;line-height:8.16px;color:#1c1c1c;left:-73.10px;width:300px;text-align:center;transform-origin:50% 50%;transform:scaleX(0.945);">septiembre</div>
<div class="t" style="top:366.38px;font-size:6.8px;line-height:8.16px;color:#1c1c1c;left:-38.55px;width:300px;text-align:center;transform-origin:50% 50%;transform:scaleX(0.945);">2017</div>
<div class="t" style="top:366.38px;font-size:6.8px;line-height:8.16px;color:#1c1c1c;left:126.80px;transform-origin:0 50%;transform:scaleX(0.985);">Brigido Arthuro Angulo Valenzuela</div>
<div class="t" style="top:366.38px;font-size:6.8px;line-height:8.16px;color:#111;font-weight:bold;left:250.60px;transform-origin:0 50%;transform:scaleX(0.945);">$</div>
<div class="t" style="top:366.38px;font-size:6.8px;line-height:8.16px;color:#111;font-weight:bold;right:310.40px;transform-origin:100% 50%;transform:scaleX(0.945);">2,000.00</div>
<div class="t" style="top:366.38px;font-size:6.8px;line-height:8.16px;color:#1c1c1c;left:150.60px;width:300px;text-align:center;transform-origin:50% 50%;transform:scaleX(0.945);">10%</div>
<div class="t" style="top:366.38px;font-size:6.8px;line-height:8.16px;color:#111;font-weight:bold;left:311.80px;transform-origin:0 50%;transform:scaleX(0.945);">$</div>
<div class="t" style="top:366.38px;font-size:6.8px;line-height:8.16px;color:#111;font-weight:bold;right:253.00px;transform-origin:100% 50%;transform:scaleX(0.945);">200.00</div>
<div class="t" style="top:366.38px;font-size:6.8px;line-height:8.16px;color:#1c1c1c;left:352.20px;transform-origin:0 50%;transform:scaleX(0.945);">Activo</div>
<div class="t" style="top:366.38px;font-size:6.8px;line-height:8.16px;color:#1c1c1c;left:248.60px;width:300px;text-align:center;transform-origin:50% 50%;transform:scaleX(0.945);">2</div>
<svg style="left:380.9px;top:365.00px" width="2.4" height="2.4" viewBox="0 0 2 2"><path d="M0 0h2L0 2z" fill="#1f7a3a"/></svg>
<div style="left:417.58px;top:368px;width:6.6px;height:3px;border-radius:1px;background:#efc46c;border:.6px solid #d8a646;"></div>
<div style="left:426.75px;top:368px;width:6.6px;height:3px;border-radius:1px;background:#efc46c;border:.6px solid #d8a646;"></div>
<div style="left:435.92px;top:368px;width:6.6px;height:3px;border-radius:1px;background:#efc46c;border:.6px solid #d8a646;"></div>
<div style="left:445.08px;top:368px;width:6.6px;height:3px;border-radius:1px;background:#efc46c;border:.6px solid #d8a646;"></div>
<div style="left:454.25px;top:368px;width:6.6px;height:3px;border-radius:1px;background:#efc46c;border:.6px solid #d8a646;"></div>
<div style="left:463.42px;top:368px;width:6.6px;height:3px;border-radius:1px;background:#efc46c;border:.6px solid #d8a646;"></div>
<div style="left:472.59px;top:368px;width:6.6px;height:3px;border-radius:1px;background:#efc46c;border:.6px solid #d8a646;"></div>
<div style="left:481.75px;top:368px;width:6.6px;height:3px;border-radius:1px;background:#efc46c;border:.6px solid #d8a646;"></div>
<div style="left:490.92px;top:368px;width:6.6px;height:3px;border-radius:1px;background:#efc46c;border:.6px solid #d8a646;"></div>
<div class="t" style="top:366.38px;font-size:6.8px;line-height:8.16px;color:#1c1c1c;right:63.80px;transform-origin:100% 50%;transform:scaleX(0.945);">0</div>
<div style="left:25.70px;top:374.52px;width:511.80px;height:9.77px;background:#d9e1f2;"></div>
<div style="left:489.64px;top:374.52px;width:9.17px;height:9.77px;background:#a9bde3;"></div>
<div style="left:25.70px;top:374.22px;width:511.80px;height:0.60px;background:rgba(142,169,219,.32);"></div>
<div style="left:39.70px;top:374.52px;width:0.60px;height:9.72px;background:rgba(255,255,255,.4);"></div>
<div style="left:55.40px;top:374.52px;width:0.60px;height:9.72px;background:rgba(255,255,255,.4);"></div>
<div style="left:97.20px;top:374.52px;width:0.60px;height:9.72px;background:rgba(255,255,255,.4);"></div>
<div style="left:125.10px;top:374.52px;width:0.60px;height:9.72px;background:rgba(255,255,255,.4);"></div>
<div style="left:247.20px;top:374.52px;width:0.60px;height:9.72px;background:rgba(255,255,255,.4);"></div>
<div style="left:292.20px;top:374.52px;width:0.60px;height:9.72px;background:rgba(255,255,255,.4);"></div>
<div style="left:308.40px;top:374.52px;width:0.60px;height:9.72px;background:rgba(255,255,255,.4);"></div>
<div style="left:350.20px;top:374.52px;width:0.60px;height:9.72px;background:rgba(255,255,255,.4);"></div>
<div style="left:380.20px;top:374.52px;width:0.60px;height:9.72px;background:rgba(255,255,255,.4);"></div>
<div style="left:416.00px;top:374.52px;width:0.60px;height:9.72px;background:rgba(255,255,255,.4);"></div>
<div style="left:425.17px;top:374.52px;width:0.60px;height:9.72px;background:rgba(255,255,255,.4);"></div>
<div style="left:434.33px;top:374.52px;width:0.60px;height:9.72px;background:rgba(255,255,255,.4);"></div>
<div style="left:443.50px;top:374.52px;width:0.60px;height:9.72px;background:rgba(255,255,255,.4);"></div>
<div style="left:452.67px;top:374.52px;width:0.60px;height:9.72px;background:rgba(255,255,255,.4);"></div>
<div style="left:461.83px;top:374.52px;width:0.60px;height:9.72px;background:rgba(255,255,255,.4);"></div>
<div style="left:471.00px;top:374.52px;width:0.60px;height:9.72px;background:rgba(255,255,255,.4);"></div>
<div style="left:480.17px;top:374.52px;width:0.60px;height:9.72px;background:rgba(255,255,255,.4);"></div>
<div style="left:507.67px;top:374.52px;width:0.60px;height:9.72px;background:rgba(255,255,255,.4);"></div>
<div style="left:516.84px;top:374.52px;width:0.60px;height:9.72px;background:rgba(255,255,255,.4);"></div>
<div style="left:526.00px;top:374.52px;width:0.60px;height:9.72px;background:rgba(255,255,255,.4);"></div>
<div style="left:537.20px;top:374.52px;width:0.60px;height:9.72px;background:rgba(255,255,255,.4);"></div>
<div style="left:248.6px;top:375.22px;width:4.10px;height:8.32px;background:linear-gradient(90deg,#f7585c,#fbc0c2);border:.5px solid rgba(247,88,92,.35);border-left-color:#f7585c;"></div>
<div style="left:309.8px;top:375.22px;width:5.51px;height:8.32px;background:linear-gradient(90deg,#ffb62a,#ffebc4);border:.5px solid rgba(255,182,42,.3);border-left-color:#ffb62a;"></div>
<div class="t" style="top:376.10px;font-size:6.8px;line-height:8.16px;color:#1c1c1c;left:-117.30px;width:300px;text-align:center;transform-origin:50% 50%;transform:scaleX(0.945);">15</div>
<div class="t" style="top:376.10px;font-size:6.8px;line-height:8.16px;color:#1c1c1c;right:545.80px;transform-origin:100% 50%;transform:scaleX(0.945);">6</div>
<div class="t" style="top:376.10px;font-size:6.8px;line-height:8.16px;color:#1c1c1c;left:-73.10px;width:300px;text-align:center;transform-origin:50% 50%;transform:scaleX(0.945);">junio</div>
<div class="t" style="top:376.10px;font-size:6.8px;line-height:8.16px;color:#1c1c1c;left:-38.55px;width:300px;text-align:center;transform-origin:50% 50%;transform:scaleX(0.945);">2017</div>
<div class="t" style="top:376.10px;font-size:6.8px;line-height:8.16px;color:#1c1c1c;left:126.80px;transform-origin:0 50%;transform:scaleX(0.985);">Guadalupe Blanco</div>
<div class="t" style="top:376.10px;font-size:6.8px;line-height:8.16px;color:#111;font-weight:bold;left:250.60px;transform-origin:0 50%;transform:scaleX(0.945);">$</div>
<div class="t" style="top:376.10px;font-size:6.8px;line-height:8.16px;color:#111;font-weight:bold;right:310.40px;transform-origin:100% 50%;transform:scaleX(0.945);">1,000.00</div>
<div class="t" style="top:376.10px;font-size:6.8px;line-height:8.16px;color:#1c1c1c;left:150.60px;width:300px;text-align:center;transform-origin:50% 50%;transform:scaleX(0.945);">15%</div>
<div class="t" style="top:376.10px;font-size:6.8px;line-height:8.16px;color:#111;font-weight:bold;left:311.80px;transform-origin:0 50%;transform:scaleX(0.945);">$</div>
<div class="t" style="top:376.10px;font-size:6.8px;line-height:8.16px;color:#111;font-weight:bold;right:253.00px;transform-origin:100% 50%;transform:scaleX(0.945);">150.00</div>
<div class="t" style="top:376.10px;font-size:6.8px;line-height:8.16px;color:#1c1c1c;left:352.20px;transform-origin:0 50%;transform:scaleX(0.945);">Activo</div>
<div class="t" style="top:376.10px;font-size:6.8px;line-height:8.16px;color:#1c1c1c;left:248.60px;width:300px;text-align:center;transform-origin:50% 50%;transform:scaleX(0.945);">1</div>
<svg style="left:380.9px;top:374.72px" width="2.4" height="2.4" viewBox="0 0 2 2"><path d="M0 0h2L0 2z" fill="#1f7a3a"/></svg>
<div style="left:417.58px;top:378px;width:6.6px;height:3px;border-radius:1px;background:#efc46c;border:.6px solid #d8a646;"></div>
<div style="left:426.75px;top:378px;width:6.6px;height:3px;border-radius:1px;background:#efc46c;border:.6px solid #d8a646;"></div>
<div style="left:435.92px;top:378px;width:6.6px;height:3px;border-radius:1px;background:#efc46c;border:.6px solid #d8a646;"></div>
<div style="left:445.08px;top:378px;width:6.6px;height:3px;border-radius:1px;background:#efc46c;border:.6px solid #d8a646;"></div>
<div style="left:454.25px;top:378px;width:6.6px;height:3px;border-radius:1px;background:#efc46c;border:.6px solid #d8a646;"></div>
<div style="left:463.42px;top:378px;width:6.6px;height:3px;border-radius:1px;background:#efc46c;border:.6px solid #d8a646;"></div>
<svg style="left:472.29px;top:375.98px" width="7.2" height="6.8" viewBox="0 0 7.2 6.8"><path d="M1 3.700l1.700 1.900C3.700 3.700 5 2.100 6.300 1" fill="none" stroke="#5b9a7f" stroke-width="2" stroke-linecap="round" stroke-linejoin="round"/></svg>
<svg style="left:481.45px;top:375.98px" width="7.2" height="6.8" viewBox="0 0 7.2 6.8"><path d="M1 3.700l1.700 1.900C3.700 3.700 5 2.100 6.300 1" fill="none" stroke="#5b9a7f" stroke-width="2" stroke-linecap="round" stroke-linejoin="round"/></svg>
<svg style="left:490.62px;top:375.98px" width="7.2" height="6.8" viewBox="0 0 7.2 6.8"><path d="M1 3.700l1.700 1.900C3.700 3.700 5 2.100 6.300 1" fill="none" stroke="#5b9a7f" stroke-width="2" stroke-linecap="round" stroke-linejoin="round"/></svg>
<div class="t" style="top:376.10px;font-size:6.8px;line-height:8.16px;color:#1c1c1c;right:63.80px;transform-origin:100% 50%;transform:scaleX(0.945);">0</div>
<div style="left:489.64px;top:384.24px;width:9.17px;height:9.77px;background:#b6c8e8;"></div>
<div style="left:25.70px;top:383.94px;width:511.80px;height:0.60px;background:rgba(142,169,219,.32);"></div>
<div style="left:39.70px;top:384.24px;width:0.60px;height:9.72px;background:rgba(200,210,230,.4);"></div>
<div style="left:55.40px;top:384.24px;width:0.60px;height:9.72px;background:rgba(200,210,230,.4);"></div>
<div style="left:97.20px;top:384.24px;width:0.60px;height:9.72px;background:rgba(200,210,230,.4);"></div>
<div style="left:125.10px;top:384.24px;width:0.60px;height:9.72px;background:rgba(200,210,230,.4);"></div>
<div style="left:247.20px;top:384.24px;width:0.60px;height:9.72px;background:rgba(200,210,230,.4);"></div>
<div style="left:292.20px;top:384.24px;width:0.60px;height:9.72px;background:rgba(200,210,230,.4);"></div>
<div style="left:308.40px;top:384.24px;width:0.60px;height:9.72px;background:rgba(200,210,230,.4);"></div>
<div style="left:350.20px;top:384.24px;width:0.60px;height:9.72px;background:rgba(200,210,230,.4);"></div>
<div style="left:380.20px;top:384.24px;width:0.60px;height:9.72px;background:rgba(200,210,230,.4);"></div>
<div style="left:416.00px;top:384.24px;width:0.60px;height:9.72px;background:rgba(200,210,230,.4);"></div>
<div style="left:425.17px;top:384.24px;width:0.60px;height:9.72px;background:rgba(200,210,230,.4);"></div>
<div style="left:434.33px;top:384.24px;width:0.60px;height:9.72px;background:rgba(200,210,230,.4);"></div>
<div style="left:443.50px;top:384.24px;width:0.60px;height:9.72px;background:rgba(200,210,230,.4);"></div>
<div style="left:452.67px;top:384.24px;width:0.60px;height:9.72px;background:rgba(200,210,230,.4);"></div>
<div style="left:461.83px;top:384.24px;width:0.60px;height:9.72px;background:rgba(200,210,230,.4);"></div>
<div style="left:471.00px;top:384.24px;width:0.60px;height:9.72px;background:rgba(200,210,230,.4);"></div>
<div style="left:480.17px;top:384.24px;width:0.60px;height:9.72px;background:rgba(200,210,230,.4);"></div>
<div style="left:507.67px;top:384.24px;width:0.60px;height:9.72px;background:rgba(200,210,230,.4);"></div>
<div style="left:516.84px;top:384.24px;width:0.60px;height:9.72px;background:rgba(200,210,230,.4);"></div>
<div style="left:526.00px;top:384.24px;width:0.60px;height:9.72px;background:rgba(200,210,230,.4);"></div>
<div style="left:537.20px;top:384.24px;width:0.60px;height:9.72px;background:rgba(200,210,230,.4);"></div>
<div style="left:248.6px;top:384.94px;width:8.20px;height:8.32px;background:linear-gradient(90deg,#f7585c,#fbc0c2);border:.5px solid rgba(247,88,92,.35);border-left-color:#f7585c;"></div>
<div style="left:309.8px;top:384.94px;width:11.01px;height:8.32px;background:linear-gradient(90deg,#ffb62a,#ffebc4);border:.5px solid rgba(255,182,42,.3);border-left-color:#ffb62a;"></div>
<div class="t" style="top:385.82px;font-size:6.8px;line-height:8.16px;color:#1c1c1c;left:-117.30px;width:300px;text-align:center;transform-origin:50% 50%;transform:scaleX(0.945);">98</div>
<div class="t" style="top:385.82px;font-size:6.8px;line-height:8.16px;color:#1c1c1c;right:545.80px;transform-origin:100% 50%;transform:scaleX(0.945);">6</div>
<div class="t" style="top:385.82px;font-size:6.8px;line-height:8.16px;color:#1c1c1c;left:-73.10px;width:300px;text-align:center;transform-origin:50% 50%;transform:scaleX(0.945);">julio</div>
<div class="t" style="top:385.82px;font-size:6.8px;line-height:8.16px;color:#1c1c1c;left:-38.55px;width:300px;text-align:center;transform-origin:50% 50%;transform:scaleX(0.945);">2017</div>
<div class="t" style="top:385.82px;font-size:6.8px;line-height:8.16px;color:#1c1c1c;left:126.80px;transform-origin:0 50%;transform:scaleX(0.985);">Manuel Gonzales Burgara</div>
<div class="t" style="top:385.82px;font-size:6.8px;line-height:8.16px;color:#111;font-weight:bold;left:250.60px;transform-origin:0 50%;transform:scaleX(0.945);">$</div>
<div class="t" style="top:385.82px;font-size:6.8px;line-height:8.16px;color:#111;font-weight:bold;right:310.40px;transform-origin:100% 50%;transform:scaleX(0.945);">2,000.00</div>
<div class="t" style="top:385.82px;font-size:6.8px;line-height:8.16px;color:#1c1c1c;left:150.60px;width:300px;text-align:center;transform-origin:50% 50%;transform:scaleX(0.945);">15%</div>
<div class="t" style="top:385.82px;font-size:6.8px;line-height:8.16px;color:#111;font-weight:bold;left:311.80px;transform-origin:0 50%;transform:scaleX(0.945);">$</div>
<div class="t" style="top:385.82px;font-size:6.8px;line-height:8.16px;color:#111;font-weight:bold;right:253.00px;transform-origin:100% 50%;transform:scaleX(0.945);">300.00</div>
<div class="t" style="top:385.82px;font-size:6.8px;line-height:8.16px;color:#1c1c1c;left:352.20px;transform-origin:0 50%;transform:scaleX(0.945);">Activo</div>
<div class="t" style="top:385.82px;font-size:6.8px;line-height:8.16px;color:#1c1c1c;left:248.60px;width:300px;text-align:center;transform-origin:50% 50%;transform:scaleX(0.945);">1</div>
<svg style="left:380.9px;top:384.44px" width="2.4" height="2.4" viewBox="0 0 2 2"><path d="M0 0h2L0 2z" fill="#1f7a3a"/></svg>
<div style="left:417.58px;top:388px;width:6.6px;height:3px;border-radius:1px;background:#efc46c;border:.6px solid #d8a646;"></div>
<div style="left:426.75px;top:388px;width:6.6px;height:3px;border-radius:1px;background:#efc46c;border:.6px solid #d8a646;"></div>
<div style="left:435.92px;top:388px;width:6.6px;height:3px;border-radius:1px;background:#efc46c;border:.6px solid #d8a646;"></div>
<div style="left:445.08px;top:388px;width:6.6px;height:3px;border-radius:1px;background:#efc46c;border:.6px solid #d8a646;"></div>
<div style="left:454.25px;top:388px;width:6.6px;height:3px;border-radius:1px;background:#efc46c;border:.6px solid #d8a646;"></div>
<div style="left:463.42px;top:388px;width:6.6px;height:3px;border-radius:1px;background:#efc46c;border:.6px solid #d8a646;"></div>
<div style="left:472.59px;top:388px;width:6.6px;height:3px;border-radius:1px;background:#efc46c;border:.6px solid #d8a646;"></div>
<svg style="left:481.45px;top:385.70px" width="7.2" height="6.8" viewBox="0 0 7.2 6.8"><path d="M1 3.700l1.700 1.900C3.700 3.700 5 2.100 6.300 1" fill="none" stroke="#5b9a7f" stroke-width="2" stroke-linecap="round" stroke-linejoin="round"/></svg>
<svg style="left:490.62px;top:385.70px" width="7.2" height="6.8" viewBox="0 0 7.2 6.8"><path d="M1 3.700l1.700 1.900C3.700 3.700 5 2.100 6.300 1" fill="none" stroke="#5b9a7f" stroke-width="2" stroke-linecap="round" stroke-linejoin="round"/></svg>
<div class="t" style="top:385.82px;font-size:6.8px;line-height:8.16px;color:#1c1c1c;right:63.80px;transform-origin:100% 50%;transform:scaleX(0.945);">0</div>
<div style="left:25.70px;top:393.96px;width:511.80px;height:9.77px;background:#d9e1f2;"></div>
<div style="left:489.64px;top:393.96px;width:9.17px;height:9.77px;background:#a9bde3;"></div>
<div style="left:25.70px;top:393.66px;width:511.80px;height:0.60px;background:rgba(142,169,219,.32);"></div>
<div style="left:39.70px;top:393.96px;width:0.60px;height:9.72px;background:rgba(255,255,255,.4);"></div>
<div style="left:55.40px;top:393.96px;width:0.60px;height:9.72px;background:rgba(255,255,255,.4);"></div>
<div style="left:97.20px;top:393.96px;width:0.60px;height:9.72px;background:rgba(255,255,255,.4);"></div>
<div style="left:125.10px;top:393.96px;width:0.60px;height:9.72px;background:rgba(255,255,255,.4);"></div>
<div style="left:247.20px;top:393.96px;width:0.60px;height:9.72px;background:rgba(255,255,255,.4);"></div>
<div style="left:292.20px;top:393.96px;width:0.60px;height:9.72px;background:rgba(255,255,255,.4);"></div>
<div style="left:308.40px;top:393.96px;width:0.60px;height:9.72px;background:rgba(255,255,255,.4);"></div>
<div style="left:350.20px;top:393.96px;width:0.60px;height:9.72px;background:rgba(255,255,255,.4);"></div>
<div style="left:380.20px;top:393.96px;width:0.60px;height:9.72px;background:rgba(255,255,255,.4);"></div>
<div style="left:416.00px;top:393.96px;width:0.60px;height:9.72px;background:rgba(255,255,255,.4);"></div>
<div style="left:425.17px;top:393.96px;width:0.60px;height:9.72px;background:rgba(255,255,255,.4);"></div>
<div style="left:434.33px;top:393.96px;width:0.60px;height:9.72px;background:rgba(255,255,255,.4);"></div>
<div style="left:443.50px;top:393.96px;width:0.60px;height:9.72px;background:rgba(255,255,255,.4);"></div>
<div style="left:452.67px;top:393.96px;width:0.60px;height:9.72px;background:rgba(255,255,255,.4);"></div>
<div style="left:461.83px;top:393.96px;width:0.60px;height:9.72px;background:rgba(255,255,255,.4);"></div>
<div style="left:471.00px;top:393.96px;width:0.60px;height:9.72px;background:rgba(255,255,255,.4);"></div>
<div style="left:480.17px;top:393.96px;width:0.60px;height:9.72px;background:rgba(255,255,255,.4);"></div>
<div style="left:507.67px;top:393.96px;width:0.60px;height:9.72px;background:rgba(255,255,255,.4);"></div>
<div style="left:516.84px;top:393.96px;width:0.60px;height:9.72px;background:rgba(255,255,255,.4);"></div>
<div style="left:526.00px;top:393.96px;width:0.60px;height:9.72px;background:rgba(255,255,255,.4);"></div>
<div style="left:537.20px;top:393.96px;width:0.60px;height:9.72px;background:rgba(255,255,255,.4);"></div>
<div style="left:248.6px;top:394.66px;width:4.96px;height:8.32px;background:linear-gradient(90deg,#f7585c,#fbc0c2);border:.5px solid rgba(247,88,92,.35);border-left-color:#f7585c;"></div>
<div style="left:309.8px;top:394.66px;width:6.61px;height:8.32px;background:linear-gradient(90deg,#ffb62a,#ffebc4);border:.5px solid rgba(255,182,42,.3);border-left-color:#ffb62a;"></div>
<div class="t" style="top:395.54px;font-size:6.8px;line-height:8.16px;color:#1c1c1c;left:-117.30px;width:300px;text-align:center;transform-origin:50% 50%;transform:scaleX(0.945);">109</div>
<div class="t" style="top:395.54px;font-size:6.8px;line-height:8.16px;color:#1c1c1c;right:545.80px;transform-origin:100% 50%;transform:scaleX(0.945);">6</div>
<div class="t" style="top:395.54px;font-size:6.8px;line-height:8.16px;color:#1c1c1c;left:-73.10px;width:300px;text-align:center;transform-origin:50% 50%;transform:scaleX(0.945);">julio</div>
<div class="t" style="top:395.54px;font-size:6.8px;line-height:8.16px;color:#1c1c1c;left:-38.55px;width:300px;text-align:center;transform-origin:50% 50%;transform:scaleX(0.945);">2017</div>
<div class="t" style="top:395.54px;font-size:6.8px;line-height:8.16px;color:#1c1c1c;left:126.80px;transform-origin:0 50%;transform:scaleX(0.985);">Nahum Neftaly Diaz Ruiz</div>
<div class="t" style="top:395.54px;font-size:6.8px;line-height:8.16px;color:#111;font-weight:bold;left:250.60px;transform-origin:0 50%;transform:scaleX(0.945);">$</div>
<div class="t" style="top:395.54px;font-size:6.8px;line-height:8.16px;color:#111;font-weight:bold;right:310.40px;transform-origin:100% 50%;transform:scaleX(0.945);">1,210.00</div>
<div class="t" style="top:395.54px;font-size:6.8px;line-height:8.16px;color:#1c1c1c;left:150.60px;width:300px;text-align:center;transform-origin:50% 50%;transform:scaleX(0.945);">15%</div>
<div class="t" style="top:395.54px;font-size:6.8px;line-height:8.16px;color:#111;font-weight:bold;left:311.80px;transform-origin:0 50%;transform:scaleX(0.945);">$</div>
<div class="t" style="top:395.54px;font-size:6.8px;line-height:8.16px;color:#111;font-weight:bold;right:253.00px;transform-origin:100% 50%;transform:scaleX(0.945);">180.00</div>
<div class="t" style="top:395.54px;font-size:6.8px;line-height:8.16px;color:#1c1c1c;left:352.20px;transform-origin:0 50%;transform:scaleX(0.945);">Activo</div>
<div class="t" style="top:395.54px;font-size:6.8px;line-height:8.16px;color:#1c1c1c;left:248.60px;width:300px;text-align:center;transform-origin:50% 50%;transform:scaleX(0.945);">1</div>
<svg style="left:380.9px;top:394.16px" width="2.4" height="2.4" viewBox="0 0 2 2"><path d="M0 0h2L0 2z" fill="#1f7a3a"/></svg>
<div style="left:417.58px;top:397px;width:6.6px;height:3px;border-radius:1px;background:#efc46c;border:.6px solid #d8a646;"></div>
<div style="left:426.75px;top:397px;width:6.6px;height:3px;border-radius:1px;background:#efc46c;border:.6px solid #d8a646;"></div>
<div style="left:435.92px;top:397px;width:6.6px;height:3px;border-radius:1px;background:#efc46c;border:.6px solid #d8a646;"></div>
<div style="left:445.08px;top:397px;width:6.6px;height:3px;border-radius:1px;background:#efc46c;border:.6px solid #d8a646;"></div>
<div style="left:454.25px;top:397px;width:6.6px;height:3px;border-radius:1px;background:#efc46c;border:.6px solid #d8a646;"></div>
<div style="left:463.42px;top:397px;width:6.6px;height:3px;border-radius:1px;background:#efc46c;border:.6px solid #d8a646;"></div>
<div style="left:472.59px;top:397px;width:6.6px;height:3px;border-radius:1px;background:#efc46c;border:.6px solid #d8a646;"></div>
<svg style="left:481.45px;top:395.42px" width="7.2" height="6.8" viewBox="0 0 7.2 6.8"><path d="M1 3.700l1.700 1.900C3.700 3.700 5 2.100 6.300 1" fill="none" stroke="#5b9a7f" stroke-width="2" stroke-linecap="round" stroke-linejoin="round"/></svg>
<svg style="left:490.62px;top:395.42px" width="7.2" height="6.8" viewBox="0 0 7.2 6.8"><path d="M1 3.700l1.700 1.900C3.700 3.700 5 2.100 6.300 1" fill="none" stroke="#5b9a7f" stroke-width="2" stroke-linecap="round" stroke-linejoin="round"/></svg>
<div class="t" style="top:395.54px;font-size:6.8px;line-height:8.16px;color:#1c1c1c;right:63.80px;transform-origin:100% 50%;transform:scaleX(0.945);">0</div>
<div style="left:489.64px;top:403.68px;width:9.17px;height:9.77px;background:#b6c8e8;"></div>
<div style="left:25.70px;top:403.38px;width:511.80px;height:0.60px;background:rgba(142,169,219,.32);"></div>
<div style="left:39.70px;top:403.68px;width:0.60px;height:9.72px;background:rgba(200,210,230,.4);"></div>
<div style="left:55.40px;top:403.68px;width:0.60px;height:9.72px;background:rgba(200,210,230,.4);"></div>
<div style="left:97.20px;top:403.68px;width:0.60px;height:9.72px;background:rgba(200,210,230,.4);"></div>
<div style="left:125.10px;top:403.68px;width:0.60px;height:9.72px;background:rgba(200,210,230,.4);"></div>
<div style="left:247.20px;top:403.68px;width:0.60px;height:9.72px;background:rgba(200,210,230,.4);"></div>
<div style="left:292.20px;top:403.68px;width:0.60px;height:9.72px;background:rgba(200,210,230,.4);"></div>
<div style="left:308.40px;top:403.68px;width:0.60px;height:9.72px;background:rgba(200,210,230,.4);"></div>
<div style="left:350.20px;top:403.68px;width:0.60px;height:9.72px;background:rgba(200,210,230,.4);"></div>
<div style="left:380.20px;top:403.68px;width:0.60px;height:9.72px;background:rgba(200,210,230,.4);"></div>
<div style="left:416.00px;top:403.68px;width:0.60px;height:9.72px;background:rgba(200,210,230,.4);"></div>
<div style="left:425.17px;top:403.68px;width:0.60px;height:9.72px;background:rgba(200,210,230,.4);"></div>
<div style="left:434.33px;top:403.68px;width:0.60px;height:9.72px;background:rgba(200,210,230,.4);"></div>
<div style="left:443.50px;top:403.68px;width:0.60px;height:9.72px;background:rgba(200,210,230,.4);"></div>
<div style="left:452.67px;top:403.68px;width:0.60px;height:9.72px;background:rgba(200,210,230,.4);"></div>
<div style="left:461.83px;top:403.68px;width:0.60px;height:9.72px;background:rgba(200,210,230,.4);"></div>
<div style="left:471.00px;top:403.68px;width:0.60px;height:9.72px;background:rgba(200,210,230,.4);"></div>
<div style="left:480.17px;top:403.68px;width:0.60px;height:9.72px;background:rgba(200,210,230,.4);"></div>
<div style="left:507.67px;top:403.68px;width:0.60px;height:9.72px;background:rgba(200,210,230,.4);"></div>
<div style="left:516.84px;top:403.68px;width:0.60px;height:9.72px;background:rgba(200,210,230,.4);"></div>
<div style="left:526.00px;top:403.68px;width:0.60px;height:9.72px;background:rgba(200,210,230,.4);"></div>
<div style="left:537.20px;top:403.68px;width:0.60px;height:9.72px;background:rgba(200,210,230,.4);"></div>
<div style="left:248.6px;top:404.38px;width:10.25px;height:8.32px;background:linear-gradient(90deg,#f7585c,#fbc0c2);border:.5px solid rgba(247,88,92,.35);border-left-color:#f7585c;"></div>
<div style="left:309.8px;top:404.38px;width:11.01px;height:8.32px;background:linear-gradient(90deg,#ffb62a,#ffebc4);border:.5px solid rgba(255,182,42,.3);border-left-color:#ffb62a;"></div>
<div class="t" style="top:405.26px;font-size:6.8px;line-height:8.16px;color:#1c1c1c;left:-117.30px;width:300px;text-align:center;transform-origin:50% 50%;transform:scaleX(0.945);">16</div>
<div class="t" style="top:405.26px;font-size:6.8px;line-height:8.16px;color:#1c1c1c;right:545.80px;transform-origin:100% 50%;transform:scaleX(0.945);">6</div>
<div class="t" style="top:405.26px;font-size:6.8px;line-height:8.16px;color:#1c1c1c;left:-73.10px;width:300px;text-align:center;transform-origin:50% 50%;transform:scaleX(0.945);">octubre</div>
<div class="t" style="top:405.26px;font-size:6.8px;line-height:8.16px;color:#1c1c1c;left:-38.55px;width:300px;text-align:center;transform-origin:50% 50%;transform:scaleX(0.945);">2016</div>
<div class="t" style="top:405.26px;font-size:6.8px;line-height:8.16px;color:#1c1c1c;left:126.80px;transform-origin:0 50%;transform:scaleX(0.985);">Rosendo Rubio Medina</div>
<div class="t" style="top:405.26px;font-size:6.8px;line-height:8.16px;color:#111;font-weight:bold;left:250.60px;transform-origin:0 50%;transform:scaleX(0.945);">$</div>
<div class="t" style="top:405.26px;font-size:6.8px;line-height:8.16px;color:#111;font-weight:bold;right:310.40px;transform-origin:100% 50%;transform:scaleX(0.945);">2,500.00</div>
<div class="t" style="top:405.26px;font-size:6.8px;line-height:8.16px;color:#1c1c1c;left:150.60px;width:300px;text-align:center;transform-origin:50% 50%;transform:scaleX(0.945);">10%</div>
<div class="t" style="top:405.26px;font-size:6.8px;line-height:8.16px;color:#111;font-weight:bold;left:311.80px;transform-origin:0 50%;transform:scaleX(0.945);">$</div>
<div class="t" style="top:405.26px;font-size:6.8px;line-height:8.16px;color:#111;font-weight:bold;right:253.00px;transform-origin:100% 50%;transform:scaleX(0.945);">300.00</div>
<div class="t" style="top:405.26px;font-size:6.8px;line-height:8.16px;color:#1c1c1c;left:352.20px;transform-origin:0 50%;transform:scaleX(0.945);">Activo</div>
<div class="t" style="top:405.26px;font-size:6.8px;line-height:8.16px;color:#1c1c1c;left:248.60px;width:300px;text-align:center;transform-origin:50% 50%;transform:scaleX(0.945);">1</div>
<svg style="left:380.9px;top:403.88px" width="2.4" height="2.4" viewBox="0 0 2 2"><path d="M0 0h2L0 2z" fill="#1f7a3a"/></svg>
<svg style="left:417.28px;top:405.14px" width="7.2" height="6.8" viewBox="0 0 7.2 6.8"><path d="M1 3.700l1.700 1.900C3.700 3.700 5 2.100 6.300 1" fill="none" stroke="#5b9a7f" stroke-width="2" stroke-linecap="round" stroke-linejoin="round"/></svg>
<svg style="left:426.45px;top:405.14px" width="7.2" height="6.8" viewBox="0 0 7.2 6.8"><path d="M1 3.700l1.700 1.900C3.700 3.700 5 2.100 6.300 1" fill="none" stroke="#5b9a7f" stroke-width="2" stroke-linecap="round" stroke-linejoin="round"/></svg>
<svg style="left:435.62px;top:405.14px" width="7.2" height="6.8" viewBox="0 0 7.2 6.8"><path d="M1 3.700l1.700 1.900C3.700 3.700 5 2.100 6.300 1" fill="none" stroke="#5b9a7f" stroke-width="2" stroke-linecap="round" stroke-linejoin="round"/></svg>
<svg style="left:444.78px;top:405.14px" width="7.2" height="6.8" viewBox="0 0 7.2 6.8"><path d="M1 3.700l1.700 1.900C3.700 3.700 5 2.100 6.300 1" fill="none" stroke="#5b9a7f" stroke-width="2" stroke-linecap="round" stroke-linejoin="round"/></svg>
<svg style="left:453.95px;top:405.14px" width="7.2" height="6.8" viewBox="0 0 7.2 6.8"><path d="M1 3.700l1.700 1.900C3.700 3.700 5 2.100 6.300 1" fill="none" stroke="#5b9a7f" stroke-width="2" stroke-linecap="round" stroke-linejoin="round"/></svg>
<svg style="left:463.12px;top:405.14px" width="7.2" height="6.8" viewBox="0 0 7.2 6.8"><path d="M1 3.700l1.700 1.900C3.700 3.700 5 2.100 6.300 1" fill="none" stroke="#5b9a7f" stroke-width="2" stroke-linecap="round" stroke-linejoin="round"/></svg>
<svg style="left:472.29px;top:405.14px" width="7.2" height="6.8" viewBox="0 0 7.2 6.8"><path d="M1 3.700l1.700 1.900C3.700 3.700 5 2.100 6.300 1" fill="none" stroke="#5b9a7f" stroke-width="2" stroke-linecap="round" stroke-linejoin="round"/></svg>
<svg style="left:481.45px;top:405.14px" width="7.2" height="6.8" viewBox="0 0 7.2 6.8"><path d="M1 3.700l1.700 1.900C3.700 3.700 5 2.100 6.300 1" fill="none" stroke="#5b9a7f" stroke-width="2" stroke-linecap="round" stroke-linejoin="round"/></svg>
<svg style="left:490.82px;top:405.14px" width="6.8" height="6.8" viewBox="0 0 6.8 6.8"><path d="M1.500 1.500l3.800 3.800M5.300 1.500L1.500 5.300" fill="none" stroke="#d4512f" stroke-width="2.300" stroke-linecap="round"/></svg>
<div class="t" style="top:405.26px;font-size:6.8px;line-height:8.16px;color:#1c1c1c;right:63.80px;transform-origin:100% 50%;transform:scaleX(0.945);">1</div>
<div style="left:25.70px;top:413.40px;width:511.80px;height:9.77px;background:#d9e1f2;"></div>
<div style="left:489.64px;top:413.40px;width:9.17px;height:9.77px;background:#a9bde3;"></div>
<div style="left:25.70px;top:413.10px;width:511.80px;height:0.60px;background:rgba(142,169,219,.32);"></div>
<div style="left:39.70px;top:413.40px;width:0.60px;height:9.72px;background:rgba(255,255,255,.4);"></div>
<div style="left:55.40px;top:413.40px;width:0.60px;height:9.72px;background:rgba(255,255,255,.4);"></div>
<div style="left:97.20px;top:413.40px;width:0.60px;height:9.72px;background:rgba(255,255,255,.4);"></div>
<div style="left:125.10px;top:413.40px;width:0.60px;height:9.72px;background:rgba(255,255,255,.4);"></div>
<div style="left:247.20px;top:413.40px;width:0.60px;height:9.72px;background:rgba(255,255,255,.4);"></div>
<div style="left:292.20px;top:413.40px;width:0.60px;height:9.72px;background:rgba(255,255,255,.4);"></div>
<div style="left:308.40px;top:413.40px;width:0.60px;height:9.72px;background:rgba(255,255,255,.4);"></div>
<div style="left:350.20px;top:413.40px;width:0.60px;height:9.72px;background:rgba(255,255,255,.4);"></div>
<div style="left:380.20px;top:413.40px;width:0.60px;height:9.72px;background:rgba(255,255,255,.4);"></div>
<div style="left:416.00px;top:413.40px;width:0.60px;height:9.72px;background:rgba(255,255,255,.4);"></div>
<div style="left:425.17px;top:413.40px;width:0.60px;height:9.72px;background:rgba(255,255,255,.4);"></div>
<div style="left:434.33px;top:413.40px;width:0.60px;height:9.72px;background:rgba(255,255,255,.4);"></div>
<div style="left:443.50px;top:413.40px;width:0.60px;height:9.72px;background:rgba(255,255,255,.4);"></div>
<div style="left:452.67px;top:413.40px;width:0.60px;height:9.72px;background:rgba(255,255,255,.4);"></div>
<div style="left:461.83px;top:413.40px;width:0.60px;height:9.72px;background:rgba(255,255,255,.4);"></div>
<div style="left:471.00px;top:413.40px;width:0.60px;height:9.72px;background:rgba(255,255,255,.4);"></div>
<div style="left:480.17px;top:413.40px;width:0.60px;height:9.72px;background:rgba(255,255,255,.4);"></div>
<div style="left:507.67px;top:413.40px;width:0.60px;height:9.72px;background:rgba(255,255,255,.4);"></div>
<div style="left:516.84px;top:413.40px;width:0.60px;height:9.72px;background:rgba(255,255,255,.4);"></div>
<div style="left:526.00px;top:413.40px;width:0.60px;height:9.72px;background:rgba(255,255,255,.4);"></div>
<div style="left:537.20px;top:413.40px;width:0.60px;height:9.72px;background:rgba(255,255,255,.4);"></div>
<div style="left:248.6px;top:414.10px;width:12.30px;height:8.32px;background:linear-gradient(90deg,#f7585c,#fbc0c2);border:.5px solid rgba(247,88,92,.35);border-left-color:#f7585c;"></div>
<div style="left:309.8px;top:414.10px;width:11.01px;height:8.32px;background:linear-gradient(90deg,#ffb62a,#ffebc4);border:.5px solid rgba(255,182,42,.3);border-left-color:#ffb62a;"></div>
<div class="t" style="top:414.98px;font-size:6.8px;line-height:8.16px;color:#1c1c1c;left:-117.30px;width:300px;text-align:center;transform-origin:50% 50%;transform:scaleX(0.945);">17</div>
<div class="t" style="top:414.98px;font-size:6.8px;line-height:8.16px;color:#1c1c1c;right:545.80px;transform-origin:100% 50%;transform:scaleX(0.945);">7</div>
<div class="t" style="top:414.98px;font-size:6.8px;line-height:8.16px;color:#1c1c1c;left:-73.10px;width:300px;text-align:center;transform-origin:50% 50%;transform:scaleX(0.945);">febrero</div>
<div class="t" style="top:414.98px;font-size:6.8px;line-height:8.16px;color:#1c1c1c;left:-38.55px;width:300px;text-align:center;transform-origin:50% 50%;transform:scaleX(0.945);">2016</div>
<div class="t" style="top:414.98px;font-size:6.8px;line-height:8.16px;color:#1c1c1c;left:126.80px;transform-origin:0 50%;transform:scaleX(0.985);">Edith Rodriguez Constantino</div>
<div class="t" style="top:414.98px;font-size:6.8px;line-height:8.16px;color:#111;font-weight:bold;left:250.60px;transform-origin:0 50%;transform:scaleX(0.945);">$</div>
<div class="t" style="top:414.98px;font-size:6.8px;line-height:8.16px;color:#111;font-weight:bold;right:310.40px;transform-origin:100% 50%;transform:scaleX(0.945);">3,000.00</div>
<div class="t" style="top:414.98px;font-size:6.8px;line-height:8.16px;color:#1c1c1c;left:150.60px;width:300px;text-align:center;transform-origin:50% 50%;transform:scaleX(0.945);">10%</div>
<div class="t" style="top:414.98px;font-size:6.8px;line-height:8.16px;color:#111;font-weight:bold;left:311.80px;transform-origin:0 50%;transform:scaleX(0.945);">$</div>
<div class="t" style="top:414.98px;font-size:6.8px;line-height:8.16px;color:#111;font-weight:bold;right:253.00px;transform-origin:100% 50%;transform:scaleX(0.945);">300.00</div>
<div class="t" style="top:414.98px;font-size:6.8px;line-height:8.16px;color:#1c1c1c;left:352.20px;transform-origin:0 50%;transform:scaleX(0.945);">Activo</div>
<div class="t" style="top:414.98px;font-size:6.8px;line-height:8.16px;color:#1c1c1c;left:248.60px;width:300px;text-align:center;transform-origin:50% 50%;transform:scaleX(0.945);">2</div>
<svg style="left:380.9px;top:413.60px" width="2.4" height="2.4" viewBox="0 0 2 2"><path d="M0 0h2L0 2z" fill="#1f7a3a"/></svg>
<svg style="left:417.28px;top:414.86px" width="7.2" height="6.8" viewBox="0 0 7.2 6.8"><path d="M1 3.700l1.700 1.900C3.700 3.700 5 2.100 6.300 1" fill="none" stroke="#5b9a7f" stroke-width="2" stroke-linecap="round" stroke-linejoin="round"/></svg>
<svg style="left:426.45px;top:414.86px" width="7.2" height="6.8" viewBox="0 0 7.2 6.8"><path d="M1 3.700l1.700 1.900C3.700 3.700 5 2.100 6.300 1" fill="none" stroke="#5b9a7f" stroke-width="2" stroke-linecap="round" stroke-linejoin="round"/></svg>
<svg style="left:435.62px;top:414.86px" width="7.2" height="6.8" viewBox="0 0 7.2 6.8"><path d="M1 3.700l1.700 1.900C3.700 3.700 5 2.100 6.300 1" fill="none" stroke="#5b9a7f" stroke-width="2" stroke-linecap="round" stroke-linejoin="round"/></svg>
<svg style="left:444.78px;top:414.86px" width="7.2" height="6.8" viewBox="0 0 7.2 6.8"><path d="M1 3.700l1.700 1.900C3.700 3.700 5 2.100 6.300 1" fill="none" stroke="#5b9a7f" stroke-width="2" stroke-linecap="round" stroke-linejoin="round"/></svg>
<svg style="left:453.95px;top:414.86px" width="7.2" height="6.8" viewBox="0 0 7.2 6.8"><path d="M1 3.700l1.700 1.900C3.700 3.700 5 2.100 6.300 1" fill="none" stroke="#5b9a7f" stroke-width="2" stroke-linecap="round" stroke-linejoin="round"/></svg>
<svg style="left:463.12px;top:414.86px" width="7.2" height="6.8" viewBox="0 0 7.2 6.8"><path d="M1 3.700l1.700 1.900C3.700 3.700 5 2.100 6.300 1" fill="none" stroke="#5b9a7f" stroke-width="2" stroke-linecap="round" stroke-linejoin="round"/></svg>
<svg style="left:472.29px;top:414.86px" width="7.2" height="6.8" viewBox="0 0 7.2 6.8"><path d="M1 3.700l1.700 1.900C3.700 3.700 5 2.100 6.300 1" fill="none" stroke="#5b9a7f" stroke-width="2" stroke-linecap="round" stroke-linejoin="round"/></svg>
<svg style="left:481.45px;top:414.86px" width="7.2" height="6.8" viewBox="0 0 7.2 6.8"><path d="M1 3.700l1.700 1.900C3.700 3.700 5 2.100 6.300 1" fill="none" stroke="#5b9a7f" stroke-width="2" stroke-linecap="round" stroke-linejoin="round"/></svg>
<svg style="left:490.62px;top:414.86px" width="7.2" height="6.8" viewBox="0 0 7.2 6.8"><path d="M1 3.700l1.700 1.900C3.700 3.700 5 2.100 6.300 1" fill="none" stroke="#5b9a7f" stroke-width="2" stroke-linecap="round" stroke-linejoin="round"/></svg>
<div class="t" style="top:414.98px;font-size:6.8px;line-height:8.16px;color:#1c1c1c;right:63.80px;transform-origin:100% 50%;transform:scaleX(0.945);">0</div>
<div style="left:489.64px;top:423.12px;width:9.17px;height:9.77px;background:#b6c8e8;"></div>
<div style="left:25.70px;top:422.82px;width:511.80px;height:0.60px;background:rgba(142,169,219,.32);"></div>
<div style="left:39.70px;top:423.12px;width:0.60px;height:9.72px;background:rgba(200,210,230,.4);"></div>
<div style="left:55.40px;top:423.12px;width:0.60px;height:9.72px;background:rgba(200,210,230,.4);"></div>
<div style="left:97.20px;top:423.12px;width:0.60px;height:9.72px;background:rgba(200,210,230,.4);"></div>
<div style="left:125.10px;top:423.12px;width:0.60px;height:9.72px;background:rgba(200,210,230,.4);"></div>
<div style="left:247.20px;top:423.12px;width:0.60px;height:9.72px;background:rgba(200,210,230,.4);"></div>
<div style="left:292.20px;top:423.12px;width:0.60px;height:9.72px;background:rgba(200,210,230,.4);"></div>
<div style="left:308.40px;top:423.12px;width:0.60px;height:9.72px;background:rgba(200,210,230,.4);"></div>
<div style="left:350.20px;top:423.12px;width:0.60px;height:9.72px;background:rgba(200,210,230,.4);"></div>
<div style="left:380.20px;top:423.12px;width:0.60px;height:9.72px;background:rgba(200,210,230,.4);"></div>
<div style="left:416.00px;top:423.12px;width:0.60px;height:9.72px;background:rgba(200,210,230,.4);"></div>
<div style="left:425.17px;top:423.12px;width:0.60px;height:9.72px;background:rgba(200,210,230,.4);"></div>
<div style="left:434.33px;top:423.12px;width:0.60px;height:9.72px;background:rgba(200,210,230,.4);"></div>
<div style="left:443.50px;top:423.12px;width:0.60px;height:9.72px;background:rgba(200,210,230,.4);"></div>
<div style="left:452.67px;top:423.12px;width:0.60px;height:9.72px;background:rgba(200,210,230,.4);"></div>
<div style="left:461.83px;top:423.12px;width:0.60px;height:9.72px;background:rgba(200,210,230,.4);"></div>
<div style="left:471.00px;top:423.12px;width:0.60px;height:9.72px;background:rgba(200,210,230,.4);"></div>
<div style="left:480.17px;top:423.12px;width:0.60px;height:9.72px;background:rgba(200,210,230,.4);"></div>
<div style="left:507.67px;top:423.12px;width:0.60px;height:9.72px;background:rgba(200,210,230,.4);"></div>
<div style="left:516.84px;top:423.12px;width:0.60px;height:9.72px;background:rgba(200,210,230,.4);"></div>
<div style="left:526.00px;top:423.12px;width:0.60px;height:9.72px;background:rgba(200,210,230,.4);"></div>
<div style="left:537.20px;top:423.12px;width:0.60px;height:9.72px;background:rgba(200,210,230,.4);"></div>
<div style="left:248.6px;top:423.82px;width:20.50px;height:8.32px;background:linear-gradient(90deg,#f7585c,#fbc0c2);border:.5px solid rgba(247,88,92,.35);border-left-color:#f7585c;"></div>
<div style="left:309.8px;top:423.82px;width:18.35px;height:8.32px;background:linear-gradient(90deg,#ffb62a,#ffebc4);border:.5px solid rgba(255,182,42,.3);border-left-color:#ffb62a;"></div>
<div class="t" style="top:424.70px;font-size:6.8px;line-height:8.16px;color:#1c1c1c;left:-117.30px;width:300px;text-align:center;transform-origin:50% 50%;transform:scaleX(0.945);">18</div>
<div class="t" style="top:424.70px;font-size:6.8px;line-height:8.16px;color:#1c1c1c;right:545.80px;transform-origin:100% 50%;transform:scaleX(0.945);">7</div>
<div class="t" style="top:424.70px;font-size:6.8px;line-height:8.16px;color:#1c1c1c;left:-73.10px;width:300px;text-align:center;transform-origin:50% 50%;transform:scaleX(0.945);">febrero</div>
<div class="t" style="top:424.70px;font-size:6.8px;line-height:8.16px;color:#1c1c1c;left:-38.55px;width:300px;text-align:center;transform-origin:50% 50%;transform:scaleX(0.945);">2016</div>
<div class="t" style="top:424.70px;font-size:6.8px;line-height:8.16px;color:#1c1c1c;left:126.80px;transform-origin:0 50%;transform:scaleX(0.985);">Juan Jose Rubio Nuñez</div>
<div class="t" style="top:424.70px;font-size:6.8px;line-height:8.16px;color:#111;font-weight:bold;left:250.60px;transform-origin:0 50%;transform:scaleX(0.945);">$</div>
<div class="t" style="top:424.70px;font-size:6.8px;line-height:8.16px;color:#111;font-weight:bold;right:310.40px;transform-origin:100% 50%;transform:scaleX(0.945);">5,000.00</div>
<div class="t" style="top:424.70px;font-size:6.8px;line-height:8.16px;color:#1c1c1c;left:150.60px;width:300px;text-align:center;transform-origin:50% 50%;transform:scaleX(0.945);">10%</div>
<div class="t" style="top:424.70px;font-size:6.8px;line-height:8.16px;color:#111;font-weight:bold;left:311.80px;transform-origin:0 50%;transform:scaleX(0.945);">$</div>
<div class="t" style="top:424.70px;font-size:6.8px;line-height:8.16px;color:#111;font-weight:bold;right:253.00px;transform-origin:100% 50%;transform:scaleX(0.945);">500.00</div>
<div class="t" style="top:424.70px;font-size:6.8px;line-height:8.16px;color:#1c1c1c;left:352.20px;transform-origin:0 50%;transform:scaleX(0.945);">Activo</div>
<div class="t" style="top:424.70px;font-size:6.8px;line-height:8.16px;color:#1c1c1c;left:248.60px;width:300px;text-align:center;transform-origin:50% 50%;transform:scaleX(0.945);">2</div>
<svg style="left:380.9px;top:423.32px" width="2.4" height="2.4" viewBox="0 0 2 2"><path d="M0 0h2L0 2z" fill="#1f7a3a"/></svg>
<svg style="left:417.28px;top:424.58px" width="7.2" height="6.8" viewBox="0 0 7.2 6.8"><path d="M1 3.700l1.700 1.900C3.700 3.700 5 2.100 6.300 1" fill="none" stroke="#5b9a7f" stroke-width="2" stroke-linecap="round" stroke-linejoin="round"/></svg>
<svg style="left:426.45px;top:424.58px" width="7.2" height="6.8" viewBox="0 0 7.2 6.8"><path d="M1 3.700l1.700 1.900C3.700 3.700 5 2.100 6.300 1" fill="none" stroke="#5b9a7f" stroke-width="2" stroke-linecap="round" stroke-linejoin="round"/></svg>
<svg style="left:435.62px;top:424.58px" width="7.2" height="6.8" viewBox="0 0 7.2 6.8"><path d="M1 3.700l1.700 1.900C3.700 3.700 5 2.100 6.300 1" fill="none" stroke="#5b9a7f" stroke-width="2" stroke-linecap="round" stroke-linejoin="round"/></svg>
<svg style="left:444.78px;top:424.58px" width="7.2" height="6.8" viewBox="0 0 7.2 6.8"><path d="M1 3.700l1.700 1.900C3.700 3.700 5 2.100 6.300 1" fill="none" stroke="#5b9a7f" stroke-width="2" stroke-linecap="round" stroke-linejoin="round"/></svg>
<svg style="left:453.95px;top:424.58px" width="7.2" height="6.8" viewBox="0 0 7.2 6.8"><path d="M1 3.700l1.700 1.900C3.700 3.700 5 2.100 6.300 1" fill="none" stroke="#5b9a7f" stroke-width="2" stroke-linecap="round" stroke-linejoin="round"/></svg>
<svg style="left:463.12px;top:424.58px" width="7.2" height="6.8" viewBox="0 0 7.2 6.8"><path d="M1 3.700l1.700 1.900C3.700 3.700 5 2.100 6.300 1" fill="none" stroke="#5b9a7f" stroke-width="2" stroke-linecap="round" stroke-linejoin="round"/></svg>
<svg style="left:472.29px;top:424.58px" width="7.2" height="6.8" viewBox="0 0 7.2 6.8"><path d="M1 3.700l1.700 1.900C3.700 3.700 5 2.100 6.300 1" fill="none" stroke="#5b9a7f" stroke-width="2" stroke-linecap="round" stroke-linejoin="round"/></svg>
<svg style="left:481.45px;top:424.58px" width="7.2" height="6.8" viewBox="0 0 7.2 6.8"><path d="M1 3.700l1.700 1.900C3.700 3.700 5 2.100 6.300 1" fill="none" stroke="#5b9a7f" stroke-width="2" stroke-linecap="round" stroke-linejoin="round"/></svg>
<svg style="left:490.62px;top:424.58px" width="7.2" height="6.8" viewBox="0 0 7.2 6.8"><path d="M1 3.700l1.700 1.900C3.700 3.700 5 2.100 6.300 1" fill="none" stroke="#5b9a7f" stroke-width="2" stroke-linecap="round" stroke-linejoin="round"/></svg>
<div class="t" style="top:424.70px;font-size:6.8px;line-height:8.16px;color:#1c1c1c;right:63.80px;transform-origin:100% 50%;transform:scaleX(0.945);">0</div>
<div style="left:25.70px;top:432.84px;width:511.80px;height:9.77px;background:#d9e1f2;"></div>
<div style="left:489.64px;top:432.84px;width:9.17px;height:9.77px;background:#a9bde3;"></div>
<div style="left:25.70px;top:432.54px;width:511.80px;height:0.60px;background:rgba(142,169,219,.32);"></div>
<div style="left:39.70px;top:432.84px;width:0.60px;height:9.72px;background:rgba(255,255,255,.4);"></div>
<div style="left:55.40px;top:432.84px;width:0.60px;height:9.72px;background:rgba(255,255,255,.4);"></div>
<div style="left:97.20px;top:432.84px;width:0.60px;height:9.72px;background:rgba(255,255,255,.4);"></div>
<div style="left:125.10px;top:432.84px;width:0.60px;height:9.72px;background:rgba(255,255,255,.4);"></div>
<div style="left:247.20px;top:432.84px;width:0.60px;height:9.72px;background:rgba(255,255,255,.4);"></div>
<div style="left:292.20px;top:432.84px;width:0.60px;height:9.72px;background:rgba(255,255,255,.4);"></div>
<div style="left:308.40px;top:432.84px;width:0.60px;height:9.72px;background:rgba(255,255,255,.4);"></div>
<div style="left:350.20px;top:432.84px;width:0.60px;height:9.72px;background:rgba(255,255,255,.4);"></div>
<div style="left:380.20px;top:432.84px;width:0.60px;height:9.72px;background:rgba(255,255,255,.4);"></div>
<div style="left:416.00px;top:432.84px;width:0.60px;height:9.72px;background:rgba(255,255,255,.4);"></div>
<div style="left:425.17px;top:432.84px;width:0.60px;height:9.72px;background:rgba(255,255,255,.4);"></div>
<div style="left:434.33px;top:432.84px;width:0.60px;height:9.72px;background:rgba(255,255,255,.4);"></div>
<div style="left:443.50px;top:432.84px;width:0.60px;height:9.72px;background:rgba(255,255,255,.4);"></div>
<div style="left:452.67px;top:432.84px;width:0.60px;height:9.72px;background:rgba(255,255,255,.4);"></div>
<div style="left:461.83px;top:432.84px;width:0.60px;height:9.72px;background:rgba(255,255,255,.4);"></div>
<div style="left:471.00px;top:432.84px;width:0.60px;height:9.72px;background:rgba(255,255,255,.4);"></div>
<div style="left:480.17px;top:432.84px;width:0.60px;height:9.72px;background:rgba(255,255,255,.4);"></div>
<div style="left:507.67px;top:432.84px;width:0.60px;height:9.72px;background:rgba(255,255,255,.4);"></div>
<div style="left:516.84px;top:432.84px;width:0.60px;height:9.72px;background:rgba(255,255,255,.4);"></div>
<div style="left:526.00px;top:432.84px;width:0.60px;height:9.72px;background:rgba(255,255,255,.4);"></div>
<div style="left:537.20px;top:432.84px;width:0.60px;height:9.72px;background:rgba(255,255,255,.4);"></div>
<div style="left:248.6px;top:433.54px;width:8.20px;height:8.32px;background:linear-gradient(90deg,#f7585c,#fbc0c2);border:.5px solid rgba(247,88,92,.35);border-left-color:#f7585c;"></div>
<div style="left:309.8px;top:433.54px;width:11.01px;height:8.32px;background:linear-gradient(90deg,#ffb62a,#ffebc4);border:.5px solid rgba(255,182,42,.3);border-left-color:#ffb62a;"></div>
<div class="t" style="top:434.42px;font-size:6.8px;line-height:8.16px;color:#1c1c1c;left:-117.30px;width:300px;text-align:center;transform-origin:50% 50%;transform:scaleX(0.945);">107</div>
<div class="t" style="top:434.42px;font-size:6.8px;line-height:8.16px;color:#1c1c1c;right:545.80px;transform-origin:100% 50%;transform:scaleX(0.945);">8</div>
<div class="t" style="top:434.42px;font-size:6.8px;line-height:8.16px;color:#1c1c1c;left:-73.10px;width:300px;text-align:center;transform-origin:50% 50%;transform:scaleX(0.945);">septiembre</div>
<div class="t" style="top:434.42px;font-size:6.8px;line-height:8.16px;color:#1c1c1c;left:-38.55px;width:300px;text-align:center;transform-origin:50% 50%;transform:scaleX(0.945);">2017</div>
<div class="t" style="top:434.42px;font-size:6.8px;line-height:8.16px;color:#1c1c1c;left:126.80px;transform-origin:0 50%;transform:scaleX(0.985);">Martha Gutierrez Garcia</div>
<div class="t" style="top:434.42px;font-size:6.8px;line-height:8.16px;color:#111;font-weight:bold;left:250.60px;transform-origin:0 50%;transform:scaleX(0.945);">$</div>
<div class="t" style="top:434.42px;font-size:6.8px;line-height:8.16px;color:#111;font-weight:bold;right:310.40px;transform-origin:100% 50%;transform:scaleX(0.945);">2,000.00</div>
<div class="t" style="top:434.42px;font-size:6.8px;line-height:8.16px;color:#1c1c1c;left:150.60px;width:300px;text-align:center;transform-origin:50% 50%;transform:scaleX(0.945);">15%</div>
<div class="t" style="top:434.42px;font-size:6.8px;line-height:8.16px;color:#111;font-weight:bold;left:311.80px;transform-origin:0 50%;transform:scaleX(0.945);">$</div>
<div class="t" style="top:434.42px;font-size:6.8px;line-height:8.16px;color:#111;font-weight:bold;right:253.00px;transform-origin:100% 50%;transform:scaleX(0.945);">300.00</div>
<div class="t" style="top:434.42px;font-size:6.8px;line-height:8.16px;color:#1c1c1c;left:352.20px;transform-origin:0 50%;transform:scaleX(0.945);">Activo</div>
<div class="t" style="top:434.42px;font-size:6.8px;line-height:8.16px;color:#1c1c1c;left:248.60px;width:300px;text-align:center;transform-origin:50% 50%;transform:scaleX(0.945);">2</div>
<svg style="left:380.9px;top:433.04px" width="2.4" height="2.4" viewBox="0 0 2 2"><path d="M0 0h2L0 2z" fill="#1f7a3a"/></svg>
<div style="left:417.58px;top:436px;width:6.6px;height:3px;border-radius:1px;background:#efc46c;border:.6px solid #d8a646;"></div>
<div style="left:426.75px;top:436px;width:6.6px;height:3px;border-radius:1px;background:#efc46c;border:.6px solid #d8a646;"></div>
<div style="left:435.92px;top:436px;width:6.6px;height:3px;border-radius:1px;background:#efc46c;border:.6px solid #d8a646;"></div>
<div style="left:445.08px;top:436px;width:6.6px;height:3px;border-radius:1px;background:#efc46c;border:.6px solid #d8a646;"></div>
<div style="left:454.25px;top:436px;width:6.6px;height:3px;border-radius:1px;background:#efc46c;border:.6px solid #d8a646;"></div>
<div style="left:463.42px;top:436px;width:6.6px;height:3px;border-radius:1px;background:#efc46c;border:.6px solid #d8a646;"></div>
<div style="left:472.59px;top:436px;width:6.6px;height:3px;border-radius:1px;background:#efc46c;border:.6px solid #d8a646;"></div>
<div style="left:481.75px;top:436px;width:6.6px;height:3px;border-radius:1px;background:#efc46c;border:.6px solid #d8a646;"></div>
<div style="left:490.92px;top:436px;width:6.6px;height:3px;border-radius:1px;background:#efc46c;border:.6px solid #d8a646;"></div>
<div class="t" style="top:434.42px;font-size:6.8px;line-height:8.16px;color:#1c1c1c;right:63.80px;transform-origin:100% 50%;transform:scaleX(0.945);">0</div>
<div style="left:537.10px;top:219.00px;width:0.80px;height:218.00px;background:#a9bde3;"></div>
<div style="left:40.00px;top:248.16px;width:497.50px;height:9.72px;background:rgba(0,0,0,.2);"></div>
<div style="left:25.20px;top:247.56px;width:512.80px;height:10.92px;border:.85px solid #2f8555;"></div>
<div style="left:536.00px;top:256.48px;width:3.40px;height:3.40px;background:#fff;"></div>
<div style="left:536.60px;top:256.98px;width:2.50px;height:2.50px;background:#2a7d50;"></div>
</div>
<div class="t" style="top:200.20px;font-size:15px;line-height:18.00px;color:#c00000;font-weight:bold;left:563.60px;transform-origin:0 50%;">Concentrado</div>
<div style="left:560.60px;top:238.14px;width:45.00px;height:29.76px;background:#3a5485;"></div>
<div style="left:561.00px;top:238.74px;width:45.00px;height:9.12px;background:#1f3864;"></div>
<div class="t" style="top:239.78px;font-size:7.2px;line-height:8.64px;color:#fff;font-weight:bold;left:562.80px;transform-origin:0 50%;transform:scaleX(0.850);">Capital invertido</div>
<div style="left:561.00px;top:248.46px;width:45.00px;height:9.12px;background:#1f3864;"></div>
<div class="t" style="top:249.50px;font-size:7.2px;line-height:8.64px;color:#fff;font-weight:bold;left:562.80px;transform-origin:0 50%;transform:scaleX(0.850);">Interes mensual</div>
<div style="left:561.00px;top:258.18px;width:45.00px;height:9.12px;background:#1f3864;"></div>
<div class="t" style="top:259.22px;font-size:7.2px;line-height:8.64px;color:#fff;font-weight:bold;left:562.80px;transform-origin:0 50%;transform:scaleX(0.850);">Porcentaje ¿anual?</div>
<div style="left:560.60px;top:277.02px;width:45.00px;height:39.48px;background:#1f3864;"></div>
<div style="left:561.00px;top:277.62px;width:45.00px;height:9.12px;background:#2f5597;"></div>
<div class="t" style="top:278.66px;font-size:7.2px;line-height:8.64px;color:#fff;font-weight:bold;left:562.80px;transform-origin:0 50%;transform:scaleX(0.850);">Prestamos realizados</div>
<div style="left:561.00px;top:287.34px;width:45.00px;height:9.12px;background:#2f5597;"></div>
<div class="t" style="top:288.38px;font-size:7.2px;line-height:8.64px;color:#fff;font-weight:bold;left:562.80px;transform-origin:0 50%;transform:scaleX(0.850);">Cuentas activas</div>
<div style="left:561.00px;top:297.06px;width:45.00px;height:9.12px;background:#2f5597;"></div>
<div class="t" style="top:298.10px;font-size:7.2px;line-height:8.64px;color:#fff;font-weight:bold;left:562.80px;transform-origin:0 50%;transform:scaleX(0.850);">Clientes actuales</div>
<div style="left:561.00px;top:306.78px;width:45.00px;height:9.12px;background:#2f5597;"></div>
<div class="t" style="top:307.82px;font-size:7.2px;line-height:8.64px;color:#fff;font-weight:bold;left:562.80px;transform-origin:0 50%;transform:scaleX(0.850);">Día con mayor cobro</div>
<div style="left:560.60px;top:325.62px;width:45.00px;height:29.76px;background:#1f3864;"></div>
<div style="left:561.00px;top:326.22px;width:45.00px;height:9.12px;background:#2f5597;"></div>
<div class="t" style="top:327.26px;font-size:7.2px;line-height:8.64px;color:#fff;font-weight:bold;left:562.80px;transform-origin:0 50%;transform:scaleX(0.850);">Cuentas con 1 falta</div>
<div style="left:561.00px;top:335.94px;width:45.00px;height:9.12px;background:#2f5597;"></div>
<div class="t" style="top:336.98px;font-size:7.2px;line-height:8.64px;color:#fff;font-weight:bold;left:562.80px;transform-origin:0 50%;transform:scaleX(0.850);">Cuentas con 2 faltas</div>
<div style="left:561.00px;top:345.66px;width:45.00px;height:9.12px;background:#2f5597;"></div>
<div class="t" style="top:346.70px;font-size:7.2px;line-height:8.64px;color:#fff;font-weight:bold;left:562.80px;transform-origin:0 50%;transform:scaleX(0.850);">Cuentas con 3 faltas</div>
<div style="left:0.00px;top:437.00px;width:600.00px;height:14.00px;background:#e6e6e6;"></div>
<div style="left:0.00px;top:437.00px;width:600.00px;height:0.70px;background:#c8c8c8;"></div>
<div style="left:0.00px;top:451.00px;width:600.00px;height:13.00px;background:#f3f3f3;"></div>
<svg style="left:14.4px;top:442.2px" width="3" height="4.6" viewBox="0 0 3 4.6"><path d="M2.6 .3L.5 2.3l2.1 2" fill="none" stroke="#bdbdbd" stroke-width=".8"/></svg>
<svg style="left:30px;top:442.2px" width="3" height="4.6" viewBox="0 0 3 4.6"><path d="M.4 .3l2.100 2L.400 4.300" fill="none" stroke="#bdbdbd" stroke-width=".8"/></svg>
<div style="left:54.50px;top:439.40px;width:0.70px;height:9.40px;background:#c0c0c0;"></div>
<div style="left:179.30px;top:439.40px;width:0.70px;height:9.40px;background:#c0c0c0;"></div>
<div style="left:223.00px;top:439.40px;width:0.70px;height:9.40px;background:#c0c0c0;"></div>
<div style="left:257.30px;top:439.40px;width:0.70px;height:9.40px;background:#c0c0c0;"></div>
<div style="left:96.00px;top:437.00px;width:44.00px;height:14.00px;background:#fff;"></div>
<div style="left:96.00px;top:449.60px;width:44.00px;height:1.60px;background:#217346;"></div>
<div style="left:96.00px;top:437.60px;width:0.60px;height:12.00px;background:#d0d0d0;"></div>
<div style="left:139.60px;top:437.60px;width:0.60px;height:12.00px;background:#d0d0d0;"></div>
<div class="t" style="top:439.96px;font-size:7.4px;line-height:8.88px;color:#505050;left:62.00px;transform-origin:0 50%;transform:scaleX(0.916);">Principal</div>
<div class="t" style="top:439.96px;font-size:7.4px;line-height:8.88px;color:#217346;font-weight:bold;left:102.40px;transform-origin:0 50%;transform:scaleX(0.897);">Registros</div>
<div class="t" style="top:439.96px;font-size:7.4px;line-height:8.88px;color:#505050;left:147.50px;transform-origin:0 50%;transform:scaleX(0.879);">Clientes</div>
<div class="t" style="top:439.96px;font-size:7.4px;line-height:8.88px;color:#505050;left:187.00px;transform-origin:0 50%;transform:scaleX(0.932);">Inversion</div>
<div class="t" style="top:439.96px;font-size:7.4px;line-height:8.88px;color:#505050;left:229.60px;transform-origin:0 50%;transform:scaleX(0.886);">Reglas</div>
<svg style="left:275.2px;top:440.3px" width="8.4" height="8.4" viewBox="0 0 8.4 8.4"><circle cx="4.2" cy="4.2" r="3.7" fill="none" stroke="#777" stroke-width=".7"/><path d="M4.2 2.2v4M2.2 4.2h4" stroke="#666" stroke-width=".7"/></svg>
<div style="left:518.00px;top:441.60px;width:0.80px;height:0.90px;background:#9c9c9c;"></div>
<div style="left:518.00px;top:444.20px;width:0.80px;height:0.90px;background:#9c9c9c;"></div>
<div style="left:518.00px;top:446.80px;width:0.80px;height:0.90px;background:#9c9c9c;"></div>
<div style="left:527.40px;top:440.80px;width:80.00px;height:7.80px;background:#fff;border:.6px solid #c4c4c4;"></div>
<div style="left:536.00px;top:440.80px;width:0.60px;height:7.80px;background:#c4c4c4;"></div>
<svg style="left:530.4px;top:443px" width="2.6" height="3.4" viewBox="0 0 2.6 3.4"><path d="M2.6 0v3.4L0 1.700z" fill="#555"/></svg>
<div class="t" style="top:454.52px;font-size:6.8px;line-height:8.16px;color:#444;left:4.00px;transform-origin:0 50%;transform:scaleX(0.870);">Listo</div>
<svg style="left:28px;top:454.4px" width="7.4" height="6.8" viewBox="0 0 7.4 6.8"><rect x=".4" y="1.200" width="6.6" height="5.200" fill="#fafafa" stroke="#777" stroke-width=".6"/><path d="M.4 2.800h6.600M2.600 2.800v3.600M4.800 2.800v3.600M.4 4.600h6.600" stroke="#9a9a9a" stroke-width=".4"/><circle cx="1.300" cy=".900" r=".9" fill="#555"/></svg>
<div class="t" style="top:454.52px;font-size:6.8px;line-height:8.16px;color:#444;left:537.60px;transform-origin:0 50%;transform:scaleX(0.887);">Promedio: 411.7117647</div>
</div></body></html>
